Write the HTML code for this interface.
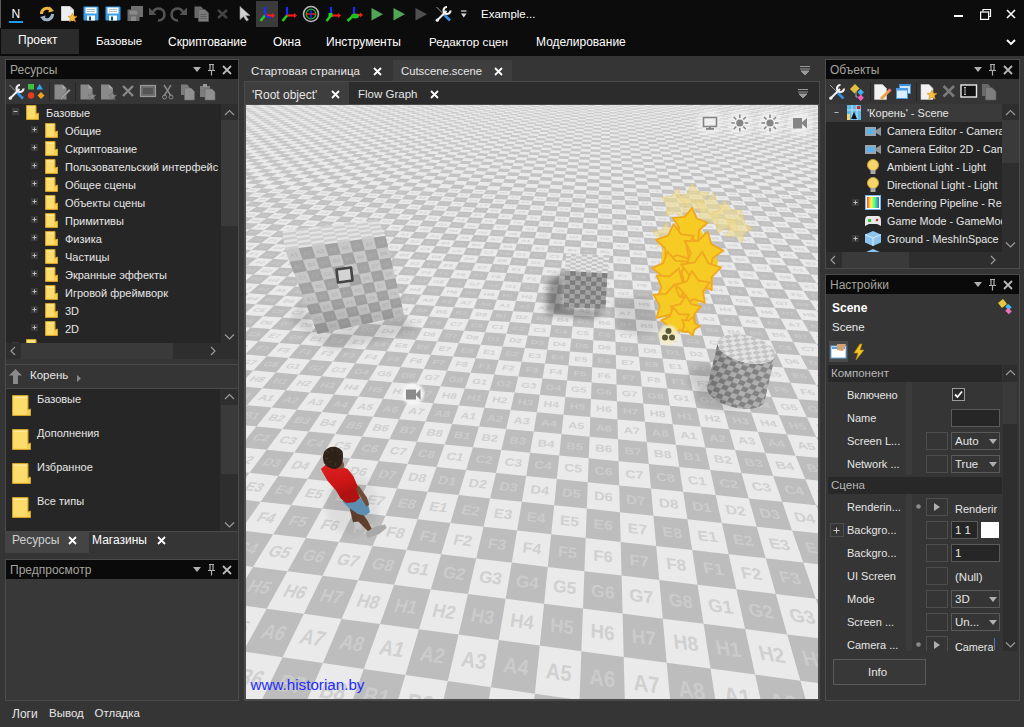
<!DOCTYPE html><html><head><meta charset="utf-8"><style>
*{margin:0;padding:0;box-sizing:border-box}
html,body{width:1024px;height:727px;overflow:hidden;background:#353535;font-family:"Liberation Sans",sans-serif;color:#e6e6e6}
body{position:relative}
.a{position:absolute}
.t{position:absolute;white-space:nowrap;line-height:1}
svg{position:absolute;overflow:visible}
</style></head><body><div class="a" style="left:0px;top:0px;width:1024px;height:56px;background:#0c0c0c;"></div><div class="a" style="left:0px;top:0px;width:1px;height:28px;background:#5a5a5a;"></div><div class="t" style="left:11.5px;top:7.84px;font-size:12px;color:#ffffff;">N</div><div class="a" style="left:9px;top:21px;width:14px;height:1.5px;background:#1e9be8;"></div><svg style="left:39px;top:6px" width="16" height="16" viewBox="0 0 16 16"><path d="M2.5 8A5.5 5.5 0 0 1 12 4" stroke="#f0b838" stroke-width="3" fill="none"/><path d="M10.5 0.5L15 5L9.5 6.5Z" fill="#f0b838"/><path d="M13.5 8A5.5 5.5 0 0 1 4 12" stroke="#9fb3c8" stroke-width="3" fill="none"/><path d="M5.5 15.5L1 11L6.5 9.5Z" fill="#9fb3c8"/></svg><svg style="left:61px;top:6px" width="16" height="16" viewBox="0 0 16 16"><path d="M0.5 0.5H9L12.5 4V14.5H0.5Z" fill="#eeeeee" stroke="#cfcfcf"/><path d="M9 0.5V4H12.5" fill="#d8d8d8"/><polygon points="11.5,7 12.9,10.2 16,10.4 13.6,12.5 14.4,15.6 11.5,13.9 8.6,15.6 9.4,12.5 7,10.4 10.1,10.2" fill="#f5c040" stroke="#e08a10" stroke-width="0.7"/></svg><svg style="left:83px;top:6px" width="16" height="15" viewBox="0 0 16 15"><rect x="0.5" y="0.5" width="15" height="14" rx="1" fill="#3a9ee8"/><rect x="2.5" y="1.5" width="11" height="6" fill="#ffffff"/><path d="M4 3.5H12M4 5.5H12" stroke="#9ab" stroke-width="0.8"/><rect x="4" y="9.5" width="8" height="5" fill="#ffffff"/><rect x="6" y="10.5" width="2" height="4" fill="#1a4a70"/></svg><svg style="left:105px;top:6px" width="16" height="15" viewBox="0 0 16 15"><rect x="0.5" y="0.5" width="15" height="14" rx="1" fill="#3a9ee8"/><rect x="2.5" y="1.5" width="11" height="6" fill="#ffffff"/><path d="M4 3.5H12M4 5.5H12" stroke="#9ab" stroke-width="0.8"/><rect x="4" y="9.5" width="8" height="5" fill="#ffffff"/><rect x="6" y="10.5" width="2" height="4" fill="#1a4a70"/></svg><svg style="left:127px;top:6px" width="16" height="15" viewBox="0 0 16 15"><rect x="4" y="0" width="12" height="11" fill="#707070"/><rect x="0.5" y="3.5" width="12" height="11.5" fill="#6a6a6a"/><rect x="2.5" y="4.5" width="8" height="4" fill="#8a8a8a"/><rect x="4" y="10.5" width="5" height="4.5" fill="#8a8a8a"/></svg><svg style="left:149px;top:6px" width="16" height="15" viewBox="0 0 16 15"><path d="M4 6A6 6 0 1 1 9 14.5" stroke="#555" stroke-width="2.6" fill="none"/><path d="M0 1.5V9H7.5Z" fill="#555"/></svg><svg style="left:171px;top:6px" width="16" height="15" viewBox="0 0 16 15"><path d="M12 6A6 6 0 1 0 7 14.5" stroke="#555" stroke-width="2.6" fill="none"/><path d="M16 1.5V9H8.5Z" fill="#555"/></svg><svg style="left:194px;top:6px" width="15" height="16" viewBox="0 0 15 16"><path d="M0.5 0.5H7L9 2.5V12H0.5Z" fill="#6a6a6a"/><path d="M4.5 3.5H11L14.5 7V15.5H4.5Z" fill="#7a7a7a" stroke="#5a5a5a" stroke-width="0.6"/><path d="M6.5 8.5H12.5M6.5 10.5H12.5M6.5 12.5H12.5" stroke="#555" stroke-width="0.8"/></svg><svg style="left:217px;top:9px" width="11" height="10" viewBox="0 0 11 10"><path d="M1 1L10 9M10 1L1 9" stroke="#444" stroke-width="2.4"/></svg><svg style="left:239px;top:6px" width="12" height="15" viewBox="0 0 12 15"><path d="M1 0.5L11 9.5H6.5L9.5 14L7.5 15L4.5 10.5L1 13.5Z" fill="#cfcfcf" stroke="#9a9a9a" stroke-width="0.6"/></svg><div class="a" style="left:256px;top:1px;width:22px;height:26px;background:#3b3b3b;"></div><svg style="left:252px;top:0" width="220" height="28" viewBox="252 0 220 28"><path d="M265 15.5V7" stroke="#1a2cff" stroke-width="2.2"/><path d="M265 15.5H273" stroke="#ff1a1a" stroke-width="2.2"/><path d="M272 13.0L275 15.5L272 18.0Z" fill="#ff1a1a"/><path d="M265 15.5L260.5 21" stroke="#22cc22" stroke-width="2.6"/><path d="M265 15.5L270.5 18" stroke="#1a2cff" stroke-width="1.6"/><path d="M287 15.5V7" stroke="#1a2cff" stroke-width="2.2"/><path d="M287 15.5H295" stroke="#ff1a1a" stroke-width="2.2"/><path d="M294 13.0L297 15.5L294 18.0Z" fill="#ff1a1a"/><path d="M287 15.5L282.5 21" stroke="#22cc22" stroke-width="2.6"/><circle cx="311" cy="14" r="7.5" stroke="#b8b8b8" stroke-width="1.6" fill="none"/><circle cx="311" cy="14" r="4.8" stroke="#22bb22" stroke-width="1.2" fill="none"/><path d="M306.5 14H315.5" stroke="#ff2020" stroke-width="1.4"/><path d="M311 9.5V18.5" stroke="#2030ff" stroke-width="1.4"/><path d="M331 15.5V7" stroke="#1a2cff" stroke-width="2.2"/><path d="M331 15.5H339" stroke="#ff1a1a" stroke-width="2.2"/><path d="M338 13.0L341 15.5L338 18.0Z" fill="#ff1a1a"/><path d="M331 15.5L326.5 21" stroke="#22cc22" stroke-width="2.6"/><rect x="328.5" y="13" width="4" height="4" fill="#22cc22"/><path d="M354 15V7" stroke="#1a2cff" stroke-width="2.2"/><path d="M354 15H361" stroke="#ff1a1a" stroke-width="2.2"/><path d="M360 12.5L363 15L360 17.5Z" fill="#ff1a1a"/><path d="M354 15L347.5 21" stroke="#22cc22" stroke-width="2.6"/><ellipse cx="355" cy="16" rx="4" ry="2.5" fill="#22bb22"/><path d="M371.5 8V20.5L383 14.2Z" fill="#50a656"/><path d="M393.5 8V20.5L405 14.2Z" fill="#50a656"/><path d="M415.5 8V20.5L427 14.2Z" fill="#505050"/><g transform="translate(435.5 6)"><path d="M1 1L8 8" stroke="#9a9a9a" stroke-width="1"/><path d="M8 8L14.5 14.5" stroke="#3a8fe0" stroke-width="2.6"/><path d="M1.5 14.5L11 5" stroke="#f0f0f0" stroke-width="2"/><path d="M11.5 1A3.5 3.5 0 1 0 15 4.5" stroke="#f0f0f0" stroke-width="2.2" fill="none"/><circle cx="1.8" cy="14.2" r="1.6" fill="#f0f0f0"/></g><path d="M461 11H466.5" stroke="#ddd" stroke-width="1.2"/><path d="M461 13.5H466.5L463.75 17.5Z" fill="#ddd"/></svg><div class="t" style="left:481px;top:9.27px;font-size:11.5px;color:#ffffff;">Example...</div><div class="a" style="left:954px;top:15px;width:9px;height:2px;background:#ffffff;"></div><svg style="left:980px;top:9px" width="11" height="11" viewBox="0 0 11 11"><path d="M3 2.5V0.5H10.5V7.5H8.5" stroke="#fff" stroke-width="1.2" fill="none"/><rect x="0.6" y="3" width="8" height="7.4" stroke="#fff" stroke-width="1.2" fill="none"/></svg><svg style="left:1006px;top:9px" width="10" height="10" viewBox="0 0 10 10"><path d="M1 1L9 9M9 1L1 9" stroke="#ffffff" stroke-width="1.6"/></svg><svg style="left:1006px;top:39px" width="10" height="7" viewBox="0 0 10 7"><path d="M1 1L5 5L9 1" stroke="#fff" stroke-width="1.8" fill="none"/></svg><div class="a" style="left:1px;top:29px;width:78px;height:25px;background:#2b2b2b;"></div><div class="t" style="left:18px;top:33.84px;font-size:12px;color:#ffffff;">Проект</div><div class="t" style="left:96px;top:36.27px;font-size:11.5px;color:#ffffff;">Базовые</div><div class="t" style="left:168px;top:35.84px;font-size:12px;color:#ffffff;">Скриптование</div><div class="t" style="left:273px;top:35.84px;font-size:12px;color:#ffffff;">Окна</div><div class="t" style="left:326px;top:35.84px;font-size:12px;color:#ffffff;">Инструменты</div><div class="t" style="left:429px;top:36.10px;font-size:11.7px;color:#ffffff;">Редактор сцен</div><div class="t" style="left:536px;top:35.84px;font-size:12px;color:#ffffff;">Моделирование</div><div class="a" style="left:5px;top:59px;width:234px;height:473px;background:#353535;border:1px solid #4b4b4b;"></div><div class="a" style="left:6px;top:60px;width:232px;height:19px;background:#0a0a0a;"></div><div class="t" style="left:10px;top:63.84px;font-size:12px;color:#a5a39e;">Ресурсы</div><svg style="left:193px;top:67px" width="8" height="5" viewBox="0 0 8 5"><path d="M0 0H8L4 5Z" fill="#b0b0b0"/></svg><svg style="left:207px;top:64px" width="9" height="12" viewBox="0 0 9 12"><path d="M2 0.5H7M3 0.5V6M6 0.5V6M1 6.5H8M4.5 7V11.5" stroke="#b0b0b0" stroke-width="1.2" fill="none"/></svg><svg style="left:222px;top:65px" width="10" height="10" viewBox="0 0 10 10"><path d="M1 1L9 9M9 1L1 9" stroke="#b8b8b8" stroke-width="1.8"/></svg><svg style="left:0;top:79px" width="240" height="24" viewBox="0 79 240 24"><g transform="translate(8.5 84)"><path d="M1 1L8 8" stroke="#9a9a9a" stroke-width="1"/><path d="M8 8L14.5 14.5" stroke="#3a8fe0" stroke-width="2.6"/><path d="M1.5 14.5L11 5" stroke="#f0f0f0" stroke-width="2"/><path d="M11.5 1A3.5 3.5 0 1 0 15 4.5" stroke="#f0f0f0" stroke-width="2.2" fill="none"/><circle cx="1.8" cy="14.2" r="1.6" fill="#f0f0f0"/></g><rect x="28" y="84" width="6" height="5.5" fill="#40c040"/><path d="M36.5 84L40 89.5H33.5Z" fill="#30a8f0" transform="translate(3 0)"/><circle cx="31" cy="95.5" r="3.2" fill="#e83a20"/><path d="M41 92L44.5 95.5L41 99L37.5 95.5Z" fill="#f0a020"/><rect x="49" y="83" width="1" height="18" fill="#262626"/><rect x="75" y="83" width="1" height="18" fill="#262626"/><g transform="translate(54 84)"><path d="M0.5 0.5H8.5L12.5 4.5V15.5H0.5Z" fill="#8a8a8a"/><path d="M8.5 0.5V4.5H12.5" fill="#a8a8a8"/><path d="M6 14L15 5L16.5 6.5L7.5 15.5Z" fill="#a0a0a0" stroke="#6a6a6a" stroke-width="0.6"/></g><g transform="translate(80 84)"><path d="M0.5 0.5H8.5L12.5 4.5V15.5H0.5Z" fill="#8a8a8a"/><path d="M8.5 0.5V4.5H12.5" fill="#a8a8a8"/><polygon points="12,8 13.2,11 16,11.2 13.8,13 14.6,16 12,14.3 9.4,16 10.2,13 8,11.2 10.8,11" fill="#8a8a8a" stroke="#6a6a6a" stroke-width="0.6"/></g><g transform="translate(100.5 84)"><path d="M0.5 0.5H8.5L12.5 4.5V15.5H0.5Z" fill="#8a8a8a"/><path d="M8.5 0.5V4.5H12.5" fill="#a8a8a8"/><polygon points="12,8 13.2,11 16,11.2 13.8,13 14.6,16 12,14.3 9.4,16 10.2,13 8,11.2 10.8,11" fill="#8a8a8a" stroke="#6a6a6a" stroke-width="0.6"/></g><path d="M123 86L133 96M133 86L123 96" stroke="#8a8a8a" stroke-width="2.4"/><rect x="140.5" y="85.5" width="15" height="11" fill="#6a6a6a" stroke="#9a9a9a" stroke-width="1.2"/><rect x="143" y="88" width="10" height="6" fill="#555"/><path d="M164 85L171 96M171 85L164 96" stroke="#8a8a8a" stroke-width="1.4"/><circle cx="164.5" cy="97" r="2" stroke="#8a8a8a" fill="none"/><circle cx="171" cy="97" r="2" stroke="#8a8a8a" fill="none"/><path d="M181 84.5H187L189 86.5V95H181Z" fill="#7c7c7c"/><path d="M184.5 88H191L194.5 91.5V100H184.5Z" fill="#909090" stroke="#6a6a6a" stroke-width="0.6"/><rect x="200" y="86" width="10" height="11" fill="#7c7c7c"/><rect x="203" y="84" width="4" height="3" fill="#9a9a9a"/><path d="M205 89H212L215 92V100H205Z" fill="#909090" stroke="#6a6a6a" stroke-width="0.6"/></svg><div class="a" style="left:6px;top:104px;width:232px;height:239px;background:#262626;"></div><div class="a" style="left:221px;top:104px;width:17px;height:239px;background:#2e2e2e;"></div><div class="a" style="left:221px;top:120px;width:17px;height:106px;background:#3a3a3a;"></div><svg style="left:224px;top:109px" width="11" height="8" viewBox="0 0 11 8"><path d="M1 6L5.5 1.5L10 6" stroke="#9a9a9a" stroke-width="1.2" fill="none"/></svg><svg style="left:224px;top:333px" width="11" height="8" viewBox="0 0 11 8"><path d="M1 1.5L5.5 6L10 1.5" stroke="#9a9a9a" stroke-width="1.2" fill="none"/></svg><div class="a" style="left:6px;top:104px;width:215px;height:239px;overflow:hidden"><svg style="left:6px;top:4px" width="7" height="7" viewBox="0 0 7 7"><rect x="0" y="0" width="7" height="7" fill="#3a3a3a"/><path d="M1.5 3.5H5.5" stroke="#bbb" stroke-width="1"/></svg><svg style="left:20px;top:1px" width="13" height="15" viewBox="0 0 13 15"><path d="M0.5 0.5H10L10 9L12.5 8V14.5H0.5Z" fill="#f6cf4e" stroke="#d2a326" stroke-width="1"/><path d="M1.5 1.5H9V13.5H1.5Z" fill="#fbdc6c"/><path d="M1.5 1.5H9V3H1.5Z" fill="#fde79a"/></svg><div class="t" style="left:40px;top:3.69px;font-size:11px;color:#e6e6e6;">Базовые</div><svg style="left:25px;top:22px" width="7" height="7" viewBox="0 0 7 7"><rect x="0" y="0" width="7" height="7" fill="#3a3a3a"/><path d="M1.5 3.5H5.5" stroke="#bbb" stroke-width="1"/><path d="M3.5 1.5V5.5" stroke="#bbb" stroke-width="1"/></svg><svg style="left:39px;top:19px" width="13" height="15" viewBox="0 0 13 15"><path d="M0.5 0.5H10L10 9L12.5 8V14.5H0.5Z" fill="#f6cf4e" stroke="#d2a326" stroke-width="1"/><path d="M1.5 1.5H9V13.5H1.5Z" fill="#fbdc6c"/><path d="M1.5 1.5H9V3H1.5Z" fill="#fde79a"/></svg><div class="t" style="left:59px;top:21.69px;font-size:11px;color:#e6e6e6;">Общие</div><svg style="left:25px;top:40px" width="7" height="7" viewBox="0 0 7 7"><rect x="0" y="0" width="7" height="7" fill="#3a3a3a"/><path d="M1.5 3.5H5.5" stroke="#bbb" stroke-width="1"/><path d="M3.5 1.5V5.5" stroke="#bbb" stroke-width="1"/></svg><svg style="left:39px;top:37px" width="13" height="15" viewBox="0 0 13 15"><path d="M0.5 0.5H10L10 9L12.5 8V14.5H0.5Z" fill="#f6cf4e" stroke="#d2a326" stroke-width="1"/><path d="M1.5 1.5H9V13.5H1.5Z" fill="#fbdc6c"/><path d="M1.5 1.5H9V3H1.5Z" fill="#fde79a"/></svg><div class="t" style="left:59px;top:39.69px;font-size:11px;color:#e6e6e6;">Скриптование</div><svg style="left:25px;top:58px" width="7" height="7" viewBox="0 0 7 7"><rect x="0" y="0" width="7" height="7" fill="#3a3a3a"/><path d="M1.5 3.5H5.5" stroke="#bbb" stroke-width="1"/><path d="M3.5 1.5V5.5" stroke="#bbb" stroke-width="1"/></svg><svg style="left:39px;top:55px" width="13" height="15" viewBox="0 0 13 15"><path d="M0.5 0.5H10L10 9L12.5 8V14.5H0.5Z" fill="#f6cf4e" stroke="#d2a326" stroke-width="1"/><path d="M1.5 1.5H9V13.5H1.5Z" fill="#fbdc6c"/><path d="M1.5 1.5H9V3H1.5Z" fill="#fde79a"/></svg><div class="t" style="left:59px;top:57.69px;font-size:11px;color:#e6e6e6;">Пользовательский интерфейс</div><svg style="left:25px;top:76px" width="7" height="7" viewBox="0 0 7 7"><rect x="0" y="0" width="7" height="7" fill="#3a3a3a"/><path d="M1.5 3.5H5.5" stroke="#bbb" stroke-width="1"/><path d="M3.5 1.5V5.5" stroke="#bbb" stroke-width="1"/></svg><svg style="left:39px;top:73px" width="13" height="15" viewBox="0 0 13 15"><path d="M0.5 0.5H10L10 9L12.5 8V14.5H0.5Z" fill="#f6cf4e" stroke="#d2a326" stroke-width="1"/><path d="M1.5 1.5H9V13.5H1.5Z" fill="#fbdc6c"/><path d="M1.5 1.5H9V3H1.5Z" fill="#fde79a"/></svg><div class="t" style="left:59px;top:75.69px;font-size:11px;color:#e6e6e6;">Общее сцены</div><svg style="left:25px;top:94px" width="7" height="7" viewBox="0 0 7 7"><rect x="0" y="0" width="7" height="7" fill="#3a3a3a"/><path d="M1.5 3.5H5.5" stroke="#bbb" stroke-width="1"/><path d="M3.5 1.5V5.5" stroke="#bbb" stroke-width="1"/></svg><svg style="left:39px;top:91px" width="13" height="15" viewBox="0 0 13 15"><path d="M0.5 0.5H10L10 9L12.5 8V14.5H0.5Z" fill="#f6cf4e" stroke="#d2a326" stroke-width="1"/><path d="M1.5 1.5H9V13.5H1.5Z" fill="#fbdc6c"/><path d="M1.5 1.5H9V3H1.5Z" fill="#fde79a"/></svg><div class="t" style="left:59px;top:93.69px;font-size:11px;color:#e6e6e6;">Объекты сцены</div><svg style="left:25px;top:112px" width="7" height="7" viewBox="0 0 7 7"><rect x="0" y="0" width="7" height="7" fill="#3a3a3a"/><path d="M1.5 3.5H5.5" stroke="#bbb" stroke-width="1"/><path d="M3.5 1.5V5.5" stroke="#bbb" stroke-width="1"/></svg><svg style="left:39px;top:109px" width="13" height="15" viewBox="0 0 13 15"><path d="M0.5 0.5H10L10 9L12.5 8V14.5H0.5Z" fill="#f6cf4e" stroke="#d2a326" stroke-width="1"/><path d="M1.5 1.5H9V13.5H1.5Z" fill="#fbdc6c"/><path d="M1.5 1.5H9V3H1.5Z" fill="#fde79a"/></svg><div class="t" style="left:59px;top:111.69px;font-size:11px;color:#e6e6e6;">Примитивы</div><svg style="left:25px;top:130px" width="7" height="7" viewBox="0 0 7 7"><rect x="0" y="0" width="7" height="7" fill="#3a3a3a"/><path d="M1.5 3.5H5.5" stroke="#bbb" stroke-width="1"/><path d="M3.5 1.5V5.5" stroke="#bbb" stroke-width="1"/></svg><svg style="left:39px;top:127px" width="13" height="15" viewBox="0 0 13 15"><path d="M0.5 0.5H10L10 9L12.5 8V14.5H0.5Z" fill="#f6cf4e" stroke="#d2a326" stroke-width="1"/><path d="M1.5 1.5H9V13.5H1.5Z" fill="#fbdc6c"/><path d="M1.5 1.5H9V3H1.5Z" fill="#fde79a"/></svg><div class="t" style="left:59px;top:129.69px;font-size:11px;color:#e6e6e6;">Физика</div><svg style="left:25px;top:148px" width="7" height="7" viewBox="0 0 7 7"><rect x="0" y="0" width="7" height="7" fill="#3a3a3a"/><path d="M1.5 3.5H5.5" stroke="#bbb" stroke-width="1"/><path d="M3.5 1.5V5.5" stroke="#bbb" stroke-width="1"/></svg><svg style="left:39px;top:145px" width="13" height="15" viewBox="0 0 13 15"><path d="M0.5 0.5H10L10 9L12.5 8V14.5H0.5Z" fill="#f6cf4e" stroke="#d2a326" stroke-width="1"/><path d="M1.5 1.5H9V13.5H1.5Z" fill="#fbdc6c"/><path d="M1.5 1.5H9V3H1.5Z" fill="#fde79a"/></svg><div class="t" style="left:59px;top:147.69px;font-size:11px;color:#e6e6e6;">Частицы</div><svg style="left:25px;top:166px" width="7" height="7" viewBox="0 0 7 7"><rect x="0" y="0" width="7" height="7" fill="#3a3a3a"/><path d="M1.5 3.5H5.5" stroke="#bbb" stroke-width="1"/><path d="M3.5 1.5V5.5" stroke="#bbb" stroke-width="1"/></svg><svg style="left:39px;top:163px" width="13" height="15" viewBox="0 0 13 15"><path d="M0.5 0.5H10L10 9L12.5 8V14.5H0.5Z" fill="#f6cf4e" stroke="#d2a326" stroke-width="1"/><path d="M1.5 1.5H9V13.5H1.5Z" fill="#fbdc6c"/><path d="M1.5 1.5H9V3H1.5Z" fill="#fde79a"/></svg><div class="t" style="left:59px;top:165.69px;font-size:11px;color:#e6e6e6;">Экранные эффекты</div><svg style="left:25px;top:184px" width="7" height="7" viewBox="0 0 7 7"><rect x="0" y="0" width="7" height="7" fill="#3a3a3a"/><path d="M1.5 3.5H5.5" stroke="#bbb" stroke-width="1"/><path d="M3.5 1.5V5.5" stroke="#bbb" stroke-width="1"/></svg><svg style="left:39px;top:181px" width="13" height="15" viewBox="0 0 13 15"><path d="M0.5 0.5H10L10 9L12.5 8V14.5H0.5Z" fill="#f6cf4e" stroke="#d2a326" stroke-width="1"/><path d="M1.5 1.5H9V13.5H1.5Z" fill="#fbdc6c"/><path d="M1.5 1.5H9V3H1.5Z" fill="#fde79a"/></svg><div class="t" style="left:59px;top:183.69px;font-size:11px;color:#e6e6e6;">Игровой фреймворк</div><svg style="left:25px;top:202px" width="7" height="7" viewBox="0 0 7 7"><rect x="0" y="0" width="7" height="7" fill="#3a3a3a"/><path d="M1.5 3.5H5.5" stroke="#bbb" stroke-width="1"/><path d="M3.5 1.5V5.5" stroke="#bbb" stroke-width="1"/></svg><svg style="left:39px;top:199px" width="13" height="15" viewBox="0 0 13 15"><path d="M0.5 0.5H10L10 9L12.5 8V14.5H0.5Z" fill="#f6cf4e" stroke="#d2a326" stroke-width="1"/><path d="M1.5 1.5H9V13.5H1.5Z" fill="#fbdc6c"/><path d="M1.5 1.5H9V3H1.5Z" fill="#fde79a"/></svg><div class="t" style="left:59px;top:201.69px;font-size:11px;color:#e6e6e6;">3D</div><svg style="left:25px;top:220px" width="7" height="7" viewBox="0 0 7 7"><rect x="0" y="0" width="7" height="7" fill="#3a3a3a"/><path d="M1.5 3.5H5.5" stroke="#bbb" stroke-width="1"/><path d="M3.5 1.5V5.5" stroke="#bbb" stroke-width="1"/></svg><svg style="left:39px;top:217px" width="13" height="15" viewBox="0 0 13 15"><path d="M0.5 0.5H10L10 9L12.5 8V14.5H0.5Z" fill="#f6cf4e" stroke="#d2a326" stroke-width="1"/><path d="M1.5 1.5H9V13.5H1.5Z" fill="#fbdc6c"/><path d="M1.5 1.5H9V3H1.5Z" fill="#fde79a"/></svg><div class="t" style="left:59px;top:219.69px;font-size:11px;color:#e6e6e6;">2D</div><svg style="left:6px;top:238px" width="7" height="7" viewBox="0 0 7 7"><rect x="0" y="0" width="7" height="7" fill="#3a3a3a"/><path d="M1.5 3.5H5.5" stroke="#bbb" stroke-width="1"/></svg><svg style="left:20px;top:235px" width="13" height="15" viewBox="0 0 13 15"><path d="M0.5 0.5H10L10 9L12.5 8V14.5H0.5Z" fill="#f6cf4e" stroke="#d2a326" stroke-width="1"/><path d="M1.5 1.5H9V13.5H1.5Z" fill="#fbdc6c"/><path d="M1.5 1.5H9V3H1.5Z" fill="#fde79a"/></svg></div><div class="a" style="left:6px;top:343px;width:232px;height:16px;background:#2e2e2e;"></div><div class="a" style="left:21px;top:343px;width:152px;height:16px;background:#3a3a3a;"></div><svg style="left:10px;top:346px" width="6" height="10" viewBox="0 0 6 10"><path d="M5 1L1 5L5 9" stroke="#9a9a9a" stroke-width="1.2" fill="none"/></svg><svg style="left:209.5px;top:346px" width="6" height="10" viewBox="0 0 6 10"><path d="M1 1L5 5L1 9" stroke="#9a9a9a" stroke-width="1.2" fill="none"/></svg><div class="a" style="left:6px;top:364px;width:232px;height:1px;background:#4b4b4b;"></div><svg style="left:9px;top:369px" width="13" height="15" viewBox="0 0 13 15"><path d="M6.5 0L13 6.5H9V15H4V6.5H0Z" fill="#8a8a8a"/></svg><div class="t" style="left:30px;top:370.27px;font-size:11.5px;color:#e6e6e6;">Корень</div><svg style="left:77px;top:375px" width="4" height="7" viewBox="0 0 4 7"><path d="M0 0L4 3.5L0 7Z" fill="#8a8a8a"/></svg><div class="a" style="left:6px;top:388px;width:232px;height:1px;background:#4b4b4b;"></div><div class="a" style="left:6px;top:389px;width:232px;height:142px;background:#262626;"></div><div class="a" style="left:220px;top:389px;width:18px;height:142px;background:#2e2e2e;"></div><div class="a" style="left:221px;top:405px;width:17px;height:69px;background:#3a3a3a;"></div><svg style="left:224px;top:393px" width="11" height="8" viewBox="0 0 11 8"><path d="M1 6L5.5 1.5L10 6" stroke="#9a9a9a" stroke-width="1.2" fill="none"/></svg><svg style="left:224px;top:521px" width="11" height="8" viewBox="0 0 11 8"><path d="M1 1.5L5.5 6L10 1.5" stroke="#9a9a9a" stroke-width="1.2" fill="none"/></svg><div class="a" style="left:6px;top:389px;width:214px;height:142px;overflow:hidden"><svg style="left:6px;top:6px" width="19" height="21" viewBox="0 0 19 21"><path d="M0.5 0.5H16L16 15L18.5 14V20.5H0.5Z" fill="#f6cf4e" stroke="#d2a326" stroke-width="1"/><path d="M1.5 1.5H15V19.5H1.5Z" fill="#fbdc6c"/><path d="M1.5 1.5H15V3H1.5Z" fill="#fde79a"/></svg><div class="t" style="left:31px;top:4.69px;font-size:11px;color:#e6e6e6;">Базовые</div><svg style="left:6px;top:40px" width="19" height="21" viewBox="0 0 19 21"><path d="M0.5 0.5H16L16 15L18.5 14V20.5H0.5Z" fill="#f6cf4e" stroke="#d2a326" stroke-width="1"/><path d="M1.5 1.5H15V19.5H1.5Z" fill="#fbdc6c"/><path d="M1.5 1.5H15V3H1.5Z" fill="#fde79a"/></svg><div class="t" style="left:31px;top:38.69px;font-size:11px;color:#e6e6e6;">Дополнения</div><svg style="left:6px;top:74px" width="19" height="21" viewBox="0 0 19 21"><path d="M0.5 0.5H16L16 15L18.5 14V20.5H0.5Z" fill="#f6cf4e" stroke="#d2a326" stroke-width="1"/><path d="M1.5 1.5H15V19.5H1.5Z" fill="#fbdc6c"/><path d="M1.5 1.5H15V3H1.5Z" fill="#fde79a"/></svg><div class="t" style="left:31px;top:72.69px;font-size:11px;color:#e6e6e6;">Избранное</div><svg style="left:6px;top:108px" width="19" height="21" viewBox="0 0 19 21"><path d="M0.5 0.5H16L16 15L18.5 14V20.5H0.5Z" fill="#f6cf4e" stroke="#d2a326" stroke-width="1"/><path d="M1.5 1.5H15V19.5H1.5Z" fill="#fbdc6c"/><path d="M1.5 1.5H15V3H1.5Z" fill="#fde79a"/></svg><div class="t" style="left:31px;top:106.69px;font-size:11px;color:#e6e6e6;">Все типы</div><svg style="left:6px;top:142px" width="19" height="21" viewBox="0 0 19 21"><path d="M0.5 0.5H16L16 15L18.5 14V20.5H0.5Z" fill="#f6cf4e" stroke="#d2a326" stroke-width="1"/><path d="M1.5 1.5H15V19.5H1.5Z" fill="#fbdc6c"/><path d="M1.5 1.5H15V3H1.5Z" fill="#fde79a"/></svg></div><div class="a" style="left:5px;top:531px;width:84px;height:22px;background:#444444;"></div><div class="t" style="left:12px;top:533.84px;font-size:12px;color:#d0d0d0;">Ресурсы</div><svg style="left:68px;top:536px" width="9" height="9" viewBox="0 0 9 9"><path d="M1 1L8 8M8 1L1 8" stroke="#ffffff" stroke-width="1.8"/></svg><div class="t" style="left:92px;top:533.84px;font-size:12px;color:#ffffff;">Магазины</div><svg style="left:157px;top:536px" width="9" height="9" viewBox="0 0 9 9"><path d="M1 1L8 8M8 1L1 8" stroke="#ffffff" stroke-width="1.8"/></svg><div class="a" style="left:5px;top:559px;width:234px;height:142px;background:#383838;border:1px solid #4b4b4b;"></div><div class="a" style="left:6px;top:560px;width:232px;height:19px;background:#0a0a0a;"></div><div class="t" style="left:10px;top:563.84px;font-size:12px;color:#a5a39e;">Предпросмотр</div><svg style="left:193px;top:567px" width="8" height="5" viewBox="0 0 8 5"><path d="M0 0H8L4 5Z" fill="#b0b0b0"/></svg><svg style="left:207px;top:564px" width="9" height="12" viewBox="0 0 9 12"><path d="M2 0.5H7M3 0.5V6M6 0.5V6M1 6.5H8M4.5 7V11.5" stroke="#b0b0b0" stroke-width="1.2" fill="none"/></svg><svg style="left:222px;top:565px" width="10" height="10" viewBox="0 0 10 10"><path d="M1 1L9 9M9 1L1 9" stroke="#b8b8b8" stroke-width="1.8"/></svg><div class="t" style="left:12px;top:707.84px;font-size:12px;color:#e6e6e6;">Логи</div><div class="t" style="left:49px;top:708.27px;font-size:11.5px;color:#e6e6e6;">Вывод</div><div class="t" style="left:94.5px;top:708.27px;font-size:11.5px;color:#e6e6e6;">Отладка</div><div class="a" style="left:238px;top:59px;width:1px;height:642px;background:#4b4b4b;"></div><div class="a" style="left:393px;top:60px;width:119px;height:21px;background:#3e3e3e;"></div><div class="t" style="left:251px;top:66.27px;font-size:11.5px;color:#e6e6e6;">Стартовая страница</div><svg style="left:373px;top:67px" width="9" height="9" viewBox="0 0 9 9"><path d="M1 1L8 8M8 1L1 8" stroke="#ffffff" stroke-width="1.8"/></svg><div class="t" style="left:401px;top:66.43px;font-size:11.3px;color:#e6e6e6;">Cutscene.scene</div><svg style="left:494px;top:67px" width="9" height="9" viewBox="0 0 9 9"><path d="M1 1L8 8M8 1L1 8" stroke="#ffffff" stroke-width="1.8"/></svg><svg style="left:800px;top:66px" width="10" height="9" viewBox="0 0 10 9"><path d="M0 0.5H10M0 3H10M1 5H9L5 9Z" fill="#9a9a9a" stroke="#9a9a9a" stroke-width="1"/></svg><div class="a" style="left:244px;top:81px;width:576px;height:620px;background:#4b4b4b;"></div><div class="a" style="left:245px;top:82px;width:574px;height:618px;background:#2c2c2c;"></div><div class="a" style="left:245px;top:82px;width:104px;height:22px;background:#3e3e3e;"></div><div class="t" style="left:252px;top:88.84px;font-size:12px;color:#e6e6e6;">'Root object'</div><svg style="left:331px;top:90px" width="9" height="9" viewBox="0 0 9 9"><path d="M1 1L8 8M8 1L1 8" stroke="#ffffff" stroke-width="1.8"/></svg><div class="t" style="left:358px;top:89.27px;font-size:11.5px;color:#e6e6e6;">Flow Graph</div><svg style="left:430px;top:90px" width="9" height="9" viewBox="0 0 9 9"><path d="M1 1L8 8M8 1L1 8" stroke="#ffffff" stroke-width="1.8"/></svg><svg style="left:798px;top:89px" width="10" height="9" viewBox="0 0 10 9"><path d="M0 0.5H10M0 3H10M1 5H9L5 9Z" fill="#9a9a9a" stroke="#9a9a9a" stroke-width="1"/></svg><div class="a" style="left:244px;top:104px;width:576px;height:597px;background:#4b4b4b;"></div><div class="a" style="left:246px;top:105px;width:572px;height:594px;overflow:hidden"><svg style="left:0;top:0;overflow:hidden" width="572" height="594" viewBox="246 105 572 594"><rect x="246" y="105" width="572" height="594" fill="#eaeaea"/><path fill="#bdbdbd" d="M688.0 283.9L706.8 285.0L710.0 294.1L690.5 292.9ZM725.9 286.1L745.0 287.3L749.4 296.6L729.6 295.3ZM764.3 288.5L783.8 289.6L789.4 299.1L769.4 297.8ZM803.3 290.8L823.1 292.0L830.1 301.6L809.7 300.3ZM558.2 284.7L576.7 285.9L575.7 295.1L556.7 293.8ZM595.3 287.0L614.1 288.2L614.3 297.5L594.9 296.3ZM633.0 289.4L652.0 290.5L653.5 300.0L633.8 298.8ZM671.2 291.7L690.5 292.9L693.3 302.6L673.3 301.3ZM710.0 294.1L729.6 295.3L733.7 305.2L713.4 303.9ZM749.4 296.6L769.4 297.8L774.7 307.8L754.1 306.5ZM789.4 299.1L809.7 300.3L816.4 310.4L795.5 309.1ZM391.4 283.3L409.2 284.4L402.9 293.6L384.6 292.3ZM427.1 285.6L445.2 286.7L440.1 296.0L421.4 294.8ZM463.5 287.9L481.8 289.1L477.8 298.5L458.9 297.2ZM500.3 290.2L519.0 291.4L516.1 301.0L496.9 299.7ZM537.7 292.6L556.7 293.8L555.0 303.6L535.5 302.3ZM575.7 295.1L594.9 296.3L594.6 306.2L574.7 304.9ZM614.3 297.5L633.8 298.8L634.7 308.8L614.6 307.5ZM653.5 300.0L673.3 301.3L675.5 311.5L655.0 310.2ZM693.3 302.6L713.4 303.9L717.0 314.2L696.2 312.9ZM733.7 305.2L754.1 306.5L759.1 317.0L738.0 315.6ZM774.7 307.8L795.5 309.1L802.0 319.8L780.5 318.4ZM816.4 310.4L837.6 311.8L845.5 322.7L823.7 321.3ZM259.9 284.1L277.3 285.3L266.8 294.5L248.9 293.3ZM294.8 286.4L312.5 287.6L303.1 297.0L284.9 295.7ZM330.3 288.8L348.3 290.0L339.9 299.5L321.4 298.2ZM366.4 291.1L384.6 292.3L377.4 302.0L358.6 300.7ZM402.9 293.6L421.4 294.8L415.4 304.6L396.3 303.3ZM440.1 296.0L458.9 297.2L454.0 307.2L434.6 305.9ZM477.8 298.5L496.9 299.7L493.2 309.9L473.5 308.5ZM516.1 301.0L535.5 302.3L533.1 312.6L513.1 311.2ZM555.0 303.6L574.7 304.9L573.6 315.3L553.3 314.0ZM594.6 306.2L614.6 307.5L614.8 318.1L594.2 316.7ZM634.7 308.8L655.0 310.2L656.7 321.0L635.7 319.6ZM675.5 311.5L696.2 312.9L699.3 323.9L677.9 322.4ZM717.0 314.2L738.0 315.6L742.6 326.8L720.8 325.3ZM759.1 317.0L780.5 318.4L786.6 329.8L764.5 328.3ZM802.0 319.8L823.7 321.3L831.4 332.9L808.9 331.3ZM231.1 292.1L248.9 293.3L237.2 303.0L218.8 301.7ZM266.8 294.5L284.9 295.7L274.3 305.6L255.7 304.3ZM303.1 297.0L321.4 298.2L312.0 308.3L293.0 306.9ZM339.9 299.5L358.6 300.7L350.3 310.9L331.0 309.6ZM377.4 302.0L396.3 303.3L389.2 313.7L369.7 312.3ZM415.4 304.6L434.6 305.9L428.8 316.5L408.9 315.1ZM454.0 307.2L473.5 308.5L469.0 319.3L448.8 317.9ZM493.2 309.9L513.1 311.2L509.9 322.1L489.3 320.7ZM533.1 312.6L553.3 314.0L551.4 325.1L530.6 323.6ZM573.6 315.3L594.2 316.7L593.7 328.0L572.5 326.5ZM614.8 318.1L635.7 319.6L636.7 331.1L615.1 329.5ZM656.7 321.0L677.9 322.4L680.5 334.1L658.5 332.6ZM699.3 323.9L720.8 325.3L725.0 337.2L702.6 335.7ZM742.6 326.8L764.5 328.3L770.3 340.4L747.5 338.8ZM786.6 329.8L808.9 331.3L816.4 343.7L793.2 342.0ZM237.2 303.0L255.7 304.3L243.7 314.8L224.7 313.4ZM274.3 305.6L293.0 306.9L282.3 317.6L262.9 316.2ZM312.0 308.3L331.0 309.6L321.5 320.4L301.8 319.0ZM350.3 310.9L369.7 312.3L361.4 323.3L341.4 321.9ZM389.2 313.7L408.9 315.1L402.0 326.3L381.6 324.8ZM428.8 316.5L448.8 317.9L443.2 329.3L422.5 327.8ZM469.0 319.3L489.3 320.7L485.2 332.3L464.1 330.8ZM509.9 322.1L530.6 323.6L527.8 335.4L506.4 333.8ZM551.4 325.1L572.5 326.5L571.3 338.6L549.5 337.0ZM593.7 328.0L615.1 329.5L615.5 341.8L593.3 340.2ZM636.7 331.1L658.5 332.6L660.4 345.0L637.8 343.4ZM680.5 334.1L702.6 335.7L706.2 348.4L683.2 346.7ZM725.0 337.2L747.5 338.8L752.9 351.7L729.4 350.0ZM770.3 340.4L793.2 342.0L800.3 355.2L776.5 353.5ZM816.4 343.7L839.7 345.3L848.7 358.7L824.4 356.9ZM243.7 314.8L262.9 316.2L250.8 327.5L231.0 326.0ZM282.3 317.6L301.8 319.0L291.0 330.5L270.8 329.0ZM321.5 320.4L341.4 321.9L331.9 333.6L311.3 332.0ZM361.4 323.3L381.6 324.8L373.4 336.7L352.6 335.1ZM402.0 326.3L422.5 327.8L415.8 339.9L394.5 338.3ZM443.2 329.3L464.1 330.8L458.8 343.1L437.2 341.5ZM485.2 332.3L506.4 333.8L502.7 346.4L480.7 344.8ZM527.8 335.4L549.5 337.0L547.3 349.8L524.9 348.1ZM571.3 338.6L593.3 340.2L592.8 353.2L569.9 351.5ZM615.5 341.8L637.8 343.4L639.0 356.7L615.8 354.9ZM660.4 345.0L683.2 346.7L686.2 360.2L662.5 358.4ZM706.2 348.4L729.4 350.0L734.2 363.8L710.1 362.0ZM752.9 351.7L776.5 353.5L783.2 367.5L758.6 365.7ZM800.3 355.2L824.4 356.9L833.0 371.3L808.0 369.4ZM250.8 327.5L270.8 329.0L258.5 341.2L237.8 339.6ZM291.0 330.5L311.3 332.0L300.4 344.5L279.3 342.9ZM331.9 333.6L352.6 335.1L343.1 347.8L321.6 346.2ZM373.4 336.7L394.5 338.3L386.5 351.2L364.7 349.5ZM415.8 339.9L437.2 341.5L430.8 354.7L408.5 352.9ZM458.8 343.1L480.7 344.8L475.8 358.2L453.2 356.4ZM502.7 346.4L524.9 348.1L521.7 361.8L498.7 360.0ZM547.3 349.8L569.9 351.5L568.5 365.4L545.0 363.6ZM592.8 353.2L615.8 354.9L616.2 369.1L592.2 367.3ZM639.0 356.7L662.5 358.4L664.8 372.9L640.3 371.0ZM686.2 360.2L710.1 362.0L714.3 376.8L689.4 374.9ZM734.2 363.8L758.6 365.7L764.8 380.7L739.4 378.8ZM783.2 367.5L808.0 369.4L816.3 384.8L790.4 382.7ZM258.5 341.2L279.3 342.9L266.8 356.2L245.2 354.4ZM300.4 344.5L321.6 346.2L310.6 359.7L288.6 357.9ZM343.1 347.8L364.7 349.5L355.2 363.3L332.8 361.5ZM386.5 351.2L408.5 352.9L400.7 367.0L377.9 365.2ZM430.8 354.7L453.2 356.4L447.1 370.8L423.8 368.9ZM475.8 358.2L498.7 360.0L494.3 374.6L470.6 372.7ZM521.7 361.8L545.0 363.6L542.5 378.5L518.3 376.6ZM568.5 365.4L592.2 367.3L591.6 382.5L567.0 380.5ZM616.2 369.1L640.3 371.0L641.8 386.6L616.6 384.5ZM664.8 372.9L689.4 374.9L692.9 390.7L667.2 388.6ZM714.3 376.8L739.4 378.8L745.0 394.9L718.8 392.8ZM764.8 380.7L790.4 382.7L798.3 399.3L771.5 397.1ZM816.3 384.8L842.4 386.8L852.6 403.7L825.3 401.4ZM266.8 356.2L288.6 357.9L275.9 372.4L253.3 370.5ZM310.6 359.7L332.8 361.5L321.7 376.3L298.7 374.4ZM355.2 363.3L377.9 365.2L368.5 380.3L345.0 378.3ZM400.7 367.0L423.8 368.9L416.3 384.3L392.3 382.3ZM447.1 370.8L470.6 372.7L464.9 388.4L440.5 386.3ZM494.3 374.6L518.3 376.6L514.6 392.6L489.6 390.5ZM542.5 378.5L567.0 380.5L565.3 396.9L539.8 394.7ZM591.6 382.5L616.6 384.5L617.0 401.2L591.0 399.0ZM641.8 386.6L667.2 388.6L669.8 405.7L643.3 403.4ZM692.9 390.7L718.8 392.8L723.8 410.2L696.6 407.9ZM745.0 394.9L771.5 397.1L778.8 414.9L751.1 412.5ZM798.3 399.3L825.3 401.4L835.1 419.6L806.8 417.2ZM230.9 368.6L253.3 370.5L238.6 386.1L215.3 384.0ZM275.9 372.4L298.7 374.4L285.8 390.2L262.1 388.2ZM321.7 376.3L345.0 378.3L333.9 394.5L309.7 392.4ZM368.5 380.3L392.3 382.3L383.1 398.8L358.4 396.6ZM416.3 384.3L440.5 386.3L433.3 403.2L408.1 401.0ZM464.9 388.4L489.6 390.5L484.5 407.7L458.8 405.5ZM514.6 392.6L539.8 394.7L536.9 412.3L510.6 410.0ZM565.3 396.9L591.0 399.0L590.3 417.0L563.5 414.7ZM617.0 401.2L643.3 403.4L644.9 421.8L617.5 419.4ZM669.8 405.7L696.6 407.9L700.8 426.7L672.7 424.3ZM723.8 410.2L751.1 412.5L757.8 431.8L729.1 429.2ZM778.8 414.9L806.8 417.2L816.2 436.9L786.8 434.3ZM238.6 386.1L262.1 388.2L247.1 405.2L222.6 403.0ZM285.8 390.2L309.7 392.4L296.7 409.8L271.7 407.5ZM333.9 394.5L358.4 396.6L347.4 414.5L321.9 412.1ZM383.1 398.8L408.1 401.0L399.1 419.2L373.1 416.8ZM433.3 403.2L458.8 405.5L452.1 424.1L425.5 421.6ZM484.5 407.7L510.6 410.0L506.2 429.1L479.0 426.6ZM536.9 412.3L563.5 414.7L561.5 434.1L533.7 431.6ZM590.3 417.0L617.5 419.4L618.0 439.3L589.6 436.7ZM644.9 421.8L672.7 424.3L675.9 444.7L646.8 442.0ZM700.8 426.7L729.1 429.2L735.0 450.1L705.3 447.4ZM757.8 431.8L786.8 434.3L795.6 455.7L765.2 452.9ZM816.2 436.9L845.8 439.5L857.6 461.4L826.4 458.5ZM247.1 405.2L271.7 407.5L256.4 426.4L230.7 423.9ZM296.7 409.8L321.9 412.1L308.7 431.4L282.4 428.9ZM347.4 414.5L373.1 416.8L362.2 436.5L335.3 434.0ZM399.1 419.2L425.5 421.6L416.9 441.8L389.4 439.2ZM452.1 424.1L479.0 426.6L472.9 447.2L444.7 444.5ZM506.2 429.1L533.7 431.6L530.1 452.7L501.3 449.9ZM561.5 434.1L589.6 436.7L588.7 458.3L559.3 455.5ZM618.0 439.3L646.8 442.0L648.8 464.1L618.6 461.2ZM675.9 444.7L705.3 447.4L710.2 470.0L679.3 467.1ZM735.0 450.1L765.2 452.9L773.2 476.1L741.5 473.0ZM795.6 455.7L826.4 458.5L837.8 482.3L805.3 479.2ZM256.4 426.4L282.4 428.9L266.8 449.8L239.6 447.0ZM308.7 431.4L335.3 434.0L322.1 455.4L294.3 452.5ZM362.2 436.5L389.4 439.2L378.7 461.1L350.2 458.2ZM416.9 441.8L444.7 444.5L436.6 466.9L407.5 464.0ZM472.9 447.2L501.3 449.9L496.0 472.9L466.1 469.9ZM530.1 452.7L559.3 455.5L556.8 479.1L526.2 476.0ZM588.7 458.3L618.6 461.2L619.2 485.4L587.8 482.2ZM648.8 464.1L679.3 467.1L683.2 491.8L651.0 488.6ZM710.2 470.0L741.5 473.0L748.7 498.4L715.7 495.1ZM773.2 476.1L805.3 479.2L816.0 505.2L782.2 501.8ZM266.8 449.8L294.3 452.5L278.3 475.9L249.5 472.8ZM322.1 455.4L350.2 458.2L337.0 482.1L307.5 478.9ZM378.7 461.1L407.5 464.0L397.1 488.5L366.8 485.3ZM436.6 466.9L466.1 469.9L458.7 495.0L427.7 491.7ZM496.0 472.9L526.2 476.0L521.9 501.7L490.1 498.4ZM556.8 479.1L587.8 482.2L586.8 508.6L554.2 505.2ZM619.2 485.4L651.0 488.6L653.4 515.7L619.9 512.2ZM683.2 491.8L715.7 495.1L721.8 523.0L687.4 519.3ZM748.7 498.4L782.2 501.8L792.1 530.5L756.7 526.7ZM816.0 505.2L850.3 508.7L864.3 538.1L828.0 534.3ZM221.1 469.8L249.5 472.8L230.5 498.3L200.7 494.9ZM278.3 475.9L307.5 478.9L291.3 505.1L260.7 501.7ZM337.0 482.1L366.8 485.3L353.7 512.1L322.3 508.6ZM397.1 488.5L427.7 491.7L417.7 519.3L385.5 515.7ZM458.7 495.0L490.1 498.4L483.6 526.7L450.4 523.0ZM521.9 501.7L554.2 505.2L551.2 534.3L517.1 530.4ZM586.8 508.6L619.9 512.2L620.7 542.1L585.7 538.1ZM653.4 515.7L687.4 519.3L692.2 550.1L656.2 546.0ZM721.8 523.0L756.7 526.7L765.7 558.3L728.7 554.2ZM792.1 530.5L828.0 534.3L841.4 566.8L803.3 562.5ZM230.5 498.3L260.7 501.7L241.0 530.4L209.2 526.6ZM291.3 505.1L322.3 508.6L305.9 538.1L273.2 534.2ZM353.7 512.1L385.5 515.7L372.6 546.0L339.0 542.1ZM417.7 519.3L450.4 523.0L441.2 554.2L406.6 550.1ZM483.6 526.7L517.1 530.4L511.8 562.6L476.2 558.4ZM551.2 534.3L585.7 538.1L584.4 571.2L547.8 566.9ZM620.7 542.1L656.2 546.0L659.3 580.1L621.6 575.6ZM692.2 550.1L728.7 554.2L736.4 589.3L697.5 584.7ZM765.7 558.3L803.3 562.5L815.8 598.7L775.8 593.9ZM241.0 530.4L273.2 534.2L253.0 566.9L219.0 562.6ZM305.9 538.1L339.0 542.1L322.5 575.7L287.5 571.3ZM372.6 546.0L406.6 550.1L394.1 584.7L358.1 580.2ZM441.2 554.2L476.2 558.4L468.0 594.1L430.8 589.4ZM511.8 562.6L547.8 566.9L544.1 603.7L505.7 598.8ZM584.4 571.2L621.6 575.6L622.6 613.6L583.0 608.6ZM659.3 580.1L697.5 584.7L703.6 623.8L662.8 618.7ZM736.4 589.3L775.8 593.9L787.2 634.4L745.1 629.1ZM815.8 598.7L856.5 603.5L873.7 645.3L830.1 639.8ZM253.0 566.9L287.5 571.3L266.7 608.8L230.2 603.8ZM322.5 575.7L358.1 580.2L341.6 618.9L303.9 613.8ZM394.1 584.7L430.8 589.4L419.0 629.3L380.0 624.0ZM468.0 594.1L505.7 598.8L498.8 640.1L458.6 634.6ZM544.1 603.7L583.0 608.6L581.4 651.2L539.8 645.6ZM622.6 613.6L662.8 618.7L666.7 662.7L623.7 656.9ZM703.6 623.8L745.1 629.1L755.1 674.6L710.5 668.6ZM787.2 634.4L830.1 639.8L846.5 686.9L800.4 680.7ZM266.7 608.8L303.9 613.8L282.6 657.2L243.1 651.5ZM341.6 618.9L380.0 624.0L363.8 668.9L322.9 663.0ZM419.0 629.3L458.6 634.6L447.8 681.1L405.4 675.0ZM498.8 640.1L539.8 645.6L534.8 693.7L490.9 687.3ZM581.4 651.2L623.7 656.9L625.0 706.7L579.5 700.1ZM666.7 662.7L710.5 668.6L718.5 720.2L671.3 713.4ZM755.1 674.6L800.4 680.7L815.5 734.3L766.6 727.2ZM282.6 657.2L322.9 663.0L301.2 713.9L258.2 707.2ZM363.8 668.9L405.4 675.0L389.8 727.7L345.1 720.7ZM447.8 681.1L490.9 687.3L481.8 742.1L435.4 734.8ZM534.8 693.7L579.5 700.1L577.3 757.0L529.1 749.5Z"/><path fill="#bfbfbf" d="M689.1 234.0L704.7 234.8L707.3 241.0L691.3 240.1ZM720.4 235.6L736.2 236.4L739.6 242.6L723.4 241.8ZM752.1 237.2L768.1 238.0L772.3 244.3L755.9 243.5ZM784.1 238.8L800.3 239.6L805.4 246.1L788.8 245.2ZM816.6 240.4L833.0 241.3L839.0 247.8L822.2 246.9ZM551.6 232.9L566.7 233.7L565.7 239.9L550.1 239.0ZM581.9 234.5L597.3 235.3L597.0 241.5L581.3 240.7ZM612.7 236.1L628.2 236.9L628.8 243.2L612.9 242.4ZM643.8 237.7L659.5 238.5L660.9 244.9L644.8 244.1ZM675.3 239.3L691.3 240.1L693.5 246.6L677.2 245.8ZM707.3 241.0L723.4 241.8L726.5 248.4L709.9 247.5ZM739.6 242.6L755.9 243.5L759.9 250.1L743.1 249.3ZM772.3 244.3L788.8 245.2L793.8 251.9L776.8 251.0ZM805.4 246.1L822.2 246.9L828.0 253.8L810.8 252.8ZM444.1 233.4L458.9 234.2L455.1 240.4L439.9 239.6ZM473.9 235.0L489.0 235.8L485.9 242.1L470.4 241.2ZM504.1 236.6L519.4 237.4L517.1 243.8L501.4 242.9ZM534.7 238.2L550.1 239.0L548.6 245.5L532.8 244.6ZM565.7 239.9L581.3 240.7L580.6 247.2L564.6 246.3ZM597.0 241.5L612.9 242.4L613.0 249.0L596.8 248.1ZM628.8 243.2L644.8 244.1L645.8 250.8L629.4 249.9ZM660.9 244.9L677.2 245.8L679.1 252.6L662.4 251.7ZM693.5 246.6L709.9 247.5L712.8 254.4L695.9 253.5ZM726.5 248.4L743.1 249.3L746.9 256.2L729.8 255.3ZM759.9 250.1L776.8 251.0L781.5 258.1L764.1 257.2ZM793.8 251.9L810.8 252.8L816.6 260.0L799.0 259.1ZM306.8 232.4L321.2 233.1L313.8 239.3L299.0 238.5ZM335.7 233.9L350.3 234.7L343.6 240.9L328.7 240.1ZM365.0 235.5L379.8 236.3L373.8 242.6L358.7 241.8ZM394.7 237.1L409.6 237.9L404.4 244.3L389.1 243.5ZM424.7 238.8L439.9 239.6L435.4 246.1L419.9 245.2ZM455.1 240.4L470.4 241.2L466.8 247.8L451.1 246.9ZM485.9 242.1L501.4 242.9L498.6 249.6L482.7 248.7ZM517.1 243.8L532.8 244.6L530.8 251.4L514.7 250.5ZM548.6 245.5L564.6 246.3L563.4 253.2L547.1 252.3ZM580.6 247.2L596.8 248.1L596.5 255.0L579.9 254.1ZM613.0 249.0L629.4 249.9L630.0 256.9L613.2 255.9ZM645.8 250.8L662.4 251.7L664.0 258.8L646.9 257.8ZM679.1 252.6L695.9 253.5L698.4 260.7L681.1 259.7ZM712.8 254.4L729.8 255.3L733.3 262.6L715.8 261.7ZM746.9 256.2L764.1 257.2L768.6 264.6L750.9 263.6ZM781.5 258.1L799.0 259.1L804.5 266.6L786.5 265.6ZM816.6 260.0L834.3 261.0L840.8 268.6L822.6 267.6ZM255.2 236.0L269.7 236.8L260.9 243.2L246.0 242.3ZM284.3 237.6L299.0 238.5L290.9 244.9L275.8 244.0ZM313.8 239.3L328.7 240.1L321.2 246.6L306.0 245.8ZM343.6 240.9L358.7 241.8L352.0 248.4L336.6 247.5ZM373.8 242.6L389.1 243.5L383.2 250.2L367.6 249.3ZM404.4 244.3L419.9 245.2L414.8 252.0L398.9 251.1ZM435.4 246.1L451.1 246.9L446.8 253.8L430.7 252.9ZM466.8 247.8L482.7 248.7L479.2 255.7L463.0 254.7ZM498.6 249.6L514.7 250.5L512.1 257.5L495.6 256.6ZM530.8 251.4L547.1 252.3L545.4 259.4L528.7 258.5ZM563.4 253.2L579.9 254.1L579.2 261.4L562.2 260.4ZM596.5 255.0L613.2 255.9L613.4 263.3L596.2 262.3ZM630.0 256.9L646.9 257.8L648.1 265.3L630.7 264.3ZM664.0 258.8L681.1 259.7L683.3 267.3L665.6 266.3ZM698.4 260.7L715.8 261.7L718.9 269.3L701.0 268.3ZM733.3 262.6L750.9 263.6L755.1 271.4L737.0 270.4ZM768.6 264.6L786.5 265.6L791.8 273.5L773.4 272.5ZM804.5 266.6L822.6 267.6L829.0 275.6L810.3 274.6ZM260.9 243.2L275.8 244.0L266.8 250.8L251.5 249.9ZM290.9 244.9L306.0 245.8L297.8 252.6L282.3 251.7ZM321.2 246.6L336.6 247.5L329.2 254.4L313.4 253.5ZM352.0 248.4L367.6 249.3L360.9 256.3L345.0 255.4ZM383.2 250.2L398.9 251.1L393.2 258.2L377.0 257.2ZM414.8 252.0L430.7 252.9L425.8 260.1L409.4 259.1ZM446.8 253.8L463.0 254.7L458.9 262.1L442.3 261.1ZM479.2 255.7L495.6 256.6L492.5 264.0L475.6 263.0ZM512.1 257.5L528.7 258.5L526.5 266.0L509.4 265.0ZM545.4 259.4L562.2 260.4L561.0 268.0L543.7 267.0ZM579.2 261.4L596.2 262.3L595.9 270.1L578.4 269.1ZM613.4 263.3L630.7 264.3L631.4 272.2L613.6 271.1ZM648.1 265.3L665.6 266.3L667.4 274.3L649.3 273.2ZM683.3 267.3L701.0 268.3L703.9 276.4L685.5 275.3ZM718.9 269.3L737.0 270.4L740.9 278.6L722.3 277.5ZM755.1 271.4L773.4 272.5L778.4 280.8L759.6 279.7ZM791.8 273.5L810.3 274.6L816.5 283.0L797.4 281.9ZM236.3 249.0L251.5 249.9L241.6 257.0L226.0 256.0ZM266.8 250.8L282.3 251.7L273.2 258.9L257.3 257.9ZM297.8 252.6L313.4 253.5L305.1 260.8L289.1 259.8ZM329.2 254.4L345.0 255.4L337.6 262.7L321.3 261.8ZM360.9 256.3L377.0 257.2L370.4 264.7L353.9 263.7ZM393.2 258.2L409.4 259.1L403.8 266.7L387.0 265.7ZM425.8 260.1L442.3 261.1L437.5 268.8L420.6 267.7ZM458.9 262.1L475.6 263.0L471.8 270.8L454.6 269.8ZM492.5 264.0L509.4 265.0L506.6 272.9L489.1 271.9ZM526.5 266.0L543.7 267.0L541.8 275.1L524.1 274.0ZM561.0 268.0L578.4 269.1L577.6 277.2L559.6 276.1ZM595.9 270.1L613.6 271.1L613.8 279.4L595.6 278.3ZM631.4 272.2L649.3 273.2L650.6 281.6L632.2 280.5ZM667.4 274.3L685.5 275.3L688.0 283.9L669.2 282.7ZM703.9 276.4L722.3 277.5L725.9 286.1L706.8 285.0ZM740.9 278.6L759.6 279.7L764.3 288.5L745.0 287.3ZM778.4 280.8L797.4 281.9L803.3 290.8L783.8 289.6ZM816.5 283.0L835.8 284.2L843.0 293.2L823.1 292.0ZM241.6 257.0L257.3 257.9L247.3 265.4L231.2 264.4ZM273.2 258.9L289.1 259.8L279.9 267.5L263.6 266.4ZM305.1 260.8L321.3 261.8L313.0 269.5L296.4 268.5ZM337.6 262.7L353.9 263.7L346.5 271.6L329.7 270.5ZM370.4 264.7L387.0 265.7L380.6 273.7L363.5 272.6ZM403.8 266.7L420.6 267.7L415.1 275.8L397.7 274.8ZM437.5 268.8L454.6 269.8L450.1 278.0L432.5 276.9ZM471.8 270.8L489.1 271.9L485.6 280.2L467.8 279.1ZM506.6 272.9L524.1 274.0L521.6 282.4L503.5 281.3ZM541.8 275.1L559.6 276.1L558.2 284.7L539.8 283.6ZM577.6 277.2L595.6 278.3L595.3 287.0L576.7 285.9ZM613.8 279.4L632.2 280.5L633.0 289.4L614.1 288.2ZM650.6 281.6L669.2 282.7L671.2 291.7L652.0 290.5ZM247.3 265.4L263.6 266.4L253.4 274.5L236.7 273.4ZM279.9 267.5L296.4 268.5L287.1 276.6L270.2 275.5ZM313.0 269.5L329.7 270.5L321.4 278.8L304.2 277.7ZM346.5 271.6L363.5 272.6L356.1 281.0L338.7 279.9ZM380.6 273.7L397.7 274.8L391.4 283.3L373.7 282.2ZM415.1 275.8L432.5 276.9L427.1 285.6L409.2 284.4ZM450.1 278.0L467.8 279.1L463.5 287.9L445.2 286.7ZM485.6 280.2L503.5 281.3L500.3 290.2L481.8 289.1ZM521.6 282.4L539.8 283.6L537.7 292.6L519.0 291.4ZM253.4 274.5L270.2 275.5L259.9 284.1L242.6 283.0ZM287.1 276.6L304.2 277.7L294.8 286.4L277.3 285.3ZM321.4 278.8L338.7 279.9L330.3 288.8L312.5 287.6ZM356.1 281.0L373.7 282.2L366.4 291.1L348.3 290.0Z"/><path fill="#c1c1c1" d="M780.6 198.5L794.1 199.1L798.2 203.6L784.4 203.0ZM807.6 199.7L821.2 200.3L826.0 204.8L812.0 204.2ZM689.9 198.9L703.2 199.4L705.3 203.9L691.8 203.3ZM716.6 200.0L730.0 200.6L732.7 205.1L719.0 204.5ZM743.5 201.2L757.1 201.8L760.4 206.4L746.5 205.8ZM770.7 202.4L784.4 203.0L788.4 207.6L774.4 207.0ZM798.2 203.6L812.0 204.2L816.7 208.9L802.5 208.2ZM572.7 198.0L585.6 198.6L585.2 203.0L571.9 202.4ZM598.6 199.2L611.7 199.8L611.9 204.3L598.5 203.6ZM624.9 200.3L638.1 200.9L638.8 205.5L625.3 204.9ZM651.4 201.5L664.8 202.1L666.1 206.7L652.4 206.1ZM678.2 202.7L691.8 203.3L693.7 208.0L679.9 207.3ZM705.3 203.9L719.0 204.5L721.5 209.2L707.6 208.6ZM732.7 205.1L746.5 205.8L749.7 210.5L735.6 209.9ZM760.4 206.4L774.4 207.0L778.2 211.8L763.9 211.2ZM788.4 207.6L802.5 208.2L807.0 213.1L792.5 212.5ZM816.7 208.9L830.9 209.5L836.1 214.4L821.5 213.8ZM455.8 197.2L468.4 197.7L465.4 202.2L452.5 201.6ZM481.1 198.3L493.9 198.9L491.4 203.4L478.4 202.8ZM506.7 199.5L519.6 200.1L517.7 204.6L504.5 204.0ZM532.6 200.7L545.6 201.2L544.3 205.8L531.0 205.2ZM558.7 201.8L571.9 202.4L571.1 207.1L557.7 206.4ZM585.2 203.0L598.5 203.6L598.3 208.3L584.7 207.7ZM611.9 204.3L625.3 204.9L625.7 209.6L612.0 209.0ZM638.8 205.5L652.4 206.1L653.5 210.9L639.6 210.2ZM666.1 206.7L679.9 207.3L681.5 212.2L667.5 211.5ZM693.7 208.0L707.6 208.6L709.9 213.5L695.7 212.8ZM721.5 209.2L735.6 209.9L738.6 214.8L724.2 214.2ZM749.7 210.5L763.9 211.2L767.6 216.2L753.0 215.5ZM778.2 211.8L792.5 212.5L796.9 217.5L782.2 216.8ZM807.0 213.1L821.5 213.8L826.6 218.9L811.7 218.2ZM364.1 197.5L376.5 198.0L371.5 202.5L358.8 201.9ZM389.0 198.6L401.6 199.2L397.1 203.7L384.2 203.1ZM414.2 199.8L426.9 200.4L422.9 204.9L410.0 204.3ZM439.7 201.0L452.5 201.6L449.1 206.2L436.0 205.5ZM465.4 202.2L478.4 202.8L475.5 207.4L462.3 206.8ZM491.4 203.4L504.5 204.0L502.2 208.7L488.8 208.1ZM517.7 204.6L531.0 205.2L529.3 210.0L515.7 209.3ZM544.3 205.8L557.7 206.4L556.6 211.3L542.9 210.6ZM571.1 207.1L584.7 207.7L584.2 212.6L570.3 211.9ZM598.3 208.3L612.0 209.0L612.1 213.9L598.1 213.2ZM625.7 209.6L639.6 210.2L640.3 215.2L626.2 214.5ZM653.5 210.9L667.5 211.5L668.9 216.6L654.6 215.9ZM681.5 212.2L695.7 212.8L697.8 217.9L683.3 217.3ZM709.9 213.5L724.2 214.2L727.0 219.3L712.3 218.6ZM738.6 214.8L753.0 215.5L756.5 220.7L741.7 220.0ZM767.6 216.2L782.2 216.8L786.4 222.1L771.4 221.4ZM796.9 217.5L811.7 218.2L816.6 223.6L801.5 222.8ZM247.4 196.6L259.5 197.2L251.9 201.6L239.6 201.0ZM271.7 197.8L284.0 198.4L276.8 202.8L264.3 202.2ZM296.3 198.9L308.6 199.5L302.0 204.0L289.4 203.4ZM321.1 200.1L333.6 200.7L327.5 205.3L314.7 204.7ZM346.1 201.3L358.8 201.9L353.2 206.5L340.3 205.9ZM371.5 202.5L384.2 203.1L379.2 207.8L366.2 207.1ZM397.1 203.7L410.0 204.3L405.5 209.0L392.3 208.4ZM422.9 204.9L436.0 205.5L432.1 210.3L418.8 209.7ZM449.1 206.2L462.3 206.8L459.0 211.6L445.5 211.0ZM475.5 207.4L488.8 208.1L486.1 212.9L472.5 212.3ZM502.2 208.7L515.7 209.3L513.6 214.3L499.8 213.6ZM529.3 210.0L542.9 210.6L541.4 215.6L527.5 214.9ZM556.6 211.3L570.3 211.9L569.5 217.0L555.4 216.3ZM584.2 212.6L598.1 213.2L597.9 218.3L583.7 217.7ZM612.1 213.9L626.2 214.5L626.7 219.7L612.2 219.0ZM640.3 215.2L654.6 215.9L655.7 221.1L641.2 220.4ZM668.9 216.6L683.3 217.3L685.1 222.6L670.4 221.8ZM697.8 217.9L712.3 218.6L714.9 224.0L700.0 223.3ZM727.0 219.3L741.7 220.0L745.0 225.5L729.9 224.7ZM756.5 220.7L771.4 221.4L775.4 226.9L760.2 226.2ZM786.4 222.1L801.5 222.8L806.3 228.4L790.8 227.7ZM816.6 223.6L831.9 224.3L837.4 229.9L821.8 229.2ZM251.9 201.6L264.3 202.2L256.6 206.9L244.0 206.2ZM276.8 202.8L289.4 203.4L282.2 208.1L269.4 207.5ZM302.0 204.0L314.7 204.7L308.1 209.4L295.1 208.8ZM327.5 205.3L340.3 205.9L334.2 210.7L321.1 210.1ZM353.2 206.5L366.2 207.1L360.6 212.0L347.4 211.4ZM379.2 207.8L392.3 208.4L387.4 213.3L374.0 212.7ZM405.5 209.0L418.8 209.7L414.4 214.7L400.8 214.0ZM432.1 210.3L445.5 211.0L441.7 216.0L428.0 215.3ZM459.0 211.6L472.5 212.3L469.4 217.4L455.5 216.7ZM486.1 212.9L499.8 213.6L497.3 218.8L483.3 218.1ZM513.6 214.3L527.5 214.9L525.6 220.2L511.4 219.5ZM541.4 215.6L555.4 216.3L554.2 221.6L539.8 220.9ZM569.5 217.0L583.7 217.7L583.1 223.0L568.6 222.3ZM597.9 218.3L612.2 219.0L612.4 224.4L597.7 223.7ZM626.7 219.7L641.2 220.4L642.0 225.9L627.1 225.2ZM655.7 221.1L670.4 221.8L672.0 227.4L656.9 226.6ZM685.1 222.6L700.0 223.3L702.3 228.9L687.1 228.1ZM714.9 224.0L729.9 224.7L733.0 230.4L717.6 229.6ZM745.0 225.5L760.2 226.2L764.0 231.9L748.4 231.2ZM775.4 226.9L790.8 227.7L795.4 233.5L779.7 232.7ZM806.3 228.4L821.8 229.2L827.3 235.1L811.3 234.3ZM256.6 206.9L269.4 207.5L261.6 212.4L248.6 211.7ZM282.2 208.1L295.1 208.8L287.9 213.7L274.7 213.1ZM308.1 209.4L321.1 210.1L314.4 215.1L301.1 214.4ZM334.2 210.7L347.4 211.4L341.3 216.4L327.8 215.7ZM360.6 212.0L374.0 212.7L368.5 217.8L354.8 217.1ZM387.4 213.3L400.8 214.0L395.9 219.2L382.2 218.5ZM414.4 214.7L428.0 215.3L423.7 220.6L409.8 219.9ZM441.7 216.0L455.5 216.7L451.9 222.0L437.8 221.3ZM469.4 217.4L483.3 218.1L480.3 223.4L466.0 222.7ZM497.3 218.8L511.4 219.5L509.1 224.9L494.7 224.2ZM525.6 220.2L539.8 220.9L538.2 226.4L523.6 225.6ZM554.2 221.6L568.6 222.3L567.7 227.9L552.9 227.1ZM583.1 223.0L597.7 223.7L597.5 229.4L582.5 228.6ZM612.4 224.4L627.1 225.2L627.7 230.9L612.5 230.1ZM642.0 225.9L656.9 226.6L658.2 232.4L642.9 231.7ZM672.0 227.4L687.1 228.1L689.1 234.0L673.6 233.2ZM702.3 228.9L717.6 229.6L720.4 235.6L704.7 234.8ZM733.0 230.4L748.4 231.2L752.1 237.2L736.2 236.4ZM764.0 231.9L779.7 232.7L784.1 238.8L768.1 238.0ZM795.4 233.5L811.3 234.3L816.6 240.4L800.3 239.6ZM235.6 211.1L248.6 211.7L240.1 216.8L226.9 216.1ZM261.6 212.4L274.7 213.1L266.8 218.2L253.4 217.5ZM287.9 213.7L301.1 214.4L293.8 219.6L280.3 218.9ZM314.4 215.1L327.8 215.7L321.1 221.0L307.4 220.3ZM341.3 216.4L354.8 217.1L348.8 222.4L334.9 221.7ZM368.5 217.8L382.2 218.5L376.7 223.9L362.7 223.2ZM395.9 219.2L409.8 219.9L405.0 225.3L390.8 224.6ZM423.7 220.6L437.8 221.3L433.6 226.8L419.3 226.1ZM451.9 222.0L466.0 222.7L462.6 228.3L448.1 227.6ZM480.3 223.4L494.7 224.2L491.9 229.8L477.2 229.1ZM509.1 224.9L523.6 225.6L521.5 231.4L506.7 230.6ZM538.2 226.4L552.9 227.1L551.6 232.9L536.5 232.1ZM567.7 227.9L582.5 228.6L581.9 234.5L566.7 233.7ZM597.5 229.4L612.5 230.1L612.7 236.1L597.3 235.3ZM627.7 230.9L642.9 231.7L643.8 237.7L628.2 236.9ZM658.2 232.4L673.6 233.2L675.3 239.3L659.5 238.5ZM240.1 216.8L253.4 217.5L244.9 222.9L231.3 222.2ZM266.8 218.2L280.3 218.9L272.3 224.3L258.6 223.6ZM293.8 219.6L307.4 220.3L300.1 225.8L286.2 225.1ZM321.1 221.0L334.9 221.7L328.2 227.3L314.1 226.5ZM348.8 222.4L362.7 223.2L356.7 228.8L342.4 228.0ZM376.7 223.9L390.8 224.6L385.4 230.3L371.0 229.6ZM405.0 225.3L419.3 226.1L414.6 231.9L400.0 231.1ZM433.6 226.8L448.1 227.6L444.1 233.4L429.3 232.6ZM462.6 228.3L477.2 229.1L473.9 235.0L458.9 234.2ZM491.9 229.8L506.7 230.6L504.1 236.6L489.0 235.8ZM521.5 231.4L536.5 232.1L534.7 238.2L519.4 237.4ZM244.9 222.9L258.6 223.6L249.9 229.3L235.9 228.5ZM272.3 224.3L286.2 225.1L278.2 230.8L264.0 230.0ZM300.1 225.8L314.1 226.5L306.8 232.4L292.4 231.6ZM328.2 227.3L342.4 228.0L335.7 233.9L321.2 233.1ZM356.7 228.8L371.0 229.6L365.0 235.5L350.3 234.7ZM385.4 230.3L400.0 231.1L394.7 237.1L379.8 236.3ZM414.6 231.9L429.3 232.6L424.7 238.8L409.6 237.9ZM249.9 229.3L264.0 230.0L255.2 236.0L240.8 235.2ZM278.2 230.8L292.4 231.6L284.3 237.6L269.7 236.8Z"/><path fill="#c3c3c3" d="M769.5 172.6L781.3 173.0L784.6 176.4L772.6 175.9ZM793.0 173.5L804.9 173.9L808.7 177.3L796.6 176.9ZM816.7 174.4L828.7 174.8L832.9 178.3L820.8 177.8ZM667.5 171.9L679.0 172.3L680.4 175.7L668.7 175.2ZM690.5 172.8L702.1 173.2L703.9 176.6L692.1 176.1ZM713.7 173.7L725.4 174.1L727.7 177.5L715.8 177.1ZM737.1 174.6L748.9 175.0L751.7 178.5L739.6 178.0ZM760.8 175.5L772.6 175.9L775.9 179.4L763.7 179.0ZM784.6 176.4L796.6 176.9L800.3 180.4L788.1 179.9ZM808.7 177.3L820.8 177.8L825.0 181.4L812.6 180.9ZM565.8 171.2L577.1 171.6L576.5 175.0L565.1 174.5ZM588.3 172.1L599.7 172.5L599.5 175.9L588.0 175.4ZM611.0 173.0L622.5 173.4L622.8 176.8L611.1 176.4ZM633.9 173.9L645.5 174.3L646.2 177.8L634.5 177.3ZM657.1 174.8L668.7 175.2L669.9 178.7L658.0 178.2ZM680.4 175.7L692.1 176.1L693.8 179.7L681.8 179.2ZM703.9 176.6L715.8 177.1L717.9 180.6L705.8 180.1ZM727.7 177.5L739.6 178.0L742.3 181.6L730.1 181.1ZM751.7 178.5L763.7 179.0L766.8 182.6L754.5 182.1ZM775.9 179.4L788.1 179.9L791.7 183.6L779.2 183.1ZM800.3 180.4L812.6 180.9L816.7 184.6L804.2 184.1ZM486.5 171.4L497.5 171.8L495.5 175.2L484.2 174.7ZM508.7 172.3L519.9 172.7L518.2 176.1L506.8 175.6ZM531.1 173.2L542.4 173.6L541.1 177.0L529.6 176.6ZM553.7 174.1L565.1 174.5L564.3 178.0L552.7 177.5ZM576.5 175.0L588.0 175.4L587.6 178.9L575.9 178.4ZM599.5 175.9L611.1 176.4L611.2 179.9L599.4 179.4ZM622.8 176.8L634.5 177.3L635.0 180.8L623.1 180.4ZM646.2 177.8L658.0 178.2L659.1 181.8L647.0 181.3ZM669.9 178.7L681.8 179.2L683.3 182.8L671.2 182.3ZM693.8 179.7L705.8 180.1L707.8 183.8L695.5 183.3ZM717.9 180.6L730.1 181.1L732.5 184.8L720.1 184.3ZM742.3 181.6L754.5 182.1L757.5 185.8L745.0 185.3ZM766.8 182.6L779.2 183.1L782.7 186.8L770.1 186.3ZM791.7 183.6L804.2 184.1L808.2 187.9L795.4 187.3ZM816.7 184.6L829.3 185.1L833.9 188.9L821.0 188.4ZM384.9 170.7L395.7 171.1L391.7 174.5L380.7 174.0ZM406.6 171.6L417.6 172.0L413.9 175.4L402.8 174.9ZM428.5 172.5L439.6 172.9L436.4 176.3L425.1 175.8ZM450.6 173.4L461.8 173.8L459.0 177.2L447.6 176.8ZM473.0 174.3L484.2 174.7L481.8 178.2L470.4 177.7ZM495.5 175.2L506.8 175.6L504.9 179.1L493.3 178.7ZM518.2 176.1L529.6 176.6L528.1 180.1L516.5 179.6ZM541.1 177.0L552.7 177.5L551.6 181.1L539.8 180.6ZM564.3 178.0L575.9 178.4L575.3 182.0L563.4 181.6ZM587.6 178.9L599.4 179.4L599.3 183.0L587.3 182.5ZM611.2 179.9L623.1 180.4L623.4 184.0L611.3 183.5ZM635.0 180.8L647.0 181.3L647.8 185.0L635.6 184.5ZM659.1 181.8L671.2 182.3L672.5 186.1L660.1 185.5ZM683.3 182.8L695.5 183.3L697.3 187.1L684.9 186.6ZM707.8 183.8L720.1 184.3L722.5 188.1L709.9 187.6ZM732.5 184.8L745.0 185.3L747.8 189.2L735.1 188.6ZM757.5 185.8L770.1 186.3L773.4 190.2L760.6 189.7ZM782.7 186.8L795.4 187.3L799.3 191.3L786.3 190.8ZM808.2 187.9L821.0 188.4L825.4 192.4L812.3 191.8ZM304.9 170.9L315.6 171.3L310.0 174.7L299.2 174.2ZM326.3 171.8L337.1 172.2L331.9 175.6L321.0 175.1ZM347.9 172.7L358.8 173.1L354.0 176.5L343.0 176.1ZM369.7 173.6L380.7 174.0L376.3 177.5L365.2 177.0ZM391.7 174.5L402.8 174.9L398.9 178.4L387.6 177.9ZM413.9 175.4L425.1 175.8L421.6 179.4L410.2 178.9ZM436.4 176.3L447.6 176.8L444.5 180.3L433.0 179.8ZM459.0 177.2L470.4 177.7L467.7 181.3L456.1 180.8ZM481.8 178.2L493.3 178.7L491.1 182.3L479.4 181.8ZM504.9 179.1L516.5 179.6L514.7 183.3L502.8 182.8ZM528.1 180.1L539.8 180.6L538.5 184.3L526.6 183.8ZM551.6 181.1L563.4 181.6L562.6 185.3L550.5 184.8ZM575.3 182.0L587.3 182.5L586.9 186.3L574.7 185.8ZM599.3 183.0L611.3 183.5L611.4 187.3L599.1 186.8ZM623.4 184.0L635.6 184.5L636.2 188.4L623.8 187.9ZM647.8 185.0L660.1 185.5L661.2 189.4L648.7 188.9ZM672.5 186.1L684.9 186.6L686.5 190.5L673.8 190.0ZM697.3 187.1L709.9 187.6L712.0 191.6L699.2 191.0ZM722.5 188.1L735.1 188.6L737.8 192.7L724.9 192.1ZM747.8 189.2L760.6 189.7L763.8 193.8L750.8 193.2ZM773.4 190.2L786.3 190.8L790.1 194.9L776.9 194.3ZM799.3 191.3L812.3 191.8L816.7 196.0L803.4 195.4ZM245.5 172.0L256.2 172.4L249.4 175.8L238.6 175.3ZM266.8 172.8L277.6 173.3L271.2 176.7L260.3 176.3ZM288.3 173.8L299.2 174.2L293.2 177.7L282.2 177.2ZM310.0 174.7L321.0 175.1L315.4 178.6L304.3 178.1ZM331.9 175.6L343.0 176.1L337.8 179.6L326.6 179.1ZM354.0 176.5L365.2 177.0L360.4 180.5L349.1 180.1ZM376.3 177.5L387.6 177.9L383.2 181.5L371.8 181.0ZM398.9 178.4L410.2 178.9L406.3 182.5L394.7 182.0ZM421.6 179.4L433.0 179.8L429.6 183.5L417.9 183.0ZM444.5 180.3L456.1 180.8L453.1 184.5L441.3 184.0ZM467.7 181.3L479.4 181.8L476.8 185.5L464.9 185.0ZM491.1 182.3L502.8 182.8L500.8 186.6L488.7 186.0ZM514.7 183.3L526.6 183.8L524.9 187.6L512.8 187.1ZM538.5 184.3L550.5 184.8L549.4 188.6L537.1 188.1ZM562.6 185.3L574.7 185.8L574.0 189.7L561.7 189.2ZM586.9 186.3L599.1 186.8L599.0 190.8L586.5 190.2ZM611.4 187.3L623.8 187.9L624.1 191.8L611.5 191.3ZM636.2 188.4L648.7 188.9L649.6 192.9L636.8 192.4ZM661.2 189.4L673.8 190.0L675.2 194.0L662.4 193.5ZM686.5 190.5L699.2 191.0L701.2 195.1L688.2 194.6ZM712.0 191.6L724.9 192.1L727.4 196.3L714.2 195.7ZM737.8 192.7L750.8 193.2L753.8 197.4L740.6 196.8ZM763.8 193.8L776.9 194.3L780.6 198.5L767.2 198.0ZM790.1 194.9L803.4 195.4L807.6 199.7L794.1 199.1ZM816.7 196.0L830.1 196.5L834.9 200.9L821.2 200.3ZM249.4 175.8L260.3 176.3L253.5 179.8L242.4 179.3ZM271.2 176.7L282.2 177.2L275.8 180.8L264.6 180.3ZM293.2 177.7L304.3 178.1L298.3 181.8L287.0 181.3ZM315.4 178.6L326.6 179.1L321.0 182.8L309.6 182.3ZM337.8 179.6L349.1 180.1L343.9 183.8L332.4 183.2ZM360.4 180.5L371.8 181.0L367.1 184.8L355.5 184.3ZM383.2 181.5L394.7 182.0L390.5 185.8L378.7 185.3ZM406.3 182.5L417.9 183.0L414.1 186.8L402.2 186.3ZM429.6 183.5L441.3 184.0L437.9 187.9L426.0 187.3ZM453.1 184.5L464.9 185.0L462.0 188.9L449.9 188.4ZM476.8 185.5L488.7 186.0L486.3 190.0L474.1 189.4ZM500.8 186.6L512.8 187.1L510.9 191.0L498.6 190.5ZM524.9 187.6L537.1 188.1L535.7 192.1L523.2 191.6ZM549.4 188.6L561.7 189.2L560.7 193.2L548.2 192.7ZM574.0 189.7L586.5 190.2L586.1 194.3L573.4 193.8ZM599.0 190.8L611.5 191.3L611.6 195.4L598.8 194.9ZM624.1 191.8L636.8 192.4L637.5 196.6L624.5 196.0ZM649.6 192.9L662.4 193.5L663.6 197.7L650.5 197.1ZM675.2 194.0L688.2 194.6L689.9 198.9L676.7 198.3ZM701.2 195.1L714.2 195.7L716.6 200.0L703.2 199.4ZM727.4 196.3L740.6 196.8L743.5 201.2L730.0 200.6ZM753.8 197.4L767.2 198.0L770.7 202.4L757.1 201.8ZM253.5 179.8L264.6 180.3L257.7 184.0L246.4 183.5ZM275.8 180.8L287.0 181.3L280.6 185.0L269.1 184.5ZM298.3 181.8L309.6 182.3L303.6 186.0L292.0 185.5ZM321.0 182.8L332.4 183.2L326.8 187.1L315.2 186.6ZM343.9 183.8L355.5 184.3L350.3 188.1L338.6 187.6ZM367.1 184.8L378.7 185.3L374.1 189.2L362.2 188.6ZM390.5 185.8L402.2 186.3L398.0 190.2L386.0 189.7ZM414.1 186.8L426.0 187.3L422.2 191.3L410.1 190.8ZM437.9 187.9L449.9 188.4L446.7 192.4L434.4 191.9ZM462.0 188.9L474.1 189.4L471.3 193.5L459.0 193.0ZM486.3 190.0L498.6 190.5L496.3 194.6L483.8 194.1ZM510.9 191.0L523.2 191.6L521.5 195.7L508.9 195.2ZM535.7 192.1L548.2 192.7L546.9 196.9L534.2 196.3ZM560.7 193.2L573.4 193.8L572.7 198.0L559.8 197.4ZM586.1 194.3L598.8 194.9L598.6 199.2L585.6 198.6ZM611.6 195.4L624.5 196.0L624.9 200.3L611.7 199.8ZM637.5 196.6L650.5 197.1L651.4 201.5L638.1 200.9ZM663.6 197.7L676.7 198.3L678.2 202.7L664.8 202.1ZM235.2 183.0L246.4 183.5L239.1 187.3L227.6 186.8ZM257.7 184.0L269.1 184.5L262.2 188.4L250.6 187.9ZM280.6 185.0L292.0 185.5L285.5 189.4L273.8 188.9ZM303.6 186.0L315.2 186.6L309.1 190.5L297.3 190.0ZM326.8 187.1L338.6 187.6L333.0 191.6L321.0 191.0ZM350.3 188.1L362.2 188.6L357.0 192.7L345.0 192.1ZM374.1 189.2L386.0 189.7L381.4 193.8L369.2 193.2ZM398.0 190.2L410.1 190.8L405.9 194.9L393.6 194.3ZM422.2 191.3L434.4 191.9L430.7 196.0L418.3 195.5ZM446.7 192.4L459.0 193.0L455.8 197.2L443.2 196.6ZM471.3 193.5L483.8 194.1L481.1 198.3L468.4 197.7ZM496.3 194.6L508.9 195.2L506.7 199.5L493.9 198.9ZM521.5 195.7L534.2 196.3L532.6 200.7L519.6 200.1ZM546.9 196.9L559.8 197.4L558.7 201.8L545.6 201.2ZM239.1 187.3L250.6 187.9L243.1 191.9L231.4 191.3ZM262.2 188.4L273.8 188.9L266.8 193.0L255.0 192.4ZM285.5 189.4L297.3 190.0L290.8 194.1L278.8 193.5ZM309.1 190.5L321.0 191.0L315.0 195.2L302.8 194.6ZM333.0 191.6L345.0 192.1L339.4 196.3L327.1 195.8ZM357.0 192.7L369.2 193.2L364.1 197.5L351.7 196.9ZM381.4 193.8L393.6 194.3L389.0 198.6L376.5 198.0ZM405.9 194.9L418.3 195.5L414.2 199.8L401.6 199.2ZM430.7 196.0L443.2 196.6L439.7 201.0L426.9 200.4ZM243.1 191.9L255.0 192.4L247.4 196.6L235.4 196.1ZM266.8 193.0L278.8 193.5L271.7 197.8L259.5 197.2ZM290.8 194.1L302.8 194.6L296.3 198.9L284.0 198.4ZM315.0 195.2L327.1 195.8L321.1 200.1L308.6 199.5ZM339.4 196.3L351.7 196.9L346.1 201.3L333.6 200.7Z"/><path fill="#c5c5c5" d="M740.4 151.8L750.7 152.2L753.1 154.8L742.7 154.4ZM761.0 152.5L771.4 152.9L774.2 155.5L763.6 155.2ZM781.8 153.2L792.2 153.6L795.4 156.3L784.8 155.9ZM802.7 153.9L813.3 154.3L816.8 157.0L806.1 156.6ZM670.6 151.9L680.8 152.3L682.0 154.9L671.7 154.6ZM691.0 152.6L701.2 153.0L702.8 155.7L692.4 155.3ZM711.5 153.4L721.9 153.7L723.8 156.4L713.3 156.0ZM732.2 154.1L742.7 154.4L745.0 157.1L734.4 156.8ZM753.1 154.8L763.6 155.2L766.3 157.9L755.6 157.5ZM774.2 155.5L784.8 155.9L787.8 158.6L777.0 158.3ZM795.4 156.3L806.1 156.6L809.5 159.4L798.6 159.0ZM816.8 157.0L827.5 157.4L831.4 160.2L820.4 159.8ZM580.5 151.4L590.4 151.7L590.2 154.3L580.0 154.0ZM600.4 152.1L610.5 152.4L610.6 155.0L600.3 154.7ZM620.6 152.8L630.7 153.1L631.1 155.8L620.8 155.4ZM640.9 153.5L651.1 153.8L651.9 156.5L641.5 156.1ZM661.4 154.2L671.7 154.6L672.8 157.3L662.3 156.9ZM682.0 154.9L692.4 155.3L693.9 158.0L683.3 157.6ZM702.8 155.7L713.3 156.0L715.2 158.8L704.5 158.4ZM723.8 156.4L734.4 156.8L736.6 159.5L725.9 159.2ZM745.0 157.1L755.6 157.5L758.2 160.3L747.4 159.9ZM766.3 157.9L777.0 158.3L780.0 161.1L769.1 160.7ZM787.8 158.6L798.6 159.0L802.0 161.9L791.0 161.5ZM809.5 159.4L820.4 159.8L824.2 162.7L813.1 162.3ZM490.5 150.8L500.3 151.1L498.5 153.7L488.6 153.4ZM510.1 151.5L520.0 151.8L518.6 154.4L508.5 154.1ZM529.9 152.2L539.9 152.5L538.7 155.2L528.6 154.8ZM549.8 152.9L559.9 153.2L559.1 155.9L548.9 155.5ZM569.9 153.6L580.0 154.0L579.6 156.7L569.3 156.3ZM590.2 154.3L600.3 154.7L600.2 157.4L589.9 157.0ZM610.6 155.0L620.8 155.4L621.1 158.2L610.6 157.8ZM631.1 155.8L641.5 156.1L642.1 158.9L631.6 158.5ZM651.9 156.5L662.3 156.9L663.3 159.7L652.7 159.3ZM672.8 157.3L683.3 157.6L684.7 160.5L674.0 160.1ZM693.9 158.0L704.5 158.4L706.2 161.2L695.4 160.8ZM715.2 158.8L725.9 159.2L727.9 162.0L717.1 161.6ZM736.6 159.5L747.4 159.9L749.9 162.8L738.9 162.4ZM758.2 160.3L769.1 160.7L772.0 163.6L760.9 163.2ZM780.0 161.1L791.0 161.5L794.3 164.4L783.1 164.0ZM802.0 161.9L813.1 162.3L816.8 165.2L805.5 164.8ZM420.1 150.9L429.8 151.2L426.8 153.8L417.0 153.5ZM439.5 151.6L449.2 151.9L446.6 154.6L436.7 154.2ZM459.0 152.3L468.8 152.6L466.5 155.3L456.5 154.9ZM478.7 153.0L488.6 153.4L486.6 156.0L476.5 155.7ZM498.5 153.7L508.5 154.1L506.9 156.8L496.7 156.4ZM518.6 154.4L528.6 154.8L527.3 157.5L517.0 157.2ZM538.7 155.2L548.9 155.5L547.9 158.3L537.6 157.9ZM559.1 155.9L569.3 156.3L568.6 159.1L558.2 158.7ZM579.6 156.7L589.9 157.0L589.6 159.8L579.1 159.4ZM600.2 157.4L610.6 157.8L610.7 160.6L600.1 160.2ZM621.1 158.2L631.6 158.5L632.0 161.4L621.3 161.0ZM642.1 158.9L652.7 159.3L653.5 162.2L642.7 161.8ZM663.3 159.7L674.0 160.1L675.2 163.0L664.3 162.6ZM684.7 160.5L695.4 160.8L697.0 163.8L686.1 163.4ZM706.2 161.2L717.1 161.6L719.0 164.6L708.0 164.2ZM727.9 162.0L738.9 162.4L741.3 165.4L730.1 165.0ZM749.9 162.8L760.9 163.2L763.7 166.2L752.4 165.8ZM772.0 163.6L783.1 164.0L786.3 167.1L775.0 166.6ZM794.3 164.4L805.5 164.8L809.1 167.9L797.7 167.5ZM816.8 165.2L828.1 165.6L832.1 168.7L820.6 168.3ZM330.3 150.3L339.8 150.6L335.3 153.2L325.7 152.9ZM349.3 151.0L358.8 151.3L354.7 154.0L345.0 153.6ZM368.4 151.7L378.1 152.1L374.2 154.7L364.4 154.3ZM387.7 152.4L397.4 152.8L393.9 155.4L384.0 155.1ZM407.2 153.1L417.0 153.5L413.7 156.2L403.8 155.8ZM426.8 153.8L436.7 154.2L433.8 156.9L423.7 156.5ZM446.6 154.6L456.5 154.9L453.9 157.7L443.8 157.3ZM466.5 155.3L476.5 155.7L474.3 158.4L464.1 158.1ZM486.6 156.0L496.7 156.4L494.8 159.2L484.5 158.8ZM506.9 156.8L517.0 157.2L515.5 160.0L505.1 159.6ZM527.3 157.5L537.6 157.9L536.4 160.8L525.9 160.4ZM547.9 158.3L558.2 158.7L557.4 161.5L546.9 161.1ZM568.6 159.1L579.1 159.4L578.6 162.3L568.0 161.9ZM589.6 159.8L600.1 160.2L600.0 163.1L589.3 162.7ZM610.7 160.6L621.3 161.0L621.6 163.9L610.8 163.5ZM632.0 161.4L642.7 161.8L643.4 164.7L632.5 164.3ZM653.5 162.2L664.3 162.6L665.3 165.6L654.3 165.2ZM675.2 163.0L686.1 163.4L687.5 166.4L676.4 166.0ZM697.0 163.8L708.0 164.2L709.8 167.2L698.6 166.8ZM719.0 164.6L730.1 165.0L732.4 168.1L721.1 167.6ZM741.3 165.4L752.4 165.8L755.1 168.9L743.7 168.5ZM763.7 166.2L775.0 166.6L778.1 169.8L766.6 169.3ZM786.3 167.1L797.7 167.5L801.2 170.6L789.6 170.2ZM809.1 167.9L820.6 168.3L824.5 171.5L812.8 171.1ZM240.8 149.7L250.0 150.1L244.1 152.6L234.6 152.3ZM259.4 150.4L268.7 150.8L263.0 153.4L253.5 153.0ZM278.1 151.1L287.6 151.5L282.2 154.1L272.6 153.7ZM297.0 151.8L306.5 152.2L301.4 154.8L291.8 154.5ZM316.1 152.5L325.7 152.9L320.9 155.6L311.1 155.2ZM335.3 153.2L345.0 153.6L340.5 156.3L330.7 155.9ZM354.7 154.0L364.4 154.3L360.3 157.1L350.4 156.7ZM374.2 154.7L384.0 155.1L380.2 157.8L370.2 157.4ZM393.9 155.4L403.8 155.8L400.3 158.6L390.2 158.2ZM413.7 156.2L423.7 156.5L420.5 159.3L410.4 159.0ZM433.8 156.9L443.8 157.3L441.0 160.1L430.7 159.7ZM453.9 157.7L464.1 158.1L461.6 160.9L451.3 160.5ZM474.3 158.4L484.5 158.8L482.4 161.7L472.0 161.3ZM494.8 159.2L505.1 159.6L503.3 162.5L492.8 162.1ZM515.5 160.0L525.9 160.4L524.5 163.3L513.9 162.9ZM536.4 160.8L546.9 161.1L545.8 164.1L535.1 163.7ZM557.4 161.5L568.0 161.9L567.3 164.9L556.5 164.5ZM578.6 162.3L589.3 162.7L589.0 165.7L578.1 165.3ZM600.0 163.1L610.8 163.5L610.9 166.6L599.9 166.1ZM621.6 163.9L632.5 164.3L632.9 167.4L621.9 167.0ZM643.4 164.7L654.3 165.2L655.2 168.2L644.1 167.8ZM665.3 165.6L676.4 166.0L677.7 169.1L666.4 168.7ZM687.5 166.4L698.6 166.8L700.3 170.0L689.0 169.5ZM709.8 167.2L721.1 167.6L723.2 170.8L711.7 170.4ZM732.4 168.1L743.7 168.5L746.3 171.7L734.7 171.3ZM755.1 168.9L766.6 169.3L769.5 172.6L757.9 172.1ZM778.1 169.8L789.6 170.2L793.0 173.5L781.3 173.0ZM801.2 170.6L812.8 171.1L816.7 174.4L804.9 173.9ZM244.1 152.6L253.5 153.0L247.5 155.7L237.9 155.3ZM263.0 153.4L272.6 153.7L266.8 156.4L257.1 156.1ZM282.2 154.1L291.8 154.5L286.4 157.2L276.6 156.8ZM301.4 154.8L311.1 155.2L306.0 157.9L296.2 157.6ZM320.9 155.6L330.7 155.9L325.9 158.7L315.9 158.3ZM340.5 156.3L350.4 156.7L345.9 159.5L335.9 159.1ZM360.3 157.1L370.2 157.4L366.1 160.3L355.9 159.9ZM380.2 157.8L390.2 158.2L386.4 161.0L376.2 160.7ZM400.3 158.6L410.4 159.0L406.9 161.8L396.6 161.4ZM420.5 159.3L430.7 159.7L427.6 162.6L417.2 162.2ZM441.0 160.1L451.3 160.5L448.5 163.4L438.0 163.0ZM461.6 160.9L472.0 161.3L469.5 164.3L459.0 163.8ZM482.4 161.7L492.8 162.1L490.8 165.1L480.1 164.7ZM503.3 162.5L513.9 162.9L512.2 165.9L501.5 165.5ZM524.5 163.3L535.1 163.7L533.8 166.7L523.0 166.3ZM545.8 164.1L556.5 164.5L555.6 167.6L544.7 167.2ZM567.3 164.9L578.1 165.3L577.6 168.4L566.6 168.0ZM589.0 165.7L599.9 166.1L599.8 169.3L588.7 168.8ZM610.9 166.6L621.9 167.0L622.2 170.1L611.0 169.7ZM632.9 167.4L644.1 167.8L644.7 171.0L633.4 170.6ZM655.2 168.2L666.4 168.7L667.5 171.9L656.1 171.4ZM677.7 169.1L689.0 169.5L690.5 172.8L679.0 172.3ZM700.3 170.0L711.7 170.4L713.7 173.7L702.1 173.2ZM723.2 170.8L734.7 171.3L737.1 174.6L725.4 174.1ZM746.3 171.7L757.9 172.1L760.8 175.5L748.9 175.0ZM247.5 155.7L257.1 156.1L251.1 158.9L241.2 158.5ZM266.8 156.4L276.6 156.8L270.8 159.6L260.9 159.2ZM286.4 157.2L296.2 157.6L290.7 160.4L280.7 160.0ZM306.0 157.9L315.9 158.3L310.8 161.2L300.7 160.8ZM325.9 158.7L335.9 159.1L331.1 162.0L320.9 161.6ZM345.9 159.5L355.9 159.9L351.5 162.8L341.3 162.4ZM366.1 160.3L376.2 160.7L372.1 163.6L361.8 163.2ZM386.4 161.0L396.6 161.4L392.9 164.4L382.5 164.0ZM406.9 161.8L417.2 162.2L413.8 165.2L403.3 164.8ZM427.6 162.6L438.0 163.0L435.0 166.1L424.4 165.6ZM448.5 163.4L459.0 163.8L456.3 166.9L445.6 166.5ZM469.5 164.3L480.1 164.7L477.8 167.7L467.1 167.3ZM490.8 165.1L501.5 165.5L499.5 168.6L488.7 168.2ZM512.2 165.9L523.0 166.3L521.4 169.5L510.5 169.0ZM533.8 166.7L544.7 167.2L543.5 170.3L532.5 169.9ZM555.6 167.6L566.6 168.0L565.8 171.2L554.7 170.8ZM577.6 168.4L588.7 168.8L588.3 172.1L577.1 171.6ZM599.8 169.3L611.0 169.7L611.0 173.0L599.7 172.5ZM622.2 170.1L633.4 170.6L633.9 173.9L622.5 173.4ZM644.7 171.0L656.1 171.4L657.1 174.8L645.5 174.3ZM251.1 158.9L260.9 159.2L254.8 162.1L244.8 161.7ZM270.8 159.6L280.7 160.0L274.9 162.9L264.8 162.5ZM290.7 160.4L300.7 160.8L295.3 163.8L285.1 163.4ZM310.8 161.2L320.9 161.6L315.8 164.6L305.5 164.2ZM331.1 162.0L341.3 162.4L336.5 165.4L326.1 165.0ZM351.5 162.8L361.8 163.2L357.3 166.2L346.9 165.8ZM372.1 163.6L382.5 164.0L378.4 167.1L367.8 166.7ZM392.9 164.4L403.3 164.8L399.6 167.9L389.0 167.5ZM413.8 165.2L424.4 165.6L421.0 168.8L410.3 168.3ZM435.0 166.1L445.6 166.5L442.7 169.6L431.8 169.2ZM456.3 166.9L467.1 167.3L464.5 170.5L453.5 170.1ZM477.8 167.7L488.7 168.2L486.5 171.4L475.4 170.9ZM499.5 168.6L510.5 169.0L508.7 172.3L497.5 171.8ZM521.4 169.5L532.5 169.9L531.1 173.2L519.9 172.7ZM543.5 170.3L554.7 170.8L553.7 174.1L542.4 173.6ZM254.8 162.1L264.8 162.5L258.6 165.6L248.4 165.2ZM274.9 162.9L285.1 163.4L279.2 166.4L268.9 166.0ZM295.3 163.8L305.5 164.2L300.0 167.2L289.6 166.8ZM315.8 164.6L326.1 165.0L320.9 168.1L310.4 167.7ZM336.5 165.4L346.9 165.8L342.1 169.0L331.5 168.5ZM357.3 166.2L367.8 166.7L363.4 169.8L352.7 169.4ZM378.4 167.1L389.0 167.5L384.9 170.7L374.1 170.3ZM399.6 167.9L410.3 168.3L406.6 171.6L395.7 171.1ZM421.0 168.8L431.8 169.2L428.5 172.5L417.6 172.0ZM442.7 169.6L453.5 170.1L450.6 173.4L439.6 172.9ZM464.5 170.5L475.4 170.9L473.0 174.3L461.8 173.8ZM238.2 164.7L248.4 165.2L241.8 168.3L231.5 167.8ZM258.6 165.6L268.9 166.0L262.7 169.1L252.2 168.7ZM279.2 166.4L289.6 166.8L283.7 170.0L273.1 169.6ZM300.0 167.2L310.4 167.7L304.9 170.9L294.3 170.4ZM320.9 168.1L331.5 168.5L326.3 171.8L315.6 171.3ZM342.1 169.0L352.7 169.4L347.9 172.7L337.1 172.2ZM363.4 169.8L374.1 170.3L369.7 173.6L358.8 173.1ZM241.8 168.3L252.2 168.7L245.5 172.0L235.0 171.5ZM262.7 169.1L273.1 169.6L266.8 172.8L256.2 172.4ZM283.7 170.0L294.3 170.4L288.3 173.8L277.6 173.3Z"/><path fill="#c7c7c7" d="M816.8 136.5L826.2 136.8L829.5 138.9L820.0 138.6ZM735.8 136.0L745.0 136.3L747.1 138.4L737.7 138.1ZM754.2 136.6L763.5 136.9L765.9 139.0L756.5 138.7ZM772.8 137.1L782.2 137.4L784.9 139.6L775.4 139.3ZM791.6 137.7L801.0 138.0L804.0 140.2L794.4 139.9ZM810.5 138.3L820.0 138.6L823.2 140.8L813.6 140.5ZM654.9 135.5L664.0 135.8L664.8 137.9L655.6 137.6ZM673.1 136.1L682.2 136.3L683.3 138.5L674.1 138.2ZM691.4 136.6L700.6 136.9L702.0 139.1L692.6 138.8ZM709.8 137.2L719.1 137.5L720.8 139.7L711.4 139.4ZM728.4 137.8L737.7 138.1L739.7 140.3L730.2 140.0ZM747.1 138.4L756.5 138.7L758.8 140.9L749.2 140.6ZM765.9 139.0L775.4 139.3L778.0 141.5L768.3 141.2ZM784.9 139.6L794.4 139.9L797.3 142.1L787.6 141.8ZM804.0 140.2L813.6 140.5L816.8 142.7L807.0 142.4ZM592.1 135.6L601.1 135.8L601.0 137.9L591.9 137.7ZM610.1 136.1L619.1 136.4L619.3 138.5L610.1 138.2ZM628.2 136.7L637.3 137.0L637.8 139.1L628.5 138.8ZM646.4 137.3L655.6 137.6L656.4 139.7L647.0 139.4ZM664.8 137.9L674.1 138.2L675.1 140.3L665.7 140.0ZM683.3 138.5L692.6 138.8L694.0 141.0L684.5 140.6ZM702.0 139.1L711.4 139.4L713.0 141.6L703.5 141.3ZM720.8 139.7L730.2 140.0L732.1 142.2L722.5 141.9ZM739.7 140.3L749.2 140.6L751.4 142.8L741.8 142.5ZM758.8 140.9L768.3 141.2L770.9 143.4L761.1 143.1ZM778.0 141.5L787.6 141.8L790.5 144.1L780.6 143.8ZM797.3 142.1L807.0 142.4L810.2 144.7L800.3 144.4ZM816.8 142.7L826.6 143.0L830.1 145.4L820.1 145.0ZM511.3 135.0L520.1 135.3L518.8 137.4L509.9 137.1ZM529.0 135.6L537.9 135.9L536.8 138.0L527.8 137.7ZM546.8 136.2L555.7 136.5L555.0 138.6L545.9 138.3ZM564.7 136.8L573.7 137.1L573.2 139.2L564.1 138.9ZM582.8 137.4L591.9 137.7L591.6 139.8L582.4 139.5ZM601.0 137.9L610.1 138.2L610.2 140.4L600.9 140.1ZM619.3 138.5L628.5 138.8L628.9 141.0L619.5 140.7ZM637.8 139.1L647.0 139.4L647.7 141.6L638.3 141.3ZM656.4 139.7L665.7 140.0L666.6 142.3L657.1 142.0ZM675.1 140.3L684.5 140.6L685.7 142.9L676.2 142.6ZM694.0 141.0L703.5 141.3L705.0 143.5L695.3 143.2ZM713.0 141.6L722.5 141.9L724.4 144.2L714.6 143.8ZM732.1 142.2L741.8 142.5L743.9 144.8L734.1 144.5ZM751.4 142.8L761.1 143.1L763.6 145.4L753.7 145.1ZM770.9 143.4L780.6 143.8L783.4 146.1L773.5 145.8ZM790.5 144.1L800.3 144.4L803.4 146.8L793.4 146.4ZM810.2 144.7L820.1 145.0L823.5 147.4L813.4 147.1ZM430.7 134.5L439.4 134.8L436.9 136.9L428.1 136.6ZM448.1 135.1L456.8 135.4L454.6 137.5L445.7 137.2ZM465.6 135.7L474.4 136.0L472.4 138.1L463.5 137.8ZM483.2 136.3L492.1 136.6L490.3 138.7L481.3 138.4ZM501.0 136.8L509.9 137.1L508.4 139.3L499.4 139.0ZM518.8 137.4L527.8 137.7L526.6 139.9L517.5 139.6ZM536.8 138.0L545.9 138.3L545.0 140.5L535.8 140.2ZM555.0 138.6L564.1 138.9L563.4 141.1L554.2 140.8ZM573.2 139.2L582.4 139.5L582.1 141.7L572.7 141.4ZM591.6 139.8L600.9 140.1L600.8 142.4L591.4 142.0ZM610.2 140.4L619.5 140.7L619.7 143.0L610.2 142.7ZM628.9 141.0L638.3 141.3L638.7 143.6L629.2 143.3ZM647.7 141.6L657.1 142.0L657.9 144.3L648.3 143.9ZM666.6 142.3L676.2 142.6L677.3 144.9L667.6 144.6ZM685.7 142.9L695.3 143.2L696.7 145.5L687.0 145.2ZM705.0 143.5L714.6 143.8L716.4 146.2L706.5 145.9ZM724.4 144.2L734.1 144.5L736.1 146.8L726.2 146.5ZM743.9 144.8L753.7 145.1L756.1 147.5L746.1 147.2ZM763.6 145.4L773.5 145.8L776.2 148.2L766.1 147.8ZM783.4 146.1L793.4 146.4L796.4 148.9L786.3 148.5ZM803.4 146.8L813.4 147.1L816.8 149.5L806.6 149.2ZM367.4 134.6L376.0 134.9L372.5 137.0L363.8 136.7ZM384.6 135.2L393.2 135.5L390.0 137.6L381.3 137.3ZM401.9 135.8L410.6 136.0L407.6 138.2L398.8 137.9ZM419.3 136.3L428.1 136.6L425.4 138.8L416.5 138.5ZM436.9 136.9L445.7 137.2L443.3 139.4L434.3 139.1ZM454.6 137.5L463.5 137.8L461.3 140.0L452.3 139.7ZM472.4 138.1L481.3 138.4L479.4 140.6L470.3 140.3ZM490.3 138.7L499.4 139.0L497.7 141.2L488.5 140.9ZM508.4 139.3L517.5 139.6L516.1 141.8L506.9 141.5ZM526.6 139.9L535.8 140.2L534.7 142.4L525.4 142.1ZM545.0 140.5L554.2 140.8L553.4 143.1L544.0 142.8ZM563.4 141.1L572.7 141.4L572.2 143.7L562.8 143.4ZM582.1 141.7L591.4 142.0L591.2 144.3L581.7 144.0ZM600.8 142.4L610.2 142.7L610.3 145.0L600.7 144.7ZM619.7 143.0L629.2 143.3L629.6 145.6L619.9 145.3ZM638.7 143.6L648.3 143.9L649.0 146.3L639.3 146.0ZM657.9 144.3L667.6 144.6L668.6 146.9L658.8 146.6ZM677.3 144.9L687.0 145.2L688.3 147.6L678.4 147.3ZM696.7 145.5L706.5 145.9L708.1 148.3L698.2 147.9ZM716.4 146.2L726.2 146.5L728.2 149.0L718.1 148.6ZM736.1 146.8L746.1 147.2L748.4 149.6L738.2 149.3ZM756.1 147.5L766.1 147.8L768.7 150.3L758.5 150.0ZM776.2 148.2L786.3 148.5L789.2 151.0L778.9 150.7ZM796.4 148.9L806.6 149.2L809.9 151.7L799.5 151.4ZM816.8 149.5L827.0 149.9L830.7 152.4L820.3 152.1ZM286.9 134.1L295.4 134.4L290.7 136.5L282.1 136.2ZM303.8 134.7L312.3 135.0L307.9 137.1L299.3 136.8ZM320.8 135.2L329.3 135.5L325.2 137.6L316.5 137.3ZM337.9 135.8L346.5 136.1L342.6 138.2L333.8 137.9ZM355.2 136.4L363.8 136.7L360.1 138.8L351.3 138.5ZM372.5 137.0L381.3 137.3L377.8 139.4L369.0 139.1ZM390.0 137.6L398.8 137.9L395.6 140.0L386.7 139.7ZM407.6 138.2L416.5 138.5L413.6 140.7L404.6 140.4ZM425.4 138.8L434.3 139.1L431.6 141.3L422.6 141.0ZM443.3 139.4L452.3 139.7L449.9 141.9L440.7 141.6ZM461.3 140.0L470.3 140.3L468.2 142.5L459.0 142.2ZM479.4 140.6L488.5 140.9L486.7 143.2L477.4 142.8ZM497.7 141.2L506.9 141.5L505.3 143.8L496.0 143.5ZM516.1 141.8L525.4 142.1L524.1 144.4L514.7 144.1ZM534.7 142.4L544.0 142.8L543.0 145.1L533.5 144.8ZM553.4 143.1L562.8 143.4L562.1 145.7L552.5 145.4ZM572.2 143.7L581.7 144.0L581.3 146.4L571.7 146.1ZM591.2 144.3L600.7 144.7L600.6 147.0L590.9 146.7ZM610.3 145.0L619.9 145.3L620.1 147.7L610.4 147.4ZM629.6 145.6L639.3 146.0L639.8 148.4L629.9 148.0ZM649.0 146.3L658.8 146.6L659.6 149.1L649.7 148.7ZM668.6 146.9L678.4 147.3L679.6 149.7L669.6 149.4ZM688.3 147.6L698.2 147.9L699.7 150.4L689.6 150.1ZM708.1 148.3L718.1 148.6L720.0 151.1L709.8 150.8ZM728.2 149.0L738.2 149.3L740.4 151.8L730.2 151.5ZM748.4 149.6L758.5 150.0L761.0 152.5L750.7 152.2ZM768.7 150.3L778.9 150.7L781.8 153.2L771.4 152.9ZM789.2 151.0L799.5 151.4L802.7 153.9L792.2 153.6ZM809.9 151.7L820.3 152.1L823.8 154.7L813.3 154.3ZM239.9 134.7L248.3 135.0L242.9 137.1L234.4 136.8ZM256.7 135.3L265.2 135.6L260.0 137.7L251.4 137.4ZM273.6 135.9L282.1 136.2L277.2 138.3L268.6 138.0ZM290.7 136.5L299.3 136.8L294.6 138.9L285.9 138.6ZM307.9 137.1L316.5 137.3L312.0 139.5L303.3 139.2ZM325.2 137.6L333.8 137.9L329.6 140.1L320.8 139.8ZM342.6 138.2L351.3 138.5L347.4 140.7L338.5 140.4ZM360.1 138.8L369.0 139.1L365.3 141.4L356.3 141.1ZM377.8 139.4L386.7 139.7L383.3 142.0L374.3 141.7ZM395.6 140.0L404.6 140.4L401.4 142.6L392.3 142.3ZM413.6 140.7L422.6 141.0L419.7 143.2L410.5 142.9ZM431.6 141.3L440.7 141.6L438.1 143.9L428.9 143.6ZM449.9 141.9L459.0 142.2L456.7 144.5L447.4 144.2ZM468.2 142.5L477.4 142.8L475.4 145.2L466.0 144.9ZM486.7 143.2L496.0 143.5L494.2 145.8L484.8 145.5ZM505.3 143.8L514.7 144.1L513.2 146.5L503.7 146.2ZM524.1 144.4L533.5 144.8L532.4 147.1L522.8 146.8ZM543.0 145.1L552.5 145.4L551.7 147.8L542.0 147.5ZM562.1 145.7L571.7 146.1L571.1 148.5L561.4 148.2ZM581.3 146.4L590.9 146.7L590.7 149.2L580.9 148.8ZM600.6 147.0L610.4 147.4L610.4 149.9L600.5 149.5ZM620.1 147.7L629.9 148.0L630.3 150.5L620.4 150.2ZM639.8 148.4L649.7 148.7L650.4 151.2L640.3 150.9ZM659.6 149.1L669.6 149.4L670.6 151.9L660.5 151.6ZM679.6 149.7L689.6 150.1L691.0 152.6L680.8 152.3ZM699.7 150.4L709.8 150.8L711.5 153.4L701.2 153.0ZM720.0 151.1L730.2 151.5L732.2 154.1L721.9 153.7ZM242.9 137.1L251.4 137.4L245.9 139.6L237.3 139.3ZM260.0 137.7L268.6 138.0L263.4 140.2L254.6 139.9ZM277.2 138.3L285.9 138.6L280.9 140.8L272.1 140.5ZM294.6 138.9L303.3 139.2L298.6 141.4L289.7 141.1ZM312.0 139.5L320.8 139.8L316.4 142.1L307.4 141.8ZM329.6 140.1L338.5 140.4L334.3 142.7L325.3 142.4ZM347.4 140.7L356.3 141.1L352.4 143.3L343.3 143.0ZM365.3 141.4L374.3 141.7L370.6 144.0L361.5 143.7ZM383.3 142.0L392.3 142.3L388.9 144.6L379.7 144.3ZM401.4 142.6L410.5 142.9L407.4 145.3L398.2 144.9ZM419.7 143.2L428.9 143.6L426.1 145.9L416.7 145.6ZM438.1 143.9L447.4 144.2L444.8 146.6L435.4 146.3ZM456.7 144.5L466.0 144.9L463.8 147.3L454.3 146.9ZM475.4 145.2L484.8 145.5L482.8 147.9L473.3 147.6ZM494.2 145.8L503.7 146.2L502.0 148.6L492.4 148.3ZM513.2 146.5L522.8 146.8L521.4 149.3L511.7 148.9ZM532.4 147.1L542.0 147.5L540.9 150.0L531.2 149.6ZM551.7 147.8L561.4 148.2L560.6 150.7L550.8 150.3ZM571.1 148.5L580.9 148.8L580.5 151.4L570.5 151.0ZM590.7 149.2L600.5 149.5L600.4 152.1L590.4 151.7ZM610.4 149.9L620.4 150.2L620.6 152.8L610.5 152.4ZM630.3 150.5L640.3 150.9L640.9 153.5L630.7 153.1ZM650.4 151.2L660.5 151.6L661.4 154.2L651.1 153.8ZM245.9 139.6L254.6 139.9L249.1 142.2L240.3 141.8ZM263.4 140.2L272.1 140.5L266.8 142.8L258.0 142.5ZM280.9 140.8L289.7 141.1L284.7 143.4L275.8 143.1ZM298.6 141.4L307.4 141.8L302.7 144.1L293.7 143.7ZM316.4 142.1L325.3 142.4L320.8 144.7L311.8 144.4ZM334.3 142.7L343.3 143.0L339.1 145.4L330.0 145.0ZM352.4 143.3L361.5 143.7L357.5 146.0L348.3 145.7ZM370.6 144.0L379.7 144.3L376.1 146.7L366.8 146.4ZM388.9 144.6L398.2 144.9L394.8 147.4L385.4 147.0ZM407.4 145.3L416.7 145.6L413.6 148.0L404.2 147.7ZM426.1 145.9L435.4 146.3L432.6 148.7L423.1 148.4ZM444.8 146.6L454.3 146.9L451.8 149.4L442.2 149.0ZM463.8 147.3L473.3 147.6L471.1 150.1L461.4 149.7ZM482.8 147.9L492.4 148.3L490.5 150.8L480.8 150.4ZM502.0 148.6L511.7 148.9L510.1 151.5L500.3 151.1ZM521.4 149.3L531.2 149.6L529.9 152.2L520.0 151.8ZM540.9 150.0L550.8 150.3L549.8 152.9L539.9 152.5ZM560.6 150.7L570.5 151.0L569.9 153.6L559.9 153.2ZM249.1 142.2L258.0 142.5L252.4 144.8L243.4 144.5ZM266.8 142.8L275.8 143.1L270.5 145.5L261.4 145.1ZM284.7 143.4L293.7 143.7L288.7 146.1L279.6 145.8ZM302.7 144.1L311.8 144.4L307.0 146.8L297.8 146.5ZM320.8 144.7L330.0 145.0L325.5 147.5L316.2 147.1ZM339.1 145.4L348.3 145.7L344.1 148.1L334.8 147.8ZM357.5 146.0L366.8 146.4L362.9 148.8L353.5 148.5ZM376.1 146.7L385.4 147.0L381.8 149.5L372.3 149.2ZM394.8 147.4L404.2 147.7L400.9 150.2L391.3 149.8ZM413.6 148.0L423.1 148.4L420.1 150.9L410.5 150.5ZM432.6 148.7L442.2 149.0L439.5 151.6L429.8 151.2ZM451.8 149.4L461.4 149.7L459.0 152.3L449.2 151.9ZM471.1 150.1L480.8 150.4L478.7 153.0L468.8 152.6ZM252.4 144.8L261.4 145.1L255.8 147.6L246.7 147.2ZM270.5 145.5L279.6 145.8L274.2 148.2L265.0 147.9ZM288.7 146.1L297.8 146.5L292.8 148.9L283.5 148.6ZM307.0 146.8L316.2 147.1L311.5 149.6L302.1 149.3ZM325.5 147.5L334.8 147.8L330.3 150.3L320.9 149.9ZM344.1 148.1L353.5 148.5L349.3 151.0L339.8 150.6ZM362.9 148.8L372.3 149.2L368.4 151.7L358.8 151.3ZM381.8 149.5L391.3 149.8L387.7 152.4L378.1 152.1ZM400.9 150.2L410.5 150.5L407.2 153.1L397.4 152.8ZM237.6 146.9L246.7 147.2L240.8 149.7L231.5 149.4ZM255.8 147.6L265.0 147.9L259.4 150.4L250.0 150.1ZM274.2 148.2L283.5 148.6L278.1 151.1L268.7 150.8ZM292.8 148.9L302.1 149.3L297.0 151.8L287.6 151.5ZM311.5 149.6L320.9 149.9L316.1 152.5L306.5 152.2Z"/><path fill="#cacaca" d="M788.6 123.1L797.0 123.3L799.6 125.0L791.1 124.8ZM805.5 123.5L814.0 123.8L816.8 125.5L808.2 125.3ZM715.3 122.6L723.6 122.8L725.2 124.6L716.8 124.3ZM731.9 123.1L740.3 123.3L742.1 125.1L733.7 124.8ZM748.7 123.6L757.1 123.8L759.2 125.6L750.6 125.3ZM765.6 124.0L774.0 124.3L776.3 126.1L767.8 125.8ZM782.5 124.5L791.1 124.8L793.6 126.6L785.0 126.3ZM799.6 125.0L808.2 125.3L811.0 127.1L802.3 126.8ZM816.8 125.5L825.5 125.8L828.5 127.6L819.8 127.3ZM658.6 122.6L666.8 122.9L667.6 124.6L659.3 124.4ZM675.1 123.1L683.3 123.4L684.4 125.1L676.0 124.9ZM691.7 123.6L700.0 123.8L701.3 125.6L692.8 125.3ZM708.4 124.1L716.8 124.3L718.3 126.1L709.8 125.8ZM725.2 124.6L733.7 124.8L735.4 126.6L726.8 126.3ZM742.1 125.1L750.6 125.3L752.6 127.1L744.0 126.8ZM759.2 125.6L767.8 125.8L770.0 127.6L761.3 127.4ZM776.3 126.1L785.0 126.3L787.5 128.1L778.7 127.9ZM793.6 126.6L802.3 126.8L805.0 128.6L796.2 128.4ZM811.0 127.1L819.8 127.3L822.7 129.2L813.9 128.9ZM585.3 122.2L593.4 122.4L593.3 124.2L585.0 123.9ZM601.6 122.7L609.7 122.9L609.8 124.6L601.5 124.4ZM617.9 123.2L626.1 123.4L626.4 125.1L618.1 124.9ZM634.4 123.6L642.6 123.9L643.1 125.6L634.8 125.4ZM650.9 124.1L659.3 124.4L660.0 126.1L651.6 125.9ZM667.6 124.6L676.0 124.9L677.0 126.6L668.5 126.4ZM684.4 125.1L692.8 125.3L694.0 127.1L685.5 126.9ZM701.3 125.6L709.8 125.8L711.2 127.7L702.6 127.4ZM718.3 126.1L726.8 126.3L728.5 128.2L719.9 127.9ZM735.4 126.6L744.0 126.8L745.9 128.7L737.2 128.4ZM752.6 127.1L761.3 127.4L763.5 129.2L754.7 128.9ZM770.0 127.6L778.7 127.9L781.1 129.7L772.3 129.5ZM787.5 128.1L796.2 128.4L798.9 130.3L790.0 130.0ZM805.0 128.6L813.9 128.9L816.8 130.8L807.9 130.5ZM512.3 121.8L520.2 122.0L519.1 123.7L511.0 123.5ZM528.2 122.2L536.3 122.5L535.3 124.2L527.2 123.9ZM544.3 122.7L552.4 122.9L551.7 124.7L543.5 124.4ZM560.5 123.2L568.7 123.4L568.2 125.2L559.9 124.9ZM576.8 123.7L585.0 123.9L584.7 125.7L576.4 125.4ZM593.3 124.2L601.5 124.4L601.4 126.2L593.1 125.9ZM609.8 124.6L618.1 124.9L618.2 126.7L609.8 126.4ZM626.4 125.1L634.8 125.4L635.2 127.2L626.7 126.9ZM643.1 125.6L651.6 125.9L652.2 127.7L643.7 127.4ZM660.0 126.1L668.5 126.4L669.3 128.2L660.7 128.0ZM677.0 126.6L685.5 126.9L686.6 128.7L677.9 128.5ZM694.0 127.1L702.6 127.4L704.0 129.2L695.3 129.0ZM711.2 127.7L719.9 127.9L721.5 129.8L712.7 129.5ZM728.5 128.2L737.2 128.4L739.1 130.3L730.3 130.0ZM745.9 128.7L754.7 128.9L756.8 130.8L747.9 130.6ZM763.5 129.2L772.3 129.5L774.7 131.4L765.7 131.1ZM781.1 129.7L790.0 130.0L792.7 131.9L783.6 131.6ZM798.9 130.3L807.9 130.5L810.8 132.5L801.7 132.2ZM816.8 130.8L825.8 131.0L829.0 133.0L819.9 132.7ZM455.1 121.8L463.0 122.0L461.0 123.7L453.0 123.5ZM470.9 122.3L478.9 122.5L477.1 124.2L469.1 124.0ZM486.9 122.7L494.9 123.0L493.3 124.7L485.2 124.5ZM502.9 123.2L511.0 123.5L509.7 125.2L501.5 125.0ZM519.1 123.7L527.2 123.9L526.1 125.7L517.9 125.5ZM535.3 124.2L543.5 124.4L542.6 126.2L534.3 126.0ZM551.7 124.7L559.9 124.9L559.3 126.7L550.9 126.5ZM568.2 125.2L576.4 125.4L576.0 127.2L567.6 127.0ZM584.7 125.7L593.1 125.9L592.9 127.7L584.4 127.5ZM601.4 126.2L609.8 126.4L609.9 128.3L601.4 128.0ZM618.2 126.7L626.7 126.9L627.0 128.8L618.4 128.5ZM635.2 127.2L643.7 127.4L644.2 129.3L635.6 129.0ZM652.2 127.7L660.7 128.0L661.5 129.8L652.8 129.6ZM669.3 128.2L677.9 128.5L679.0 130.4L670.2 130.1ZM686.6 128.7L695.3 129.0L696.5 130.9L687.7 130.6ZM704.0 129.2L712.7 129.5L714.2 131.4L705.4 131.2ZM721.5 129.8L730.3 130.0L732.0 132.0L723.1 131.7ZM739.1 130.3L747.9 130.6L750.0 132.5L741.0 132.2ZM756.8 130.8L765.7 131.1L768.0 133.1L759.0 132.8ZM774.7 131.4L783.6 131.6L786.2 133.6L777.1 133.3ZM792.7 131.9L801.7 132.2L804.5 134.2L795.4 133.9ZM810.8 132.5L819.9 132.7L823.0 134.7L813.7 134.4ZM382.1 121.3L389.9 121.6L386.9 123.3L379.0 123.0ZM397.7 121.8L405.5 122.1L402.8 123.8L394.8 123.5ZM413.4 122.3L421.2 122.5L418.7 124.3L410.7 124.0ZM429.2 122.8L437.1 123.0L434.8 124.8L426.7 124.5ZM445.0 123.3L453.0 123.5L450.9 125.3L442.8 125.0ZM461.0 123.7L469.1 124.0L467.2 125.8L459.0 125.5ZM477.1 124.2L485.2 124.5L483.5 126.3L475.3 126.0ZM493.3 124.7L501.5 125.0L500.0 126.8L491.8 126.5ZM509.7 125.2L517.9 125.5L516.6 127.3L508.3 127.0ZM526.1 125.7L534.3 126.0L533.3 127.8L525.0 127.5ZM542.6 126.2L550.9 126.5L550.1 128.3L541.7 128.0ZM559.3 126.7L567.6 127.0L567.1 128.8L558.6 128.6ZM576.0 127.2L584.4 127.5L584.1 129.3L575.6 129.1ZM592.9 127.7L601.4 128.0L601.3 129.9L592.7 129.6ZM609.9 128.3L618.4 128.5L618.6 130.4L609.9 130.1ZM627.0 128.8L635.6 129.0L636.0 130.9L627.3 130.7ZM644.2 129.3L652.8 129.6L653.5 131.5L644.7 131.2ZM661.5 129.8L670.2 130.1L671.1 132.0L662.3 131.7ZM679.0 130.4L687.7 130.6L688.9 132.6L680.0 132.3ZM696.5 130.9L705.4 131.2L706.8 133.1L697.8 132.8ZM714.2 131.4L723.1 131.7L724.8 133.7L715.8 133.4ZM732.0 132.0L741.0 132.2L743.0 134.2L733.9 133.9ZM750.0 132.5L759.0 132.8L761.2 134.8L752.1 134.5ZM768.0 133.1L777.1 133.3L779.6 135.4L770.4 135.1ZM786.2 133.6L795.4 133.9L798.2 135.9L788.9 135.6ZM804.5 134.2L813.7 134.4L816.8 136.5L807.5 136.2ZM324.6 121.4L332.3 121.6L328.6 123.3L320.8 123.1ZM340.0 121.8L347.8 122.1L344.2 123.8L336.4 123.6ZM355.6 122.3L363.4 122.6L360.0 124.3L352.1 124.1ZM371.2 122.8L379.0 123.0L375.9 124.8L368.0 124.5ZM386.9 123.3L394.8 123.5L391.9 125.3L383.9 125.0ZM402.8 123.8L410.7 124.0L408.0 125.8L399.9 125.5ZM418.7 124.3L426.7 124.5L424.2 126.3L416.1 126.0ZM434.8 124.8L442.8 125.0L440.5 126.8L432.4 126.6ZM450.9 125.3L459.0 125.5L457.0 127.3L448.7 127.1ZM467.2 125.8L475.3 126.0L473.5 127.8L465.2 127.6ZM483.5 126.3L491.8 126.5L490.2 128.4L481.8 128.1ZM500.0 126.8L508.3 127.0L506.9 128.9L498.5 128.6ZM516.6 127.3L525.0 127.5L523.8 129.4L515.4 129.1ZM533.3 127.8L541.7 128.0L540.8 129.9L532.3 129.7ZM550.1 128.3L558.6 128.6L557.9 130.5L549.3 130.2ZM567.1 128.8L575.6 129.1L575.1 131.0L566.5 130.7ZM584.1 129.3L592.7 129.6L592.5 131.5L583.8 131.3ZM601.3 129.9L609.9 130.1L610.0 132.1L601.2 131.8ZM618.6 130.4L627.3 130.7L627.6 132.6L618.7 132.4ZM636.0 130.9L644.7 131.2L645.3 133.2L636.4 132.9ZM653.5 131.5L662.3 131.7L663.1 133.7L654.2 133.5ZM671.1 132.0L680.0 132.3L681.1 134.3L672.1 134.0ZM688.9 132.6L697.8 132.8L699.2 134.9L690.1 134.6ZM706.8 133.1L715.8 133.4L717.4 135.4L708.3 135.1ZM724.8 133.7L733.9 133.9L735.8 136.0L726.6 135.7ZM743.0 134.2L752.1 134.5L754.2 136.6L745.0 136.3ZM761.2 134.8L770.4 135.1L772.8 137.1L763.5 136.9ZM779.6 135.4L788.9 135.6L791.6 137.7L782.2 137.4ZM798.2 135.9L807.5 136.2L810.5 138.3L801.0 138.0ZM251.7 120.9L259.3 121.2L254.5 122.9L246.9 122.6ZM266.9 121.4L274.5 121.6L269.9 123.4L262.2 123.1ZM282.1 121.9L289.8 122.1L285.5 123.8L277.7 123.6ZM297.5 122.4L305.2 122.6L301.1 124.3L293.3 124.1ZM313.0 122.8L320.8 123.1L316.8 124.8L308.9 124.6ZM328.6 123.3L336.4 123.6L332.7 125.3L324.7 125.1ZM344.2 123.8L352.1 124.1L348.6 125.8L340.6 125.6ZM360.0 124.3L368.0 124.5L364.6 126.3L356.6 126.1ZM375.9 124.8L383.9 125.0L380.8 126.9L372.7 126.6ZM391.9 125.3L399.9 125.5L397.1 127.4L388.9 127.1ZM408.0 125.8L416.1 126.0L413.4 127.9L405.2 127.6ZM424.2 126.3L432.4 126.6L429.9 128.4L421.7 128.1ZM440.5 126.8L448.7 127.1L446.5 128.9L438.2 128.7ZM457.0 127.3L465.2 127.6L463.2 129.4L454.8 129.2ZM473.5 127.8L481.8 128.1L480.0 130.0L471.6 129.7ZM490.2 128.4L498.5 128.6L497.0 130.5L488.5 130.2ZM506.9 128.9L515.4 129.1L514.0 131.0L505.5 130.8ZM523.8 129.4L532.3 129.7L531.2 131.6L522.6 131.3ZM540.8 129.9L549.3 130.2L548.5 132.1L539.9 131.9ZM557.9 130.5L566.5 130.7L565.9 132.7L557.2 132.4ZM575.1 131.0L583.8 131.3L583.5 133.2L574.7 133.0ZM592.5 131.5L601.2 131.8L601.1 133.8L592.3 133.5ZM610.0 132.1L618.7 132.4L618.9 134.4L610.0 134.1ZM627.6 132.6L636.4 132.9L636.8 134.9L627.9 134.6ZM645.3 133.2L654.2 133.5L654.9 135.5L645.8 135.2ZM663.1 133.7L672.1 134.0L673.1 136.1L664.0 135.8ZM681.1 134.3L690.1 134.6L691.4 136.6L682.2 136.3ZM699.2 134.9L708.3 135.1L709.8 137.2L700.6 136.9ZM717.4 135.4L726.6 135.7L728.4 137.8L719.1 137.5ZM239.2 122.4L246.9 122.6L241.9 124.4L234.2 124.1ZM254.5 122.9L262.2 123.1L257.5 124.9L249.7 124.6ZM269.9 123.4L277.7 123.6L273.1 125.4L265.3 125.1ZM285.5 123.8L293.3 124.1L288.9 125.9L281.0 125.6ZM301.1 124.3L308.9 124.6L304.8 126.4L296.8 126.1ZM316.8 124.8L324.7 125.1L320.8 126.9L312.8 126.6ZM332.7 125.3L340.6 125.6L336.9 127.4L328.8 127.1ZM348.6 125.8L356.6 126.1L353.1 127.9L345.0 127.7ZM364.6 126.3L372.7 126.6L369.4 128.4L361.2 128.2ZM380.8 126.9L388.9 127.1L385.8 129.0L377.6 128.7ZM397.1 127.4L405.2 127.6L402.4 129.5L394.1 129.2ZM413.4 127.9L421.7 128.1L419.0 130.0L410.7 129.8ZM429.9 128.4L438.2 128.7L435.8 130.6L427.4 130.3ZM446.5 128.9L454.8 129.2L452.7 131.1L444.2 130.8ZM463.2 129.4L471.6 129.7L469.7 131.6L461.2 131.4ZM480.0 130.0L488.5 130.2L486.8 132.2L478.2 131.9ZM497.0 130.5L505.5 130.8L504.0 132.7L495.4 132.5ZM514.0 131.0L522.6 131.3L521.4 133.3L512.7 133.0ZM531.2 131.6L539.9 131.9L538.9 133.9L530.1 133.6ZM548.5 132.1L557.2 132.4L556.5 134.4L547.7 134.1ZM565.9 132.7L574.7 133.0L574.2 135.0L565.3 134.7ZM583.5 133.2L592.3 133.5L592.1 135.6L583.1 135.3ZM601.1 133.8L610.0 134.1L610.1 136.1L601.1 135.8ZM618.9 134.4L627.9 134.6L628.2 136.7L619.1 136.4ZM636.8 134.9L645.8 135.2L646.4 137.3L637.3 137.0ZM241.9 124.4L249.7 124.6L244.7 126.4L236.8 126.2ZM257.5 124.9L265.3 125.1L260.5 126.9L252.6 126.7ZM273.1 125.4L281.0 125.6L276.4 127.5L268.4 127.2ZM288.9 125.9L296.8 126.1L292.5 128.0L284.4 127.7ZM304.8 126.4L312.8 126.6L308.6 128.5L300.5 128.2ZM320.8 126.9L328.8 127.1L324.9 129.0L316.7 128.8ZM336.9 127.4L345.0 127.7L341.2 129.5L333.0 129.3ZM353.1 127.9L361.2 128.2L357.7 130.1L349.4 129.8ZM369.4 128.4L377.6 128.7L374.3 130.6L366.0 130.3ZM385.8 129.0L394.1 129.2L391.0 131.2L382.6 130.9ZM402.4 129.5L410.7 129.8L407.8 131.7L399.4 131.4ZM419.0 130.0L427.4 130.3L424.8 132.2L416.3 132.0ZM435.8 130.6L444.2 130.8L441.8 132.8L433.3 132.5ZM452.7 131.1L461.2 131.4L459.0 133.4L450.4 133.1ZM469.7 131.6L478.2 131.9L476.3 133.9L467.7 133.6ZM486.8 132.2L495.4 132.5L493.8 134.5L485.0 134.2ZM504.0 132.7L512.7 133.0L511.3 135.0L502.5 134.8ZM521.4 133.3L530.1 133.6L529.0 135.6L520.1 135.3ZM538.9 133.9L547.7 134.1L546.8 136.2L537.9 135.9ZM556.5 134.4L565.3 134.7L564.7 136.8L555.7 136.5ZM574.2 135.0L583.1 135.3L582.8 137.4L573.7 137.1ZM244.7 126.4L252.6 126.7L247.5 128.5L239.5 128.3ZM260.5 126.9L268.4 127.2L263.6 129.1L255.6 128.8ZM276.4 127.5L284.4 127.7L279.8 129.6L271.7 129.3ZM292.5 128.0L300.5 128.2L296.1 130.1L288.0 129.9ZM308.6 128.5L316.7 128.8L312.5 130.7L304.3 130.4ZM324.9 129.0L333.0 129.3L329.1 131.2L320.8 130.9ZM341.2 129.5L349.4 129.8L345.7 131.8L337.4 131.5ZM357.7 130.1L366.0 130.3L362.5 132.3L354.1 132.0ZM374.3 130.6L382.6 130.9L379.4 132.9L370.9 132.6ZM391.0 131.2L399.4 131.4L396.4 133.4L387.9 133.1ZM407.8 131.7L416.3 132.0L413.5 134.0L404.9 133.7ZM424.8 132.2L433.3 132.5L430.7 134.5L422.1 134.3ZM441.8 132.8L450.4 133.1L448.1 135.1L439.4 134.8ZM459.0 133.4L467.7 133.6L465.6 135.7L456.8 135.4ZM476.3 133.9L485.0 134.2L483.2 136.3L474.4 136.0ZM493.8 134.5L502.5 134.8L501.0 136.8L492.1 136.6ZM247.5 128.5L255.6 128.8L250.5 130.7L242.4 130.5ZM263.6 129.1L271.7 129.3L266.9 131.3L258.7 131.0ZM279.8 129.6L288.0 129.9L283.3 131.8L275.1 131.5ZM296.1 130.1L304.3 130.4L299.9 132.4L291.6 132.1ZM312.5 130.7L320.8 130.9L316.6 132.9L308.2 132.6ZM329.1 131.2L337.4 131.5L333.4 133.5L325.0 133.2ZM345.7 131.8L354.1 132.0L350.4 134.0L341.9 133.8ZM362.5 132.3L370.9 132.6L367.4 134.6L358.9 134.3ZM379.4 132.9L387.9 133.1L384.6 135.2L376.0 134.9ZM396.4 133.4L404.9 133.7L401.9 135.8L393.2 135.5ZM413.5 134.0L422.1 134.3L419.3 136.3L410.6 136.0ZM250.5 130.7L258.7 131.0L253.6 133.0L245.3 132.7ZM266.9 131.3L275.1 131.5L270.2 133.5L261.9 133.3ZM283.3 131.8L291.6 132.1L286.9 134.1L278.5 133.8ZM299.9 132.4L308.2 132.6L303.8 134.7L295.4 134.4ZM316.6 132.9L325.0 133.2L320.8 135.2L312.3 135.0ZM333.4 133.5L341.9 133.8L337.9 135.8L329.3 135.5ZM350.4 134.0L358.9 134.3L355.2 136.4L346.5 136.1ZM253.6 133.0L261.9 133.3L256.7 135.3L248.3 135.0ZM270.2 133.5L278.5 133.8L273.6 135.9L265.2 135.6Z"/><path fill="#cccccc" d="M780.7 112.4L788.4 112.6L790.6 114.0L782.8 113.8ZM796.1 112.8L803.9 113.0L806.3 114.4L798.5 114.2ZM811.7 113.2L819.5 113.4L822.1 114.8L814.2 114.6ZM713.6 112.0L721.2 112.2L722.6 113.6L714.9 113.4ZM728.8 112.4L736.4 112.6L738.1 114.0L730.3 113.8ZM744.1 112.8L751.8 113.0L753.6 114.4L745.8 114.2ZM759.5 113.2L767.3 113.4L769.3 114.9L761.5 114.6ZM775.0 113.6L782.8 113.8L785.1 115.3L777.2 115.1ZM790.6 114.0L798.5 114.2L800.9 115.7L793.0 115.5ZM806.3 114.4L814.2 114.6L816.9 116.1L808.9 115.9ZM646.6 111.6L654.1 111.8L654.7 113.2L647.1 113.0ZM661.6 112.0L669.1 112.2L669.9 113.6L662.3 113.4ZM676.7 112.4L684.3 112.6L685.3 114.0L677.6 113.8ZM691.9 112.8L699.5 113.0L700.7 114.5L693.0 114.2ZM707.2 113.2L714.9 113.4L716.2 114.9L708.5 114.7ZM722.6 113.6L730.3 113.8L731.9 115.3L724.0 115.1ZM738.1 114.0L745.8 114.2L747.6 115.7L739.7 115.5ZM753.6 114.4L761.5 114.6L763.4 116.2L755.5 115.9ZM769.3 114.9L777.2 115.1L779.3 116.6L771.4 116.4ZM785.1 115.3L793.0 115.5L795.3 117.0L787.3 116.8ZM800.9 115.7L808.9 115.9L811.5 117.5L803.4 117.2ZM816.9 116.1L824.9 116.3L827.7 117.9L819.6 117.7ZM594.5 111.6L602.0 111.8L601.9 113.2L594.4 113.0ZM609.4 112.0L616.9 112.2L617.1 113.6L609.5 113.4ZM624.4 112.4L632.0 112.6L632.3 114.0L624.7 113.8ZM639.5 112.8L647.1 113.0L647.6 114.5L639.9 114.3ZM654.7 113.2L662.3 113.4L663.0 114.9L655.3 114.7ZM669.9 113.6L677.6 113.8L678.5 115.3L670.7 115.1ZM685.3 114.0L693.0 114.2L694.1 115.7L686.3 115.5ZM700.7 114.5L708.5 114.7L709.8 116.2L701.9 116.0ZM716.2 114.9L724.0 115.1L725.5 116.6L717.6 116.4ZM731.9 115.3L739.7 115.5L741.4 117.0L733.5 116.8ZM747.6 115.7L755.5 115.9L757.4 117.5L749.4 117.3ZM763.4 116.2L771.4 116.4L773.5 117.9L765.4 117.7ZM779.3 116.6L787.3 116.8L789.7 118.4L781.6 118.1ZM795.3 117.0L803.4 117.2L805.9 118.8L797.8 118.6ZM811.5 117.5L819.6 117.7L822.3 119.3L814.1 119.0ZM527.6 111.2L535.0 111.4L534.1 112.8L526.6 112.6ZM542.3 111.6L549.7 111.8L549.0 113.2L541.5 113.0ZM557.1 112.0L564.5 112.2L564.0 113.6L556.5 113.4ZM571.9 112.4L579.4 112.6L579.1 114.1L571.5 113.9ZM586.9 112.8L594.4 113.0L594.2 114.5L586.6 114.3ZM601.9 113.2L609.5 113.4L609.5 114.9L601.9 114.7ZM617.1 113.6L624.7 113.8L624.9 115.3L617.2 115.1ZM632.3 114.0L639.9 114.3L640.3 115.8L632.6 115.5ZM647.6 114.5L655.3 114.7L655.9 116.2L648.1 116.0ZM663.0 114.9L670.7 115.1L671.5 116.6L663.7 116.4ZM678.5 115.3L686.3 115.5L687.3 117.1L679.4 116.8ZM694.1 115.7L701.9 116.0L703.1 117.5L695.2 117.3ZM709.8 116.2L717.6 116.4L719.1 117.9L711.1 117.7ZM725.5 116.6L733.5 116.8L735.1 118.4L727.1 118.2ZM741.4 117.0L749.4 117.3L751.3 118.8L743.2 118.6ZM757.4 117.5L765.4 117.7L767.5 119.3L759.4 119.1ZM773.5 117.9L781.6 118.1L783.8 119.7L775.7 119.5ZM789.7 118.4L797.8 118.6L800.3 120.2L792.1 120.0ZM805.9 118.8L814.1 119.0L816.8 120.6L808.6 120.4ZM460.8 110.8L468.1 111.0L466.4 112.4L459.0 112.2ZM475.3 111.2L482.6 111.4L481.0 112.8L473.7 112.6ZM489.9 111.6L497.2 111.8L495.8 113.2L488.4 113.0ZM504.5 112.0L511.9 112.2L510.7 113.7L503.2 113.4ZM519.3 112.4L526.6 112.6L525.6 114.1L518.2 113.9ZM534.1 112.8L541.5 113.0L540.7 114.5L533.2 114.3ZM549.0 113.2L556.5 113.4L555.8 114.9L548.3 114.7ZM564.0 113.6L571.5 113.9L571.1 115.3L563.4 115.1ZM579.1 114.1L586.6 114.3L586.4 115.8L578.7 115.6ZM594.2 114.5L601.9 114.7L601.8 116.2L594.1 116.0ZM609.5 114.9L617.2 115.1L617.3 116.6L609.6 116.4ZM624.9 115.3L632.6 115.5L632.9 117.1L625.1 116.9ZM640.3 115.8L648.1 116.0L648.6 117.5L640.8 117.3ZM655.9 116.2L663.7 116.4L664.4 118.0L656.5 117.7ZM671.5 116.6L679.4 116.8L680.4 118.4L672.4 118.2ZM687.3 117.1L695.2 117.3L696.4 118.9L688.3 118.6ZM703.1 117.5L711.1 117.7L712.5 119.3L704.4 119.1ZM719.1 117.9L727.1 118.2L728.7 119.8L720.5 119.5ZM735.1 118.4L743.2 118.6L745.0 120.2L736.8 120.0ZM751.3 118.8L759.4 119.1L761.4 120.7L753.2 120.4ZM767.5 119.3L775.7 119.5L777.9 121.1L769.6 120.9ZM783.8 119.7L792.1 120.0L794.5 121.6L786.2 121.4ZM800.3 120.2L808.6 120.4L811.2 122.1L802.9 121.8ZM816.8 120.6L825.2 120.9L828.1 122.5L819.6 122.3ZM408.5 110.8L415.6 111.0L413.3 112.4L406.0 112.2ZM422.8 111.2L430.0 111.4L427.8 112.8L420.5 112.6ZM437.2 111.6L444.5 111.8L442.5 113.3L435.1 113.0ZM451.8 112.0L459.0 112.2L457.2 113.7L449.8 113.5ZM466.4 112.4L473.7 112.6L472.0 114.1L464.6 113.9ZM481.0 112.8L488.4 113.0L486.9 114.5L479.5 114.3ZM495.8 113.2L503.2 113.4L501.9 114.9L494.4 114.7ZM510.7 113.7L518.2 113.9L517.0 115.4L509.5 115.1ZM525.6 114.1L533.2 114.3L532.2 115.8L524.6 115.6ZM540.7 114.5L548.3 114.7L547.5 116.2L539.9 116.0ZM555.8 114.9L563.4 115.1L562.9 116.7L555.2 116.4ZM571.1 115.3L578.7 115.6L578.4 117.1L570.6 116.9ZM586.4 115.8L594.1 116.0L593.9 117.5L586.1 117.3ZM601.8 116.2L609.6 116.4L609.6 118.0L601.8 117.8ZM617.3 116.6L625.1 116.9L625.4 118.4L617.5 118.2ZM632.9 117.1L640.8 117.3L641.2 118.9L633.3 118.7ZM648.6 117.5L656.5 117.7L657.2 119.3L649.2 119.1ZM664.4 118.0L672.4 118.2L673.3 119.8L665.2 119.6ZM680.4 118.4L688.3 118.6L689.4 120.2L681.3 120.0ZM696.4 118.9L704.4 119.1L705.7 120.7L697.5 120.5ZM712.5 119.3L720.5 119.5L722.1 121.2L713.9 120.9ZM728.7 119.8L736.8 120.0L738.5 121.6L730.3 121.4ZM745.0 120.2L753.2 120.4L755.1 122.1L746.8 121.9ZM761.4 120.7L769.6 120.9L771.8 122.6L763.4 122.3ZM777.9 121.1L786.2 121.4L788.6 123.1L780.2 122.8ZM794.5 121.6L802.9 121.8L805.5 123.5L797.0 123.3ZM811.2 122.1L819.6 122.3L822.5 124.0L814.0 123.8ZM341.7 110.4L348.8 110.6L345.6 112.0L338.5 111.8ZM355.9 110.8L363.0 111.0L359.9 112.4L352.8 112.2ZM370.1 111.2L377.2 111.4L374.4 112.8L367.1 112.6ZM384.4 111.6L391.6 111.8L388.9 113.3L381.6 113.1ZM398.8 112.0L406.0 112.2L403.5 113.7L396.2 113.5ZM413.3 112.4L420.5 112.6L418.2 114.1L410.8 113.9ZM427.8 112.8L435.1 113.0L433.0 114.5L425.6 114.3ZM442.5 113.3L449.8 113.5L447.8 114.9L440.4 114.7ZM457.2 113.7L464.6 113.9L462.8 115.4L455.3 115.2ZM472.0 114.1L479.5 114.3L477.8 115.8L470.3 115.6ZM486.9 114.5L494.4 114.7L493.0 116.2L485.4 116.0ZM501.9 114.9L509.5 115.1L508.2 116.7L500.6 116.5ZM517.0 115.4L524.6 115.6L523.6 117.1L515.9 116.9ZM532.2 115.8L539.9 116.0L539.0 117.6L531.3 117.3ZM547.5 116.2L555.2 116.4L554.5 118.0L546.7 117.8ZM562.9 116.7L570.6 116.9L570.1 118.5L562.3 118.2ZM578.4 117.1L586.1 117.3L585.9 118.9L578.0 118.7ZM593.9 117.5L601.8 117.8L601.7 119.4L593.8 119.1ZM609.6 118.0L617.5 118.2L617.6 119.8L609.6 119.6ZM625.4 118.4L633.3 118.7L633.6 120.3L625.6 120.0ZM641.2 118.9L649.2 119.1L649.8 120.7L641.7 120.5ZM657.2 119.3L665.2 119.6L666.0 121.2L657.9 121.0ZM673.3 119.8L681.3 120.0L682.3 121.7L674.1 121.4ZM689.4 120.2L697.5 120.5L698.8 122.1L690.5 121.9ZM705.7 120.7L713.9 120.9L715.3 122.6L707.0 122.4ZM722.1 121.2L730.3 121.4L731.9 123.1L723.6 122.8ZM738.5 121.6L746.8 121.9L748.7 123.6L740.3 123.3ZM755.1 122.1L763.4 122.3L765.6 124.0L757.1 123.8ZM771.8 122.6L780.2 122.8L782.5 124.5L774.0 124.3ZM275.2 110.0L282.1 110.2L278.1 111.6L271.1 111.4ZM289.1 110.4L296.1 110.6L292.2 112.0L285.1 111.8ZM303.1 110.8L310.1 111.0L306.4 112.4L299.3 112.2ZM317.2 111.2L324.3 111.4L320.7 112.9L313.6 112.7ZM331.3 111.6L338.5 111.8L335.1 113.3L327.9 113.1ZM345.6 112.0L352.8 112.2L349.6 113.7L342.3 113.5ZM359.9 112.4L367.1 112.6L364.1 114.1L356.8 113.9ZM374.4 112.8L381.6 113.1L378.8 114.5L371.4 114.3ZM388.9 113.3L396.2 113.5L393.5 115.0L386.1 114.8ZM403.5 113.7L410.8 113.9L408.3 115.4L400.9 115.2ZM418.2 114.1L425.6 114.3L423.2 115.8L415.8 115.6ZM433.0 114.5L440.4 114.7L438.3 116.3L430.7 116.0ZM447.8 114.9L455.3 115.2L453.4 116.7L445.8 116.5ZM462.8 115.4L470.3 115.6L468.5 117.1L460.9 116.9ZM477.8 115.8L485.4 116.0L483.8 117.6L476.2 117.4ZM493.0 116.2L500.6 116.5L499.2 118.0L491.5 117.8ZM508.2 116.7L515.9 116.9L514.7 118.5L507.0 118.3ZM523.6 117.1L531.3 117.3L530.3 118.9L522.5 118.7ZM539.0 117.6L546.7 117.8L546.0 119.4L538.1 119.2ZM554.5 118.0L562.3 118.2L561.7 119.8L553.8 119.6ZM570.1 118.5L578.0 118.7L577.6 120.3L569.7 120.1ZM585.9 118.9L593.8 119.1L593.6 120.8L585.6 120.5ZM601.7 119.4L609.6 119.6L609.7 121.2L601.6 121.0ZM617.6 119.8L625.6 120.0L625.9 121.7L617.8 121.5ZM633.6 120.3L641.7 120.5L642.2 122.2L634.0 121.9ZM649.8 120.7L657.9 121.0L658.6 122.6L650.3 122.4ZM666.0 121.2L674.1 121.4L675.1 123.1L666.8 122.9ZM682.3 121.7L690.5 121.9L691.7 123.6L683.3 123.4ZM698.8 122.1L707.0 122.4L708.4 124.1L700.0 123.8ZM250.1 110.8L257.1 111.0L252.7 112.5L245.6 112.2ZM264.1 111.2L271.1 111.4L266.9 112.9L259.8 112.7ZM278.1 111.6L285.1 111.8L281.1 113.3L274.0 113.1ZM292.2 112.0L299.3 112.2L295.4 113.7L288.3 113.5ZM306.4 112.4L313.6 112.7L309.9 114.1L302.6 113.9ZM320.7 112.9L327.9 113.1L324.4 114.6L317.1 114.3ZM335.1 113.3L342.3 113.5L339.0 115.0L331.6 114.8ZM349.6 113.7L356.8 113.9L353.6 115.4L346.3 115.2ZM364.1 114.1L371.4 114.3L368.4 115.8L361.0 115.6ZM378.8 114.5L386.1 114.8L383.3 116.3L375.8 116.1ZM393.5 115.0L400.9 115.2L398.3 116.7L390.8 116.5ZM408.3 115.4L415.8 115.6L413.3 117.2L405.8 116.9ZM423.2 115.8L430.7 116.0L428.5 117.6L420.9 117.4ZM438.3 116.3L445.8 116.5L443.7 118.0L436.1 117.8ZM453.4 116.7L460.9 116.9L459.0 118.5L451.4 118.3ZM468.5 117.1L476.2 117.4L474.5 119.0L466.7 118.7ZM483.8 117.6L491.5 117.8L490.0 119.4L482.2 119.2ZM499.2 118.0L507.0 118.3L505.6 119.9L497.8 119.6ZM514.7 118.5L522.5 118.7L521.4 120.3L513.5 120.1ZM530.3 118.9L538.1 119.2L537.2 120.8L529.3 120.6ZM546.0 119.4L553.8 119.6L553.1 121.3L545.2 121.0ZM561.7 119.8L569.7 120.1L569.2 121.7L561.1 121.5ZM577.6 120.3L585.6 120.5L585.3 122.2L577.2 122.0ZM593.6 120.8L601.6 121.0L601.6 122.7L593.4 122.4ZM609.7 121.2L617.8 121.5L617.9 123.2L609.7 122.9ZM625.9 121.7L634.0 121.9L634.4 123.6L626.1 123.4ZM642.2 122.2L650.3 122.4L650.9 124.1L642.6 123.9ZM252.7 112.5L259.8 112.7L255.4 114.1L248.2 113.9ZM266.9 112.9L274.0 113.1L269.7 114.6L262.5 114.4ZM281.1 113.3L288.3 113.5L284.2 115.0L277.0 114.8ZM295.4 113.7L302.6 113.9L298.7 115.4L291.5 115.2ZM309.9 114.1L317.1 114.3L313.4 115.9L306.0 115.6ZM324.4 114.6L331.6 114.8L328.1 116.3L320.7 116.1ZM339.0 115.0L346.3 115.2L342.9 116.7L335.5 116.5ZM353.6 115.4L361.0 115.6L357.8 117.2L350.4 117.0ZM368.4 115.8L375.8 116.1L372.8 117.6L365.3 117.4ZM383.3 116.3L390.8 116.5L387.9 118.1L380.4 117.8ZM398.3 116.7L405.8 116.9L403.1 118.5L395.5 118.3ZM413.3 117.2L420.9 117.4L418.4 119.0L410.8 118.7ZM428.5 117.6L436.1 117.8L433.8 119.4L426.1 119.2ZM443.7 118.0L451.4 118.3L449.3 119.9L441.6 119.7ZM459.0 118.5L466.7 118.7L464.9 120.4L457.1 120.1ZM474.5 119.0L482.2 119.2L480.6 120.8L472.7 120.6ZM490.0 119.4L497.8 119.6L496.4 121.3L488.5 121.1ZM505.6 119.9L513.5 120.1L512.3 121.8L504.3 121.5ZM521.4 120.3L529.3 120.6L528.2 122.2L520.2 122.0ZM537.2 120.8L545.2 121.0L544.3 122.7L536.3 122.5ZM553.1 121.3L561.1 121.5L560.5 123.2L552.4 122.9ZM569.2 121.7L577.2 122.0L576.8 123.7L568.7 123.4ZM241.1 113.7L248.2 113.9L243.6 115.4L236.4 115.2ZM255.4 114.1L262.5 114.4L258.1 115.9L250.9 115.7ZM269.7 114.6L277.0 114.8L272.7 116.3L265.4 116.1ZM284.2 115.0L291.5 115.2L287.4 116.8L280.0 116.5ZM298.7 115.4L306.0 115.6L302.1 117.2L294.8 117.0ZM313.4 115.9L320.7 116.1L317.0 117.6L309.6 117.4ZM328.1 116.3L335.5 116.5L332.0 118.1L324.5 117.9ZM342.9 116.7L350.4 117.0L347.0 118.5L339.5 118.3ZM357.8 117.2L365.3 117.4L362.2 119.0L354.6 118.8ZM372.8 117.6L380.4 117.8L377.4 119.5L369.8 119.2ZM387.9 118.1L395.5 118.3L392.7 119.9L385.1 119.7ZM403.1 118.5L410.8 118.7L408.2 120.4L400.4 120.1ZM418.4 119.0L426.1 119.2L423.7 120.8L415.9 120.6ZM433.8 119.4L441.6 119.7L439.3 121.3L431.5 121.1ZM449.3 119.9L457.1 120.1L455.1 121.8L447.2 121.5ZM464.9 120.4L472.7 120.6L470.9 122.3L463.0 122.0ZM480.6 120.8L488.5 121.1L486.9 122.7L478.9 122.5ZM496.4 121.3L504.3 121.5L502.9 123.2L494.9 123.0ZM243.6 115.4L250.9 115.7L246.2 117.2L238.9 117.0ZM258.1 115.9L265.4 116.1L260.9 117.7L253.6 117.4ZM272.7 116.3L280.0 116.5L275.8 118.1L268.3 117.9ZM287.4 116.8L294.8 117.0L290.7 118.6L283.2 118.3ZM302.1 117.2L309.6 117.4L305.7 119.0L298.1 118.8ZM317.0 117.6L324.5 117.9L320.7 119.5L313.2 119.3ZM332.0 118.1L339.5 118.3L335.9 119.9L328.3 119.7ZM347.0 118.5L354.6 118.8L351.2 120.4L343.6 120.2ZM362.2 119.0L369.8 119.2L366.6 120.9L358.9 120.6ZM377.4 119.5L385.1 119.7L382.1 121.3L374.3 121.1ZM392.7 119.9L400.4 120.1L397.7 121.8L389.9 121.6ZM408.2 120.4L415.9 120.6L413.4 122.3L405.5 122.1ZM423.7 120.8L431.5 121.1L429.2 122.8L421.2 122.5ZM439.3 121.3L447.2 121.5L445.0 123.3L437.1 123.0ZM246.2 117.2L253.6 117.4L248.9 119.0L241.5 118.8ZM260.9 117.7L268.3 117.9L263.9 119.5L256.4 119.3ZM275.8 118.1L283.2 118.3L278.9 120.0L271.4 119.7ZM290.7 118.6L298.1 118.8L294.0 120.4L286.4 120.2ZM305.7 119.0L313.2 119.3L309.3 120.9L301.6 120.7ZM320.7 119.5L328.3 119.7L324.6 121.4L316.9 121.1ZM335.9 119.9L343.6 120.2L340.0 121.8L332.3 121.6ZM351.2 120.4L358.9 120.6L355.6 122.3L347.8 122.1ZM366.6 120.9L374.3 121.1L371.2 122.8L363.4 122.6ZM248.9 119.0L256.4 119.3L251.7 120.9L244.1 120.7ZM263.9 119.5L271.4 119.7L266.9 121.4L259.3 121.2ZM278.9 120.0L286.4 120.2L282.1 121.9L274.5 121.6ZM294.0 120.4L301.6 120.7L297.5 122.4L289.8 122.1ZM309.3 120.9L316.9 121.1L313.0 122.8L305.2 122.6Z"/><path fill="#cecece" d="M788.2 103.7L795.3 103.8L797.5 105.1L790.3 104.9ZM802.5 104.0L809.7 104.2L812.0 105.4L804.8 105.3ZM816.9 104.4L824.1 104.6L826.6 105.8L819.3 105.6ZM740.2 103.7L747.3 103.8L749.0 105.1L741.8 104.9ZM754.4 104.0L761.6 104.2L763.4 105.4L756.1 105.3ZM768.7 104.4L775.9 104.5L777.8 105.8L770.6 105.6ZM783.1 104.7L790.3 104.9L792.4 106.2L785.1 106.0ZM797.5 105.1L804.8 105.3L807.1 106.5L799.7 106.4ZM812.0 105.4L819.3 105.6L821.8 106.9L814.4 106.7ZM692.1 103.7L699.2 103.8L700.2 105.1L693.1 104.9ZM706.2 104.0L713.3 104.2L714.5 105.4L707.4 105.3ZM720.4 104.4L727.5 104.5L728.9 105.8L721.7 105.6ZM734.6 104.7L741.8 104.9L743.4 106.2L736.1 106.0ZM749.0 105.1L756.1 105.3L757.9 106.5L750.6 106.4ZM763.4 105.4L770.6 105.6L772.5 106.9L765.2 106.7ZM777.8 105.8L785.1 106.0L787.2 107.3L779.9 107.1ZM792.4 106.2L799.7 106.4L802.0 107.7L794.6 107.5ZM807.1 106.5L814.4 106.7L816.9 108.0L809.4 107.8ZM643.8 103.7L650.8 103.8L651.3 105.1L644.3 104.9ZM657.8 104.0L664.8 104.2L665.5 105.4L658.4 105.3ZM671.9 104.4L678.9 104.5L679.8 105.8L672.6 105.6ZM686.0 104.7L693.1 104.9L694.1 106.2L686.9 106.0ZM700.2 105.1L707.4 105.3L708.5 106.5L701.3 106.4ZM714.5 105.4L721.7 105.6L723.1 106.9L715.8 106.7ZM728.9 105.8L736.1 106.0L737.6 107.3L730.3 107.1ZM743.4 106.2L750.6 106.4L752.3 107.7L745.0 107.5ZM757.9 106.5L765.2 106.7L767.1 108.0L759.7 107.8ZM772.5 106.9L779.9 107.1L781.9 108.4L774.5 108.2ZM787.2 107.3L794.6 107.5L796.8 108.8L789.4 108.6ZM802.0 107.7L809.4 107.8L811.9 109.2L804.3 109.0ZM816.9 108.0L824.3 108.2L826.9 109.6L819.4 109.4ZM595.4 103.6L602.3 103.8L602.2 105.1L595.2 104.9ZM609.2 104.0L616.2 104.2L616.3 105.4L609.3 105.3ZM623.2 104.4L630.2 104.5L630.5 105.8L623.4 105.6ZM637.2 104.7L644.3 104.9L644.7 106.2L637.6 106.0ZM651.3 105.1L658.4 105.3L659.0 106.5L651.8 106.3ZM665.5 105.4L672.6 105.6L673.4 106.9L666.2 106.7ZM679.8 105.8L686.9 106.0L687.9 107.3L680.6 107.1ZM694.1 106.2L701.3 106.4L702.4 107.7L695.2 107.5ZM708.5 106.5L715.8 106.7L717.1 108.0L709.8 107.8ZM723.1 106.9L730.3 107.1L731.8 108.4L724.4 108.2ZM737.6 107.3L745.0 107.5L746.6 108.8L739.2 108.6ZM752.3 107.7L759.7 107.8L761.5 109.2L754.1 109.0ZM767.1 108.0L774.5 108.2L776.5 109.6L769.0 109.4ZM781.9 108.4L789.4 108.6L791.6 110.0L784.0 109.8ZM796.8 108.8L804.3 109.0L806.7 110.3L799.1 110.1ZM811.9 109.2L819.4 109.4L822.0 110.7L814.3 110.5ZM546.7 103.6L553.6 103.8L553.0 105.1L546.0 104.9ZM560.5 104.0L567.4 104.2L566.9 105.4L559.9 105.2ZM574.3 104.3L581.3 104.5L581.0 105.8L573.9 105.6ZM588.2 104.7L595.2 104.9L595.1 106.2L588.0 106.0ZM602.2 105.1L609.3 105.3L609.3 106.5L602.2 106.3ZM616.3 105.4L623.4 105.6L623.6 106.9L616.4 106.7ZM630.5 105.8L637.6 106.0L637.9 107.3L630.7 107.1ZM644.7 106.2L651.8 106.3L652.4 107.7L645.2 107.5ZM659.0 106.5L666.2 106.7L666.9 108.0L659.6 107.8ZM673.4 106.9L680.6 107.1L681.5 108.4L674.2 108.2ZM687.9 107.3L695.2 107.5L696.2 108.8L688.9 108.6ZM702.4 107.7L709.8 107.8L711.0 109.2L703.6 109.0ZM717.1 108.0L724.4 108.2L725.9 109.6L718.4 109.4ZM731.8 108.4L739.2 108.6L740.8 110.0L733.3 109.8ZM746.6 108.8L754.1 109.0L755.8 110.3L748.3 110.2ZM761.5 109.2L769.0 109.4L771.0 110.7L763.4 110.5ZM776.5 109.6L784.0 109.8L786.2 111.1L778.6 110.9ZM791.6 110.0L799.1 110.1L801.5 111.5L793.8 111.3ZM806.7 110.3L814.3 110.5L816.9 111.9L809.2 111.7ZM497.9 103.6L504.7 103.8L503.5 105.1L496.6 104.9ZM511.6 104.0L518.4 104.2L517.4 105.4L510.4 105.2ZM525.3 104.3L532.2 104.5L531.3 105.8L524.3 105.6ZM539.1 104.7L546.0 104.9L545.3 106.2L538.3 106.0ZM553.0 105.1L559.9 105.2L559.4 106.5L552.3 106.3ZM566.9 105.4L573.9 105.6L573.6 106.9L566.5 106.7ZM581.0 105.8L588.0 106.0L587.8 107.3L580.7 107.1ZM595.1 106.2L602.2 106.3L602.1 107.7L595.0 107.5ZM609.3 106.5L616.4 106.7L616.5 108.0L609.3 107.8ZM623.6 106.9L630.7 107.1L631.0 108.4L623.8 108.2ZM637.9 107.3L645.2 107.5L645.6 108.8L638.3 108.6ZM652.4 107.7L659.6 107.8L660.3 109.2L652.9 109.0ZM666.9 108.0L674.2 108.2L675.0 109.6L667.6 109.4ZM681.5 108.4L688.9 108.6L689.8 110.0L682.4 109.8ZM696.2 108.8L703.6 109.0L704.8 110.4L697.3 110.2ZM711.0 109.2L718.4 109.4L719.8 110.8L712.3 110.6ZM725.9 109.6L733.3 109.8L734.9 111.1L727.3 110.9ZM740.8 110.0L748.3 110.2L750.0 111.5L742.4 111.3ZM755.8 110.3L763.4 110.5L765.3 111.9L757.7 111.7ZM771.0 110.7L778.6 110.9L780.7 112.4L773.0 112.1ZM786.2 111.1L793.8 111.3L796.1 112.8L788.4 112.6ZM801.5 111.5L809.2 111.7L811.7 113.2L803.9 113.0ZM816.9 111.9L824.6 112.1L827.3 113.6L819.5 113.4ZM448.9 103.6L455.7 103.8L453.9 105.1L447.1 104.9ZM462.4 104.0L469.2 104.2L467.6 105.4L460.8 105.2ZM476.1 104.3L482.9 104.5L481.5 105.8L474.5 105.6ZM489.8 104.7L496.6 104.9L495.3 106.2L488.4 106.0ZM503.5 105.1L510.4 105.2L509.3 106.5L502.3 106.3ZM517.4 105.4L524.3 105.6L523.4 106.9L516.3 106.7ZM531.3 105.8L538.3 106.0L537.5 107.3L530.4 107.1ZM545.3 106.2L552.3 106.3L551.7 107.7L544.6 107.5ZM559.4 106.5L566.5 106.7L566.0 108.0L558.8 107.8ZM573.6 106.9L580.7 107.1L580.4 108.4L573.2 108.2ZM587.8 107.3L595.0 107.5L594.8 108.8L587.6 108.6ZM602.1 107.7L609.3 107.8L609.4 109.2L602.1 109.0ZM616.5 108.0L623.8 108.2L624.0 109.6L616.7 109.4ZM631.0 108.4L638.3 108.6L638.7 110.0L631.3 109.8ZM645.6 108.8L652.9 109.0L653.5 110.4L646.1 110.2ZM660.3 109.2L667.6 109.4L668.4 110.8L660.9 110.6ZM675.0 109.6L682.4 109.8L683.3 111.2L675.9 111.0ZM689.8 110.0L697.3 110.2L698.4 111.6L690.9 111.4ZM704.8 110.4L712.3 110.6L713.6 112.0L706.0 111.8ZM719.8 110.8L727.3 110.9L728.8 112.4L721.2 112.2ZM734.9 111.1L742.4 111.3L744.1 112.8L736.4 112.6ZM750.0 111.5L757.7 111.7L759.5 113.2L751.8 113.0ZM765.3 111.9L773.0 112.1L775.0 113.6L767.3 113.4ZM399.7 103.6L406.4 103.8L404.1 105.1L397.3 104.9ZM413.2 104.0L419.9 104.2L417.7 105.4L410.9 105.2ZM426.7 104.3L433.4 104.5L431.4 105.8L424.6 105.6ZM440.3 104.7L447.1 104.9L445.2 106.2L438.3 106.0ZM453.9 105.1L460.8 105.2L459.0 106.5L452.1 106.3ZM467.6 105.4L474.5 105.6L473.0 106.9L466.0 106.7ZM481.5 105.8L488.4 106.0L487.0 107.3L480.0 107.1ZM495.3 106.2L502.3 106.3L501.1 107.7L494.0 107.5ZM509.3 106.5L516.3 106.7L515.3 108.0L508.2 107.8ZM523.4 106.9L530.4 107.1L529.5 108.4L522.4 108.2ZM537.5 107.3L544.6 107.5L543.8 108.8L536.7 108.6ZM551.7 107.7L558.8 107.8L558.3 109.2L551.0 109.0ZM566.0 108.0L573.2 108.2L572.8 109.6L565.5 109.4ZM580.4 108.4L587.6 108.6L587.4 110.0L580.1 109.8ZM594.8 108.8L602.1 109.0L602.0 110.4L594.7 110.2ZM609.4 109.2L616.7 109.4L616.8 110.8L609.4 110.6ZM624.0 109.6L631.3 109.8L631.6 111.2L624.2 111.0ZM638.7 110.0L646.1 110.2L646.6 111.6L639.1 111.4ZM653.5 110.4L660.9 110.6L661.6 112.0L654.1 111.8ZM668.4 110.8L675.9 111.0L676.7 112.4L669.1 112.2ZM683.3 111.2L690.9 111.4L691.9 112.8L684.3 112.6ZM698.4 111.6L706.0 111.8L707.2 113.2L699.5 113.0ZM350.4 103.6L357.0 103.8L354.1 105.1L347.4 104.9ZM363.7 104.0L370.4 104.1L367.6 105.4L360.9 105.2ZM377.1 104.3L383.8 104.5L381.2 105.8L374.4 105.6ZM390.6 104.7L397.3 104.9L394.9 106.2L388.0 106.0ZM404.1 105.1L410.9 105.2L408.6 106.5L401.7 106.3ZM417.7 105.4L424.6 105.6L422.4 106.9L415.5 106.7ZM431.4 105.8L438.3 106.0L436.3 107.3L429.3 107.1ZM445.2 106.2L452.1 106.3L450.3 107.7L443.3 107.5ZM459.0 106.5L466.0 106.7L464.3 108.0L457.3 107.8ZM473.0 106.9L480.0 107.1L478.5 108.4L471.4 108.2ZM487.0 107.3L494.0 107.5L492.7 108.8L485.6 108.6ZM501.1 107.7L508.2 107.8L507.0 109.2L499.8 109.0ZM515.3 108.0L522.4 108.2L521.4 109.6L514.2 109.4ZM529.5 108.4L536.7 108.6L535.8 110.0L528.6 109.8ZM543.8 108.8L551.0 109.0L550.4 110.4L543.1 110.2ZM558.3 109.2L565.5 109.4L565.0 110.8L557.7 110.6ZM572.8 109.6L580.1 109.8L579.7 111.2L572.4 111.0ZM587.4 110.0L594.7 110.2L594.5 111.6L587.1 111.4ZM602.0 110.4L609.4 110.6L609.4 112.0L602.0 111.8ZM616.8 110.8L624.2 111.0L624.4 112.4L616.9 112.2ZM631.6 111.2L639.1 111.4L639.5 112.8L632.0 112.6ZM300.9 103.6L307.4 103.8L303.9 105.0L297.3 104.9ZM314.1 104.0L320.7 104.1L317.3 105.4L310.6 105.2ZM327.3 104.3L334.0 104.5L330.8 105.8L324.1 105.6ZM340.7 104.7L347.4 104.9L344.3 106.2L337.6 106.0ZM354.1 105.1L360.9 105.2L358.0 106.5L351.1 106.3ZM367.6 105.4L374.4 105.6L371.6 106.9L364.8 106.7ZM381.2 105.8L388.0 106.0L385.4 107.3L378.5 107.1ZM394.9 106.2L401.7 106.3L399.3 107.7L392.3 107.5ZM408.6 106.5L415.5 106.7L413.2 108.0L406.2 107.9ZM422.4 106.9L429.3 107.1L427.2 108.4L420.2 108.2ZM436.3 107.3L443.3 107.5L441.3 108.8L434.3 108.6ZM450.3 107.7L457.3 107.8L455.5 109.2L448.4 109.0ZM464.3 108.0L471.4 108.2L469.7 109.6L462.6 109.4ZM478.5 108.4L485.6 108.6L484.1 110.0L476.9 109.8ZM492.7 108.8L499.8 109.0L498.5 110.4L491.3 110.2ZM507.0 109.2L514.2 109.4L513.0 110.8L505.8 110.6ZM521.4 109.6L528.6 109.8L527.6 111.2L520.3 111.0ZM535.8 110.0L543.1 110.2L542.3 111.6L535.0 111.4ZM550.4 110.4L557.7 110.6L557.1 112.0L549.7 111.8ZM565.0 110.8L572.4 111.0L571.9 112.4L564.5 112.2ZM579.7 111.2L587.1 111.4L586.9 112.8L579.4 112.6ZM251.1 103.6L257.7 103.8L253.6 105.0L247.0 104.9ZM264.2 104.0L270.8 104.1L266.9 105.4L260.2 105.2ZM277.4 104.3L284.0 104.5L280.2 105.8L273.5 105.6ZM290.6 104.7L297.3 104.9L293.6 106.2L286.9 106.0ZM303.9 105.0L310.6 105.2L307.1 106.5L300.4 106.3ZM317.3 105.4L324.1 105.6L320.7 106.9L313.9 106.7ZM330.8 105.8L337.6 106.0L334.3 107.3L327.5 107.1ZM344.3 106.2L351.1 106.3L348.1 107.7L341.2 107.5ZM358.0 106.5L364.8 106.7L361.9 108.0L355.0 107.9ZM371.6 106.9L378.5 107.1L375.8 108.4L368.8 108.2ZM385.4 107.3L392.3 107.5L389.8 108.8L382.8 108.6ZM399.3 107.7L406.2 107.9L403.8 109.2L396.8 109.0ZM413.2 108.0L420.2 108.2L417.9 109.6L410.9 109.4ZM427.2 108.4L434.3 108.6L432.2 110.0L425.0 109.8ZM441.3 108.8L448.4 109.0L446.5 110.4L439.3 110.2ZM455.5 109.2L462.6 109.4L460.8 110.8L453.6 110.6ZM469.7 109.6L476.9 109.8L475.3 111.2L468.1 111.0ZM484.1 110.0L491.3 110.2L489.9 111.6L482.6 111.4ZM498.5 110.4L505.8 110.6L504.5 112.0L497.2 111.8ZM513.0 110.8L520.3 111.0L519.3 112.4L511.9 112.2ZM240.4 104.7L247.0 104.9L242.7 106.1L236.1 106.0ZM253.6 105.0L260.2 105.2L256.1 106.5L249.4 106.3ZM266.9 105.4L273.5 105.6L269.6 106.9L262.8 106.7ZM280.2 105.8L286.9 106.0L283.1 107.3L276.3 107.1ZM293.6 106.2L300.4 106.3L296.7 107.7L289.9 107.5ZM307.1 106.5L313.9 106.7L310.4 108.0L303.5 107.9ZM320.7 106.9L327.5 107.1L324.2 108.4L317.3 108.2ZM334.3 107.3L341.2 107.5L338.0 108.8L331.1 108.6ZM348.1 107.7L355.0 107.9L351.9 109.2L345.0 109.0ZM361.9 108.0L368.8 108.2L365.9 109.6L358.9 109.4ZM375.8 108.4L382.8 108.6L380.0 110.0L373.0 109.8ZM389.8 108.8L396.8 109.0L394.2 110.4L387.1 110.2ZM403.8 109.2L410.9 109.4L408.5 110.8L401.3 110.6ZM417.9 109.6L425.0 109.8L422.8 111.2L415.6 111.0ZM432.2 110.0L439.3 110.2L437.2 111.6L430.0 111.4ZM446.5 110.4L453.6 110.6L451.8 112.0L444.5 111.8ZM242.7 106.1L249.4 106.3L245.1 107.7L238.4 107.5ZM256.1 106.5L262.8 106.7L258.7 108.0L251.9 107.9ZM269.6 106.9L276.3 107.1L272.3 108.4L265.5 108.2ZM283.1 107.3L289.9 107.5L286.0 108.8L279.2 108.6ZM296.7 107.7L303.5 107.9L299.9 109.2L292.9 109.0ZM310.4 108.0L317.3 108.2L313.7 109.6L306.8 109.4ZM324.2 108.4L331.1 108.6L327.7 110.0L320.7 109.8ZM338.0 108.8L345.0 109.0L341.7 110.4L334.7 110.2ZM351.9 109.2L358.9 109.4L355.9 110.8L348.8 110.6ZM365.9 109.6L373.0 109.8L370.1 111.2L363.0 111.0ZM380.0 110.0L387.1 110.2L384.4 111.6L377.2 111.4ZM394.2 110.4L401.3 110.6L398.8 112.0L391.6 111.8ZM245.1 107.7L251.9 107.9L247.6 109.2L240.7 109.0ZM258.7 108.0L265.5 108.2L261.3 109.6L254.4 109.4ZM272.3 108.4L279.2 108.6L275.2 110.0L268.2 109.8ZM286.0 108.8L292.9 109.0L289.1 110.4L282.1 110.2ZM299.9 109.2L306.8 109.4L303.1 110.8L296.1 110.6ZM313.7 109.6L320.7 109.8L317.2 111.2L310.1 111.0ZM327.7 110.0L334.7 110.2L331.3 111.6L324.3 111.4ZM247.6 109.2L254.4 109.4L250.1 110.8L243.2 110.6ZM261.3 109.6L268.2 109.8L264.1 111.2L257.1 111.0Z"/><g font-family="Liberation Sans" font-weight="bold" font-size="46" text-anchor="middle" dominant-baseline="central"><g fill="#d0d0d0"><text transform="matrix(0.1285 0.0054 0.0281 0.0402 742.8 190.9)">E1</text><text transform="matrix(0.1298 0.0054 0.0336 0.0406 768.7 192.0)">E3</text><text transform="matrix(0.1311 0.0055 0.0392 0.0410 794.8 193.1)">E5</text><text transform="matrix(0.1324 0.0055 0.0449 0.0415 821.1 194.2)">E7</text><text transform="matrix(0.1267 0.0054 0.0101 0.0404 655.4 191.2)">F2</text><text transform="matrix(0.1280 0.0054 0.0155 0.0408 680.9 192.3)">F4</text><text transform="matrix(0.1293 0.0055 0.0209 0.0412 706.6 193.3)">F6</text><text transform="matrix(0.1306 0.0055 0.0265 0.0417 732.6 194.4)">F8</text><text transform="matrix(0.1319 0.0056 0.0322 0.0421 758.9 195.6)">F2</text><text transform="matrix(0.1333 0.0057 0.0380 0.0426 785.4 196.7)">F4</text><text transform="matrix(0.1347 0.0057 0.0439 0.0430 812.2 197.8)">F6</text><text transform="matrix(0.1237 0.0053 -0.0132 0.0401 542.6 190.4)">G1</text><text transform="matrix(0.1249 0.0054 -0.0081 0.0406 567.5 191.4)">G3</text><text transform="matrix(0.1262 0.0055 -0.0029 0.0410 592.6 192.5)">G5</text><text transform="matrix(0.1275 0.0055 0.0024 0.0414 617.9 193.6)">G7</text><text transform="matrix(0.1288 0.0056 0.0078 0.0419 643.6 194.7)">G1</text><text transform="matrix(0.1301 0.0056 0.0133 0.0423 669.4 195.9)">G3</text><text transform="matrix(0.1314 0.0057 0.0190 0.0428 695.6 197.0)">G5</text><text transform="matrix(0.1328 0.0057 0.0247 0.0433 722.0 198.1)">G7</text><text transform="matrix(0.1342 0.0058 0.0306 0.0437 748.7 199.3)">G1</text><text transform="matrix(0.1356 0.0059 0.0366 0.0442 775.7 200.4)">G3</text><text transform="matrix(0.1370 0.0059 0.0427 0.0447 802.9 201.6)">G5</text><text transform="matrix(0.1219 0.0054 -0.0315 0.0403 454.4 190.6)">H2</text><text transform="matrix(0.1231 0.0054 -0.0265 0.0408 478.9 191.7)">H4</text><text transform="matrix(0.1244 0.0055 -0.0215 0.0412 503.6 192.8)">H6</text><text transform="matrix(0.1256 0.0055 -0.0164 0.0416 528.7 193.9)">H8</text><text transform="matrix(0.1269 0.0056 -0.0111 0.0421 553.9 195.0)">H2</text><text transform="matrix(0.1282 0.0057 -0.0057 0.0425 579.4 196.2)">H4</text><text transform="matrix(0.1295 0.0057 -0.0003 0.0430 605.2 197.3)">H6</text><text transform="matrix(0.1309 0.0058 0.0053 0.0435 631.2 198.4)">H8</text><text transform="matrix(0.1322 0.0058 0.0110 0.0439 657.6 199.6)">H2</text><text transform="matrix(0.1336 0.0059 0.0169 0.0444 684.1 200.8)">H4</text><text transform="matrix(0.1350 0.0060 0.0228 0.0449 711.0 202.0)">H6</text><text transform="matrix(0.1365 0.0060 0.0289 0.0454 738.2 203.1)">H8</text><text transform="matrix(0.1379 0.0061 0.0351 0.0459 765.6 204.4)">H2</text><text transform="matrix(0.1394 0.0061 0.0414 0.0464 793.3 205.6)">H4</text><text transform="matrix(0.1409 0.0062 0.0479 0.0470 821.4 206.8)">H6</text><text transform="matrix(0.1201 0.0054 -0.0500 0.0405 365.6 190.9)">A3</text><text transform="matrix(0.1213 0.0055 -0.0453 0.0410 389.8 192.0)">A5</text><text transform="matrix(0.1225 0.0055 -0.0404 0.0414 414.1 193.1)">A7</text><text transform="matrix(0.1238 0.0056 -0.0354 0.0418 438.8 194.2)">A1</text><text transform="matrix(0.1250 0.0056 -0.0303 0.0423 463.7 195.3)">A3</text><text transform="matrix(0.1263 0.0057 -0.0251 0.0427 488.8 196.4)">A5</text><text transform="matrix(0.1276 0.0057 -0.0198 0.0432 514.2 197.6)">A7</text><text transform="matrix(0.1290 0.0058 -0.0143 0.0437 539.8 198.7)">A1</text><text transform="matrix(0.1303 0.0059 -0.0088 0.0442 565.8 199.9)">A3</text><text transform="matrix(0.1317 0.0059 -0.0031 0.0446 592.0 201.1)">A5</text><text transform="matrix(0.1331 0.0060 0.0026 0.0451 618.4 202.3)">A7</text><text transform="matrix(0.1345 0.0060 0.0085 0.0456 645.2 203.5)">A1</text><text transform="matrix(0.1359 0.0061 0.0146 0.0462 672.2 204.7)">A3</text><text transform="matrix(0.1374 0.0062 0.0207 0.0467 699.6 205.9)">A5</text><text transform="matrix(0.1389 0.0062 0.0270 0.0472 727.2 207.2)">A7</text><text transform="matrix(0.1404 0.0063 0.0334 0.0477 755.1 208.4)">A1</text><text transform="matrix(0.1419 0.0064 0.0400 0.0483 783.3 209.7)">A3</text><text transform="matrix(0.1435 0.0064 0.0467 0.0488 811.9 211.0)">A5</text><text transform="matrix(0.1171 0.0054 -0.0734 0.0403 252.7 190.1)">B2</text><text transform="matrix(0.1182 0.0054 -0.0688 0.0407 276.3 191.2)">B4</text><text transform="matrix(0.1194 0.0055 -0.0642 0.0411 300.0 192.3)">B6</text><text transform="matrix(0.1206 0.0055 -0.0595 0.0416 324.0 193.4)">B8</text><text transform="matrix(0.1219 0.0056 -0.0546 0.0420 348.3 194.5)">B2</text><text transform="matrix(0.1231 0.0056 -0.0497 0.0425 372.8 195.6)">B4</text><text transform="matrix(0.1244 0.0057 -0.0447 0.0430 397.6 196.7)">B6</text><text transform="matrix(0.1257 0.0058 -0.0395 0.0434 422.6 197.9)">B8</text><text transform="matrix(0.1270 0.0058 -0.0343 0.0439 447.8 199.1)">B2</text><text transform="matrix(0.1283 0.0059 -0.0289 0.0444 473.4 200.2)">B4</text><text transform="matrix(0.1297 0.0059 -0.0234 0.0449 499.2 201.4)">B6</text><text transform="matrix(0.1311 0.0060 -0.0178 0.0454 525.2 202.6)">B8</text><text transform="matrix(0.1325 0.0061 -0.0121 0.0459 551.6 203.8)">B2</text><text transform="matrix(0.1339 0.0061 -0.0063 0.0464 578.2 205.0)">B4</text><text transform="matrix(0.1353 0.0062 -0.0003 0.0469 605.1 206.3)">B6</text><text transform="matrix(0.1368 0.0063 0.0058 0.0475 632.4 207.5)">B8</text><text transform="matrix(0.1383 0.0063 0.0121 0.0480 659.9 208.8)">B2</text><text transform="matrix(0.1398 0.0064 0.0184 0.0485 687.7 210.1)">B4</text><text transform="matrix(0.1413 0.0065 0.0249 0.0491 715.8 211.3)">B6</text><text transform="matrix(0.1429 0.0066 0.0316 0.0497 744.2 212.6)">B8</text><text transform="matrix(0.1445 0.0066 0.0384 0.0503 772.9 214.0)">B2</text><text transform="matrix(0.1461 0.0067 0.0453 0.0508 802.0 215.3)">B4</text><text transform="matrix(0.1200 0.0056 -0.0742 0.0422 257.2 194.8)">C3</text><text transform="matrix(0.1212 0.0057 -0.0694 0.0427 281.3 195.9)">C5</text><text transform="matrix(0.1224 0.0057 -0.0645 0.0432 305.7 197.0)">C7</text><text transform="matrix(0.1237 0.0058 -0.0596 0.0436 330.3 198.2)">C1</text><text transform="matrix(0.1250 0.0059 -0.0545 0.0441 355.2 199.4)">C3</text><text transform="matrix(0.1263 0.0059 -0.0493 0.0446 380.3 200.5)">C5</text><text transform="matrix(0.1277 0.0060 -0.0440 0.0451 405.7 201.7)">C7</text><text transform="matrix(0.1290 0.0060 -0.0386 0.0456 431.4 202.9)">C1</text><text transform="matrix(0.1304 0.0061 -0.0330 0.0461 457.3 204.1)">C3</text><text transform="matrix(0.1318 0.0062 -0.0274 0.0466 483.6 205.4)">C5</text><text transform="matrix(0.1332 0.0062 -0.0216 0.0472 510.1 206.6)">C7</text><text transform="matrix(0.1347 0.0063 -0.0157 0.0477 536.8 207.9)">C1</text><text transform="matrix(0.1362 0.0064 -0.0096 0.0482 563.9 209.1)">C3</text><text transform="matrix(0.1377 0.0064 -0.0034 0.0488 591.3 210.4)">C5</text><text transform="matrix(0.1392 0.0065 0.0029 0.0494 619.0 211.7)">C7</text><text transform="matrix(0.1407 0.0066 0.0093 0.0499 647.0 213.0)">C1</text><text transform="matrix(0.1423 0.0067 0.0159 0.0505 675.3 214.4)">C3</text><text transform="matrix(0.1439 0.0067 0.0227 0.0511 703.9 215.7)">C5</text><text transform="matrix(0.1455 0.0068 0.0296 0.0517 732.8 217.0)">C7</text><text transform="matrix(0.1472 0.0069 0.0366 0.0523 762.1 218.4)">C1</text><text transform="matrix(0.1489 0.0070 0.0438 0.0530 791.7 219.8)">C3</text><text transform="matrix(0.1506 0.0070 0.0512 0.0536 821.6 221.2)">C5</text><text transform="matrix(0.1217 0.0058 -0.0799 0.0438 237.4 198.5)">D2</text><text transform="matrix(0.1230 0.0059 -0.0750 0.0443 261.9 199.7)">D4</text><text transform="matrix(0.1243 0.0059 -0.0699 0.0448 286.6 200.9)">D6</text><text transform="matrix(0.1256 0.0060 -0.0648 0.0453 311.6 202.1)">D8</text><text transform="matrix(0.1270 0.0061 -0.0596 0.0458 336.9 203.3)">D2</text><text transform="matrix(0.1283 0.0061 -0.0542 0.0463 362.4 204.5)">D4</text><text transform="matrix(0.1297 0.0062 -0.0488 0.0469 388.2 205.7)">D6</text><text transform="matrix(0.1311 0.0063 -0.0432 0.0474 414.3 207.0)">D8</text><text transform="matrix(0.1325 0.0063 -0.0374 0.0480 440.7 208.2)">D2</text><text transform="matrix(0.1340 0.0064 -0.0316 0.0485 467.3 209.5)">D4</text><text transform="matrix(0.1355 0.0065 -0.0256 0.0491 494.3 210.8)">D6</text><text transform="matrix(0.1370 0.0065 -0.0195 0.0496 521.5 212.1)">D8</text><text transform="matrix(0.1385 0.0066 -0.0132 0.0502 549.1 213.4)">D2</text><text transform="matrix(0.1401 0.0067 -0.0068 0.0508 576.9 214.7)">D4</text><text transform="matrix(0.1416 0.0068 -0.0003 0.0514 605.1 216.1)">D6</text><text transform="matrix(0.1432 0.0068 0.0064 0.0520 633.6 217.5)">D8</text><text transform="matrix(0.1449 0.0069 0.0132 0.0526 662.4 218.8)">D2</text><text transform="matrix(0.1465 0.0070 0.0202 0.0533 691.5 220.2)">D4</text><text transform="matrix(0.1482 0.0071 0.0274 0.0539 721.0 221.6)">D6</text><text transform="matrix(0.1500 0.0072 0.0347 0.0546 750.8 223.1)">D8</text><text transform="matrix(0.1517 0.0073 0.0422 0.0552 781.0 224.5)">D2</text><text transform="matrix(0.1535 0.0073 0.0499 0.0559 811.5 226.0)">D4</text><text transform="matrix(0.1249 0.0061 -0.0809 0.0461 241.7 203.6)">E3</text><text transform="matrix(0.1262 0.0062 -0.0757 0.0466 266.8 204.8)">E5</text><text transform="matrix(0.1276 0.0062 -0.0705 0.0471 292.2 206.1)">E7</text><text transform="matrix(0.1290 0.0063 -0.0651 0.0477 317.9 207.3)">E1</text><text transform="matrix(0.1304 0.0064 -0.0595 0.0482 343.8 208.6)">E3</text><text transform="matrix(0.1318 0.0064 -0.0539 0.0488 370.0 209.9)">E5</text><text transform="matrix(0.1333 0.0065 -0.0481 0.0493 396.5 211.2)">E7</text><text transform="matrix(0.1347 0.0066 -0.0422 0.0499 423.3 212.5)">E1</text><text transform="matrix(0.1363 0.0067 -0.0361 0.0505 450.4 213.8)">E3</text><text transform="matrix(0.1378 0.0067 -0.0300 0.0511 477.8 215.1)">E5</text><text transform="matrix(0.1394 0.0068 -0.0236 0.0517 505.5 216.5)">E7</text><text transform="matrix(0.1409 0.0069 -0.0172 0.0523 533.6 217.9)">E1</text><text transform="matrix(0.1426 0.0070 -0.0105 0.0529 561.9 219.2)">E3</text><text transform="matrix(0.1442 0.0070 -0.0038 0.0536 590.6 220.6)">E5</text><text transform="matrix(0.1459 0.0071 0.0032 0.0542 619.6 222.1)">E7</text><text transform="matrix(0.1476 0.0072 0.0103 0.0549 648.9 223.5)">E1</text><text transform="matrix(0.1493 0.0073 0.0175 0.0556 678.6 224.9)">E3</text><text transform="matrix(0.1511 0.0074 0.0249 0.0562 708.7 226.4)">E5</text><text transform="matrix(0.1528 0.0075 0.0326 0.0569 739.0 227.9)">E7</text><text transform="matrix(0.1547 0.0076 0.0403 0.0576 769.8 229.4)">E1</text><text transform="matrix(0.1565 0.0076 0.0483 0.0584 800.9 230.9)">E3</text><text transform="matrix(0.1282 0.0064 -0.0819 0.0485 246.2 209.0)">F4</text><text transform="matrix(0.1296 0.0065 -0.0765 0.0490 272.0 210.2)">F6</text><text transform="matrix(0.1310 0.0065 -0.0709 0.0496 298.1 211.5)">F8</text><text transform="matrix(0.1325 0.0066 -0.0652 0.0502 324.4 212.9)">F2</text><text transform="matrix(0.1340 0.0067 -0.0594 0.0508 351.1 214.2)">F4</text><text transform="matrix(0.1355 0.0068 -0.0534 0.0514 378.0 215.5)">F6</text><text transform="matrix(0.1370 0.0068 -0.0473 0.0520 405.3 216.9)">F8</text><text transform="matrix(0.1386 0.0069 -0.0411 0.0526 432.8 218.3)">F2</text><text transform="matrix(0.1402 0.0070 -0.0347 0.0532 460.7 219.7)">F4</text><text transform="matrix(0.1418 0.0071 -0.0281 0.0539 488.9 221.1)">F6</text><text transform="matrix(0.1435 0.0072 -0.0214 0.0545 517.4 222.5)">F8</text><text transform="matrix(0.1451 0.0073 -0.0146 0.0552 546.3 223.9)">F2</text><text transform="matrix(0.1468 0.0073 -0.0075 0.0559 575.5 225.4)">F4</text><text transform="matrix(0.1486 0.0074 -0.0003 0.0566 605.0 226.9)">F6</text><text transform="matrix(0.1503 0.0075 0.0070 0.0573 634.9 228.4)">F8</text><text transform="matrix(0.1521 0.0076 0.0146 0.0580 665.2 229.9)">F2</text><text transform="matrix(0.1540 0.0077 0.0223 0.0587 695.8 231.4)">F4</text><text transform="matrix(0.1558 0.0078 0.0302 0.0595 726.8 233.0)">F6</text><text transform="matrix(0.1577 0.0079 0.0383 0.0602 758.1 234.5)">F8</text><text transform="matrix(0.1597 0.0080 0.0466 0.0610 789.9 236.1)">F2</text><text transform="matrix(0.1617 0.0081 0.0551 0.0618 822.0 237.7)">F4</text><text transform="matrix(0.1316 0.0067 -0.0830 0.0510 251.0 214.6)">G5</text><text transform="matrix(0.1331 0.0068 -0.0772 0.0516 277.5 215.9)">G7</text><text transform="matrix(0.1347 0.0069 -0.0713 0.0523 304.2 217.3)">G1</text><text transform="matrix(0.1362 0.0070 -0.0653 0.0529 331.3 218.7)">G3</text><text transform="matrix(0.1378 0.0070 -0.0592 0.0535 358.7 220.1)">G5</text><text transform="matrix(0.1394 0.0071 -0.0528 0.0542 386.4 221.5)">G7</text><text transform="matrix(0.1410 0.0072 -0.0464 0.0548 414.5 222.9)">G1</text><text transform="matrix(0.1427 0.0073 -0.0397 0.0555 442.8 224.4)">G3</text><text transform="matrix(0.1443 0.0074 -0.0330 0.0562 471.5 225.9)">G5</text><text transform="matrix(0.1461 0.0075 -0.0260 0.0569 500.6 227.3)">G7</text><text transform="matrix(0.1478 0.0076 -0.0189 0.0576 530.0 228.8)">G1</text><text transform="matrix(0.1496 0.0076 -0.0116 0.0583 559.7 230.4)">G3</text><text transform="matrix(0.1514 0.0077 -0.0042 0.0591 589.8 231.9)">G5</text><text transform="matrix(0.1532 0.0078 0.0035 0.0598 620.3 233.5)">G7</text><text transform="matrix(0.1551 0.0079 0.0113 0.0606 651.1 235.0)">G1</text><text transform="matrix(0.1570 0.0080 0.0194 0.0614 682.3 236.6)">G3</text><text transform="matrix(0.1590 0.0081 0.0276 0.0622 713.9 238.2)">G5</text><text transform="matrix(0.1609 0.0082 0.0360 0.0630 745.9 239.9)">G7</text><text transform="matrix(0.1630 0.0083 0.0446 0.0638 778.3 241.5)">G1</text><text transform="matrix(0.1650 0.0084 0.0535 0.0646 811.1 243.2)">G3</text><text transform="matrix(0.1353 0.0071 -0.0840 0.0538 256.0 220.5)">H6</text><text transform="matrix(0.1369 0.0072 -0.0779 0.0545 283.2 221.9)">H8</text><text transform="matrix(0.1385 0.0072 -0.0717 0.0552 310.7 223.4)">H2</text><text transform="matrix(0.1401 0.0073 -0.0653 0.0558 338.6 224.8)">H4</text><text transform="matrix(0.1418 0.0074 -0.0588 0.0565 366.8 226.3)">H6</text><text transform="matrix(0.1435 0.0075 -0.0521 0.0572 395.3 227.8)">H8</text><text transform="matrix(0.1452 0.0076 -0.0452 0.0579 424.2 229.3)">H2</text><text transform="matrix(0.1470 0.0077 -0.0382 0.0587 453.4 230.8)">H4</text><text transform="matrix(0.1488 0.0078 -0.0310 0.0594 483.0 232.4)">H6</text><text transform="matrix(0.1506 0.0079 -0.0236 0.0602 512.9 234.0)">H8</text><text transform="matrix(0.1524 0.0080 -0.0161 0.0610 543.2 235.5)">H2</text><text transform="matrix(0.1543 0.0081 -0.0083 0.0617 573.9 237.1)">H4</text><text transform="matrix(0.1562 0.0082 -0.0004 0.0625 604.9 238.8)">H6</text><text transform="matrix(0.1582 0.0083 0.0078 0.0634 636.4 240.4)">H8</text><text transform="matrix(0.1602 0.0084 0.0161 0.0642 668.2 242.1)">H2</text><text transform="matrix(0.1622 0.0085 0.0247 0.0650 700.5 243.8)">H4</text><text transform="matrix(0.1643 0.0086 0.0335 0.0659 733.1 245.5)">H6</text><text transform="matrix(0.1664 0.0087 0.0425 0.0668 766.2 247.2)">H8</text><text transform="matrix(0.1685 0.0088 0.0517 0.0677 799.7 249.0)">H2</text><text transform="matrix(0.1392 0.0075 -0.0850 0.0569 261.3 226.8)">A7</text><text transform="matrix(0.1409 0.0076 -0.0786 0.0576 289.3 228.3)">A1</text><text transform="matrix(0.1426 0.0076 -0.0720 0.0583 317.6 229.8)">A3</text><text transform="matrix(0.1443 0.0077 -0.0652 0.0590 346.3 231.3)">A5</text><text transform="matrix(0.1461 0.0078 -0.0583 0.0598 375.3 232.9)">A7</text><text transform="matrix(0.1479 0.0079 -0.0512 0.0606 404.7 234.5)">A1</text><text transform="matrix(0.1497 0.0080 -0.0439 0.0613 434.5 236.1)">A3</text><text transform="matrix(0.1515 0.0081 -0.0364 0.0621 464.6 237.7)">A5</text><text transform="matrix(0.1534 0.0082 -0.0288 0.0629 495.1 239.3)">A7</text><text transform="matrix(0.1554 0.0083 -0.0209 0.0638 526.0 241.0)">A1</text><text transform="matrix(0.1573 0.0084 -0.0129 0.0646 557.3 242.6)">A3</text><text transform="matrix(0.1593 0.0085 -0.0046 0.0655 588.9 244.3)">A5</text><text transform="matrix(0.1614 0.0086 0.0039 0.0663 621.0 246.1)">A7</text><text transform="matrix(0.1635 0.0088 0.0126 0.0672 653.5 247.8)">A1</text><text transform="matrix(0.1656 0.0089 0.0215 0.0681 686.4 249.6)">A3</text><text transform="matrix(0.1677 0.0090 0.0306 0.0691 719.7 251.3)">A5</text><text transform="matrix(0.1700 0.0091 0.0400 0.0700 753.5 253.2)">A7</text><text transform="matrix(0.1722 0.0092 0.0497 0.0710 787.7 255.0)">A1</text><text transform="matrix(0.1745 0.0094 0.0596 0.0720 822.4 256.8)">A3</text><text transform="matrix(0.1416 0.0078 -0.0927 0.0594 238.3 231.8)">B6</text><text transform="matrix(0.1433 0.0079 -0.0860 0.0601 266.8 233.4)">B8</text><text transform="matrix(0.1451 0.0080 -0.0792 0.0609 295.7 235.0)">B2</text><text transform="matrix(0.1469 0.0081 -0.0722 0.0617 324.9 236.6)">B4</text><text transform="matrix(0.1487 0.0082 -0.0650 0.0625 354.4 238.2)">B6</text><text transform="matrix(0.1506 0.0083 -0.0577 0.0633 384.4 239.8)">B8</text><text transform="matrix(0.1525 0.0084 -0.0501 0.0642 414.7 241.5)">B2</text><text transform="matrix(0.1544 0.0085 -0.0423 0.0650 445.4 243.2)">B4</text><text transform="matrix(0.1564 0.0086 -0.0344 0.0659 476.5 244.9)">B6</text><text transform="matrix(0.1584 0.0087 -0.0262 0.0668 507.9 246.6)">B8</text><text transform="matrix(0.1605 0.0088 -0.0178 0.0677 539.8 248.4)">B2</text><text transform="matrix(0.1626 0.0089 -0.0092 0.0686 572.1 250.2)">B4</text><text transform="matrix(0.1647 0.0090 -0.0004 0.0695 604.9 252.0)">B6</text><text transform="matrix(0.1669 0.0092 0.0086 0.0705 638.0 253.8)">B8</text><text transform="matrix(0.1691 0.0093 0.0179 0.0715 671.6 255.6)">B2</text><text transform="matrix(0.1714 0.0094 0.0275 0.0724 705.7 257.5)">B4</text><text transform="matrix(0.1737 0.0095 0.0373 0.0735 740.2 259.4)">B6</text><text transform="matrix(0.1760 0.0097 0.0474 0.0745 775.1 261.3)">B8</text><text transform="matrix(0.1784 0.0098 0.0577 0.0756 810.6 263.3)">B2</text><text transform="matrix(0.1459 0.0082 -0.0941 0.0629 243.4 238.7)">C7</text><text transform="matrix(0.1477 0.0083 -0.0870 0.0637 272.7 240.4)">C1</text><text transform="matrix(0.1496 0.0084 -0.0797 0.0646 302.5 242.1)">C3</text><text transform="matrix(0.1515 0.0085 -0.0723 0.0654 332.6 243.8)">C5</text><text transform="matrix(0.1534 0.0086 -0.0647 0.0663 363.1 245.5)">C7</text><text transform="matrix(0.1554 0.0088 -0.0568 0.0672 393.9 247.2)">C1</text><text transform="matrix(0.1574 0.0089 -0.0488 0.0681 425.2 249.0)">C3</text><text transform="matrix(0.1595 0.0090 -0.0405 0.0690 456.9 250.8)">C5</text><text transform="matrix(0.1616 0.0091 -0.0320 0.0700 489.0 252.6)">C7</text><text transform="matrix(0.1638 0.0092 -0.0233 0.0710 521.6 254.4)">C1</text><text transform="matrix(0.1659 0.0094 -0.0143 0.0719 554.5 256.3)">C3</text><text transform="matrix(0.1682 0.0095 -0.0051 0.0729 588.0 258.2)">C5</text><text transform="matrix(0.1704 0.0096 0.0043 0.0740 621.8 260.1)">C7</text><text transform="matrix(0.1728 0.0097 0.0140 0.0750 656.1 262.0)">C1</text><text transform="matrix(0.1751 0.0099 0.0240 0.0761 690.9 264.0)">C3</text><text transform="matrix(0.1776 0.0100 0.0342 0.0772 726.2 265.9)">C5</text><text transform="matrix(0.1800 0.0101 0.0448 0.0783 762.0 268.0)">C7</text><text transform="matrix(0.1826 0.0103 0.0556 0.0794 798.2 270.0)">C1</text><text transform="matrix(0.1504 0.0087 -0.0955 0.0667 248.7 246.1)">D8</text><text transform="matrix(0.1524 0.0088 -0.0879 0.0676 279.0 247.8)">D2</text><text transform="matrix(0.1544 0.0089 -0.0802 0.0686 309.7 249.6)">D4</text><text transform="matrix(0.1564 0.0090 -0.0723 0.0695 340.7 251.4)">D6</text><text transform="matrix(0.1585 0.0092 -0.0641 0.0705 372.2 253.2)">D8</text><text transform="matrix(0.1606 0.0093 -0.0558 0.0714 404.1 255.1)">D2</text><text transform="matrix(0.1627 0.0094 -0.0472 0.0724 436.4 256.9)">D4</text><text transform="matrix(0.1649 0.0095 -0.0383 0.0734 469.2 258.8)">D6</text><text transform="matrix(0.1672 0.0097 -0.0293 0.0745 502.4 260.7)">D8</text><text transform="matrix(0.1694 0.0098 -0.0199 0.0755 536.1 262.7)">D2</text><text transform="matrix(0.1718 0.0099 -0.0103 0.0766 570.2 264.7)">D4</text><text transform="matrix(0.1742 0.0101 -0.0005 0.0777 604.8 266.7)">D6</text><text transform="matrix(0.1766 0.0102 0.0097 0.0789 639.9 268.7)">D8</text><text transform="matrix(0.1791 0.0104 0.0201 0.0800 675.4 270.7)">D2</text><text transform="matrix(0.1816 0.0105 0.0308 0.0812 711.5 272.8)">D4</text><text transform="matrix(0.1842 0.0107 0.0418 0.0824 748.1 275.0)">D6</text><text transform="matrix(0.1869 0.0108 0.0532 0.0836 785.2 277.1)">D8</text><text transform="matrix(0.1896 0.0110 0.0648 0.0849 822.8 279.3)">D2</text><text transform="matrix(0.1552 0.0092 -0.0968 0.0709 254.4 253.8)">E1</text><text transform="matrix(0.1573 0.0094 -0.0888 0.0719 285.6 255.7)">E3</text><text transform="matrix(0.1594 0.0095 -0.0806 0.0729 317.3 257.6)">E5</text><text transform="matrix(0.1616 0.0096 -0.0721 0.0740 349.4 259.5)">E7</text><text transform="matrix(0.1638 0.0097 -0.0634 0.0750 381.9 261.4)">E1</text><text transform="matrix(0.1661 0.0099 -0.0545 0.0761 414.9 263.4)">E3</text><text transform="matrix(0.1684 0.0100 -0.0453 0.0772 448.4 265.4)">E5</text><text transform="matrix(0.1707 0.0101 -0.0358 0.0783 482.3 267.4)">E7</text><text transform="matrix(0.1731 0.0103 -0.0261 0.0794 516.6 269.4)">E1</text><text transform="matrix(0.1755 0.0104 -0.0161 0.0806 551.5 271.5)">E3</text><text transform="matrix(0.1780 0.0106 -0.0058 0.0818 586.9 273.6)">E5</text><text transform="matrix(0.1806 0.0107 0.0048 0.0830 622.7 275.7)">E7</text><text transform="matrix(0.1832 0.0109 0.0157 0.0843 659.1 277.9)">E1</text><text transform="matrix(0.1859 0.0110 0.0270 0.0855 696.0 280.1)">E3</text><text transform="matrix(0.1886 0.0112 0.0385 0.0868 733.5 282.3)">E5</text><text transform="matrix(0.1914 0.0114 0.0504 0.0882 771.5 284.6)">E7</text><text transform="matrix(0.1942 0.0115 0.0626 0.0895 810.0 286.9)">E1</text><text transform="matrix(0.1604 0.0098 -0.0982 0.0755 260.4 262.1)">F2</text><text transform="matrix(0.1626 0.0099 -0.0896 0.0766 292.7 264.1)">F4</text><text transform="matrix(0.1649 0.0101 -0.0808 0.0777 325.4 266.1)">F6</text><text transform="matrix(0.1672 0.0102 -0.0718 0.0789 358.6 268.1)">F8</text><text transform="matrix(0.1695 0.0104 -0.0625 0.0800 392.3 270.2)">F2</text><text transform="matrix(0.1719 0.0105 -0.0529 0.0812 426.4 272.3)">F4</text><text transform="matrix(0.1744 0.0107 -0.0430 0.0824 461.1 274.4)">F6</text><text transform="matrix(0.1769 0.0108 -0.0328 0.0836 496.2 276.5)">F8</text><text transform="matrix(0.1795 0.0110 -0.0224 0.0849 531.8 278.7)">F2</text><text transform="matrix(0.1821 0.0111 -0.0116 0.0862 568.0 280.9)">F4</text><text transform="matrix(0.1848 0.0113 -0.0005 0.0875 604.7 283.2)">F6</text><text transform="matrix(0.1875 0.0115 0.0109 0.0888 641.9 285.4)">F8</text><text transform="matrix(0.1903 0.0116 0.0227 0.0902 679.7 287.7)">F2</text><text transform="matrix(0.1932 0.0118 0.0348 0.0916 718.0 290.1)">F4</text><text transform="matrix(0.1961 0.0120 0.0473 0.0931 757.0 292.5)">F6</text><text transform="matrix(0.1991 0.0122 0.0601 0.0945 796.5 294.9)">F8</text><text transform="matrix(0.1636 0.0103 -0.1084 0.0794 233.9 268.8)">G1</text><text transform="matrix(0.1659 0.0104 -0.0995 0.0806 266.8 270.9)">G3</text><text transform="matrix(0.1682 0.0106 -0.0904 0.0818 300.2 273.0)">G5</text><text transform="matrix(0.1707 0.0107 -0.0810 0.0830 334.1 275.2)">G7</text><text transform="matrix(0.1731 0.0109 -0.0712 0.0843 368.5 277.3)">G1</text><text transform="matrix(0.1756 0.0111 -0.0612 0.0855 403.4 279.5)">G3</text><text transform="matrix(0.1782 0.0112 -0.0509 0.0868 438.8 281.7)">G5</text><text transform="matrix(0.1809 0.0114 -0.0403 0.0882 474.7 284.0)">G7</text><text transform="matrix(0.1836 0.0116 -0.0294 0.0895 511.1 286.3)">G1</text><text transform="matrix(0.1863 0.0117 -0.0181 0.0909 548.1 288.6)">G3</text><text transform="matrix(0.1891 0.0119 -0.0065 0.0924 585.6 291.0)">G5</text><text transform="matrix(0.1920 0.0121 0.0055 0.0938 623.8 293.4)">G7</text><text transform="matrix(0.1950 0.0123 0.0178 0.0953 662.5 295.8)">G1</text><text transform="matrix(0.1980 0.0125 0.0305 0.0968 701.8 298.3)">G3</text><text transform="matrix(0.2011 0.0127 0.0437 0.0984 741.7 300.8)">G5</text><text transform="matrix(0.2042 0.0129 0.0572 0.1000 782.2 303.4)">G7</text><text transform="matrix(0.2075 0.0131 0.0711 0.1016 823.4 305.9)">G1</text><text transform="matrix(0.1693 0.0110 -0.1104 0.0849 239.6 278.1)">H2</text><text transform="matrix(0.1718 0.0111 -0.1008 0.0862 273.7 280.3)">H4</text><text transform="matrix(0.1743 0.0113 -0.0910 0.0875 308.3 282.6)">H6</text><text transform="matrix(0.1769 0.0115 -0.0809 0.0889 343.4 284.9)">H8</text><text transform="matrix(0.1795 0.0116 -0.0705 0.0902 379.0 287.2)">H2</text><text transform="matrix(0.1822 0.0118 -0.0597 0.0917 415.2 289.5)">H4</text><text transform="matrix(0.1850 0.0120 -0.0486 0.0931 451.9 291.9)">H6</text><text transform="matrix(0.1878 0.0122 -0.0371 0.0946 489.2 294.3)">H8</text><text transform="matrix(0.1907 0.0124 -0.0253 0.0961 527.1 296.8)">H2</text><text transform="matrix(0.1937 0.0126 -0.0132 0.0976 565.5 299.3)">H4</text><text transform="matrix(0.1968 0.0128 -0.0006 0.0992 604.6 301.8)">H6</text><text transform="matrix(0.1999 0.0130 0.0124 0.1008 644.2 304.4)">H8</text><text transform="matrix(0.2031 0.0132 0.0257 0.1025 684.5 307.0)">H2</text><text transform="matrix(0.2063 0.0134 0.0395 0.1042 725.5 309.6)">H4</text><text transform="matrix(0.2097 0.0136 0.0538 0.1059 767.0 312.3)">H6</text><text transform="matrix(0.2131 0.0138 0.0685 0.1077 809.3 315.1)">H8</text><text transform="matrix(0.1754 0.0117 -0.1123 0.0910 245.7 288.0)">A3</text><text transform="matrix(0.1781 0.0119 -0.1021 0.0924 281.0 290.4)">A5</text><text transform="matrix(0.1808 0.0121 -0.0915 0.0938 316.9 292.8)">A7</text><text transform="matrix(0.1836 0.0123 -0.0806 0.0953 353.3 295.2)">A1</text><text transform="matrix(0.1864 0.0125 -0.0694 0.0969 390.3 297.7)">A3</text><text transform="matrix(0.1893 0.0127 -0.0577 0.0984 427.9 300.2)">A5</text><text transform="matrix(0.1923 0.0129 -0.0458 0.1000 466.1 302.8)">A7</text><text transform="matrix(0.1954 0.0131 -0.0334 0.1017 504.8 305.4)">A1</text><text transform="matrix(0.1985 0.0133 -0.0206 0.1034 544.2 308.0)">A3</text><text transform="matrix(0.2017 0.0135 -0.0074 0.1051 584.3 310.7)">A5</text><text transform="matrix(0.2050 0.0137 0.0062 0.1069 624.9 313.4)">A7</text><text transform="matrix(0.2084 0.0139 0.0203 0.1087 666.3 316.2)">A1</text><text transform="matrix(0.2118 0.0142 0.0349 0.1105 708.3 319.0)">A3</text><text transform="matrix(0.2154 0.0144 0.0499 0.1124 751.0 321.8)">A5</text><text transform="matrix(0.2190 0.0146 0.0654 0.1144 794.4 324.7)">A7</text><text transform="matrix(0.1820 0.0126 -0.1143 0.0977 252.2 298.7)">B4</text><text transform="matrix(0.1849 0.0128 -0.1032 0.0993 288.9 301.2)">B6</text><text transform="matrix(0.1878 0.0130 -0.0919 0.1009 326.2 303.8)">B8</text><text transform="matrix(0.1908 0.0132 -0.0801 0.1026 364.0 306.4)">B2</text><text transform="matrix(0.1939 0.0134 -0.0679 0.1043 402.5 309.1)">B4</text><text transform="matrix(0.1970 0.0136 -0.0553 0.1060 441.6 311.8)">B6</text><text transform="matrix(0.2002 0.0138 -0.0423 0.1078 481.3 314.5)">B8</text><text transform="matrix(0.2035 0.0141 -0.0289 0.1096 521.7 317.3)">B2</text><text transform="matrix(0.2069 0.0143 -0.0150 0.1115 562.7 320.1)">B4</text><text transform="matrix(0.2104 0.0145 -0.0007 0.1135 604.4 323.0)">B6</text><text transform="matrix(0.2140 0.0148 0.0142 0.1154 646.9 325.9)">B8</text><text transform="matrix(0.2176 0.0150 0.0295 0.1175 690.0 328.9)">B2</text><text transform="matrix(0.2214 0.0153 0.0454 0.1196 733.9 331.9)">B4</text><text transform="matrix(0.2252 0.0156 0.0618 0.1217 778.6 335.0)">B6</text><text transform="matrix(0.2291 0.0158 0.0788 0.1239 824.0 338.2)">B8</text><text transform="matrix(0.1891 0.0135 -0.1162 0.1052 259.2 310.1)">C5</text><text transform="matrix(0.1922 0.0137 -0.1043 0.1069 297.4 312.8)">C7</text><text transform="matrix(0.1954 0.0139 -0.0920 0.1088 336.1 315.6)">C1</text><text transform="matrix(0.1986 0.0142 -0.0792 0.1106 375.5 318.4)">C3</text><text transform="matrix(0.2019 0.0144 -0.0660 0.1125 415.6 321.3)">C5</text><text transform="matrix(0.2053 0.0147 -0.0524 0.1145 456.3 324.2)">C7</text><text transform="matrix(0.2088 0.0149 -0.0382 0.1165 497.7 327.1)">C1</text><text transform="matrix(0.2124 0.0152 -0.0236 0.1186 539.8 330.2)">C3</text><text transform="matrix(0.2161 0.0154 -0.0085 0.1207 582.7 333.2)">C5</text><text transform="matrix(0.2199 0.0157 0.0072 0.1229 626.3 336.3)">C7</text><text transform="matrix(0.2237 0.0160 0.0234 0.1251 670.6 339.5)">C1</text><text transform="matrix(0.2277 0.0163 0.0402 0.1274 715.8 342.7)">C3</text><text transform="matrix(0.2318 0.0165 0.0576 0.1297 761.7 346.0)">C5</text><text transform="matrix(0.2360 0.0168 0.0756 0.1321 808.5 349.3)">C7</text><text transform="matrix(0.1968 0.0145 -0.1181 0.1136 266.8 322.5)">D6</text><text transform="matrix(0.2001 0.0148 -0.1052 0.1155 306.5 325.4)">D8</text><text transform="matrix(0.2036 0.0150 -0.0918 0.1176 346.9 328.4)">D2</text><text transform="matrix(0.2071 0.0153 -0.0779 0.1197 387.9 331.4)">D4</text><text transform="matrix(0.2107 0.0156 -0.0636 0.1218 429.7 334.5)">D6</text><text transform="matrix(0.2144 0.0158 -0.0487 0.1240 472.2 337.6)">D8</text><text transform="matrix(0.2182 0.0161 -0.0333 0.1263 515.5 340.8)">D2</text><text transform="matrix(0.2221 0.0164 -0.0173 0.1286 559.5 344.1)">D4</text><text transform="matrix(0.2261 0.0167 -0.0008 0.1310 604.3 347.4)">D6</text><text transform="matrix(0.2302 0.0170 0.0164 0.1335 649.9 350.8)">D8</text><text transform="matrix(0.2344 0.0173 0.0342 0.1360 696.4 354.2)">D2</text><text transform="matrix(0.2388 0.0176 0.0526 0.1386 743.7 357.7)">D4</text><text transform="matrix(0.2432 0.0180 0.0717 0.1413 791.9 361.3)">D6</text><text transform="matrix(0.2016 0.0154 -0.1335 0.1208 234.3 332.7)">E5</text><text transform="matrix(0.2051 0.0157 -0.1199 0.1230 275.0 335.8)">E7</text><text transform="matrix(0.2088 0.0160 -0.1059 0.1252 316.4 339.0)">E1</text><text transform="matrix(0.2125 0.0163 -0.0913 0.1275 358.5 342.2)">E3</text><text transform="matrix(0.2163 0.0166 -0.0762 0.1299 401.4 345.5)">E5</text><text transform="matrix(0.2202 0.0169 -0.0605 0.1323 445.0 348.8)">E7</text><text transform="matrix(0.2243 0.0172 -0.0442 0.1348 489.5 352.2)">E1</text><text transform="matrix(0.2284 0.0175 -0.0274 0.1374 534.7 355.7)">E3</text><text transform="matrix(0.2327 0.0178 -0.0099 0.1400 580.8 359.2)">E5</text><text transform="matrix(0.2370 0.0182 0.0083 0.1427 627.8 362.8)">E7</text><text transform="matrix(0.2415 0.0185 0.0272 0.1455 675.7 366.5)">E1</text><text transform="matrix(0.2462 0.0189 0.0468 0.1484 724.4 370.2)">E3</text><text transform="matrix(0.2509 0.0192 0.0671 0.1513 774.1 374.0)">E5</text><text transform="matrix(0.2559 0.0196 0.0883 0.1544 824.8 377.9)">E7</text><text transform="matrix(0.2104 0.0167 -0.1364 0.1312 241.4 346.9)">F6</text><text transform="matrix(0.2142 0.0170 -0.1217 0.1336 283.9 350.2)">F8</text><text transform="matrix(0.2182 0.0173 -0.1063 0.1362 327.1 353.7)">F2</text><text transform="matrix(0.2222 0.0177 -0.0904 0.1388 371.1 357.2)">F4</text><text transform="matrix(0.2264 0.0180 -0.0738 0.1415 416.0 360.7)">F6</text><text transform="matrix(0.2307 0.0183 -0.0566 0.1442 461.7 364.4)">F8</text><text transform="matrix(0.2351 0.0187 -0.0388 0.1470 508.3 368.1)">F2</text><text transform="matrix(0.2396 0.0191 -0.0202 0.1500 555.7 371.9)">F4</text><text transform="matrix(0.2443 0.0194 -0.0009 0.1530 604.1 375.7)">F6</text><text transform="matrix(0.2491 0.0198 0.0191 0.1561 653.5 379.6)">F8</text><text transform="matrix(0.2540 0.0202 0.0400 0.1593 703.8 383.6)">F2</text><text transform="matrix(0.2592 0.0206 0.0617 0.1625 755.1 387.7)">F4</text><text transform="matrix(0.2644 0.0210 0.0842 0.1659 807.4 391.9)">F6</text><text transform="matrix(0.2199 0.0182 -0.1394 0.1429 249.1 362.3)">G7</text><text transform="matrix(0.2241 0.0185 -0.1232 0.1457 293.5 366.0)">G1</text><text transform="matrix(0.2284 0.0189 -0.1064 0.1486 338.8 369.7)">G3</text><text transform="matrix(0.2329 0.0193 -0.0889 0.1516 384.9 373.5)">G5</text><text transform="matrix(0.2374 0.0196 -0.0707 0.1546 431.9 377.4)">G7</text><text transform="matrix(0.2421 0.0200 -0.0518 0.1578 479.9 381.4)">G1</text><text transform="matrix(0.2470 0.0204 -0.0321 0.1610 528.8 385.4)">G3</text><text transform="matrix(0.2520 0.0208 -0.0116 0.1644 578.7 389.5)">G5</text><text transform="matrix(0.2571 0.0213 0.0098 0.1678 629.6 393.8)">G7</text><text transform="matrix(0.2624 0.0217 0.0320 0.1714 681.6 398.1)">G1</text><text transform="matrix(0.2679 0.0222 0.0552 0.1750 734.6 402.4)">G3</text><text transform="matrix(0.2735 0.0226 0.0793 0.1788 788.7 406.9)">G5</text><text transform="matrix(0.2304 0.0198 -0.1423 0.1563 257.6 379.1)">H8</text><text transform="matrix(0.2350 0.0202 -0.1246 0.1595 304.1 383.2)">H2</text><text transform="matrix(0.2397 0.0206 -0.1061 0.1628 351.6 387.2)">H4</text><text transform="matrix(0.2446 0.0211 -0.0868 0.1662 400.0 391.4)">H6</text><text transform="matrix(0.2496 0.0215 -0.0667 0.1697 449.4 395.7)">H8</text><text transform="matrix(0.2548 0.0219 -0.0457 0.1734 499.8 400.0)">H2</text><text transform="matrix(0.2602 0.0224 -0.0239 0.1771 551.3 404.4)">H4</text><text transform="matrix(0.2657 0.0229 -0.0011 0.1809 603.9 409.0)">H6</text><text transform="matrix(0.2714 0.0234 0.0227 0.1849 657.6 413.6)">H8</text><text transform="matrix(0.2773 0.0239 0.0475 0.1890 712.5 418.3)">H2</text><text transform="matrix(0.2833 0.0244 0.0734 0.1933 768.5 423.2)">H4</text><text transform="matrix(0.2896 0.0249 0.1004 0.1977 825.8 428.1)">H6</text><text transform="matrix(0.2419 0.0217 -0.1452 0.1717 266.8 397.6)">A1</text><text transform="matrix(0.2470 0.0222 -0.1256 0.1754 315.7 402.0)">A3</text><text transform="matrix(0.2522 0.0227 -0.1051 0.1792 365.6 406.5)">A5</text><text transform="matrix(0.2576 0.0232 -0.0838 0.1831 416.6 411.1)">A7</text><text transform="matrix(0.2631 0.0237 -0.0614 0.1872 468.6 415.7)">A1</text><text transform="matrix(0.2689 0.0242 -0.0381 0.1914 521.8 420.5)">A3</text><text transform="matrix(0.2748 0.0247 -0.0138 0.1957 576.2 425.4)">A5</text><text transform="matrix(0.2809 0.0253 0.0117 0.2002 631.7 430.4)">A7</text><text transform="matrix(0.2873 0.0258 0.0383 0.2048 688.6 435.5)">A1</text><text transform="matrix(0.2938 0.0264 0.0661 0.2096 746.7 440.7)">A3</text><text transform="matrix(0.3006 0.0270 0.0952 0.2145 806.1 446.1)">A5</text><text transform="matrix(0.2492 0.0234 -0.1687 0.1853 226.6 413.2)">B8</text><text transform="matrix(0.2546 0.0239 -0.1479 0.1895 276.9 417.9)">B2</text><text transform="matrix(0.2602 0.0245 -0.1262 0.1937 328.4 422.8)">B4</text><text transform="matrix(0.2660 0.0250 -0.1034 0.1982 381.0 427.7)">B6</text><text transform="matrix(0.2720 0.0256 -0.0796 0.2027 434.8 432.8)">B8</text><text transform="matrix(0.2782 0.0262 -0.0547 0.2074 489.8 437.9)">B2</text><text transform="matrix(0.2846 0.0268 -0.0286 0.2123 546.1 443.2)">B4</text><text transform="matrix(0.2912 0.0274 -0.0013 0.2174 603.7 448.6)">B6</text><text transform="matrix(0.2980 0.0280 0.0273 0.2226 662.6 454.2)">B8</text><text transform="matrix(0.3051 0.0287 0.0573 0.2280 722.9 459.8)">B2</text><text transform="matrix(0.3125 0.0294 0.0887 0.2336 784.7 465.7)">B4</text><text transform="matrix(0.2627 0.0259 -0.1736 0.2053 235.0 435.2)">C1</text><text transform="matrix(0.2687 0.0265 -0.1505 0.2101 288.2 440.4)">C3</text><text transform="matrix(0.2750 0.0271 -0.1262 0.2151 342.5 445.8)">C5</text><text transform="matrix(0.2814 0.0277 -0.1007 0.2203 398.2 451.2)">C7</text><text transform="matrix(0.2881 0.0284 -0.0741 0.2256 455.1 456.8)">C1</text><text transform="matrix(0.2950 0.0291 -0.0461 0.2312 513.4 462.6)">C3</text><text transform="matrix(0.3022 0.0298 -0.0167 0.2369 573.1 468.5)">C5</text><text transform="matrix(0.3096 0.0305 0.0142 0.2429 634.3 474.5)">C7</text><text transform="matrix(0.3173 0.0313 0.0465 0.2490 697.0 480.7)">C1</text><text transform="matrix(0.3253 0.0321 0.0806 0.2555 761.3 487.0)">C3</text><text transform="matrix(0.3336 0.0329 0.1163 0.2621 827.2 493.5)">C5</text><text transform="matrix(0.2778 0.0288 -0.1786 0.2287 244.4 459.6)">D2</text><text transform="matrix(0.2845 0.0295 -0.1526 0.2344 300.7 465.4)">D4</text><text transform="matrix(0.2915 0.0302 -0.1254 0.2402 358.3 471.3)">D6</text><text transform="matrix(0.2987 0.0309 -0.0967 0.2463 417.3 477.5)">D8</text><text transform="matrix(0.3062 0.0317 -0.0666 0.2526 477.8 483.7)">D2</text><text transform="matrix(0.3140 0.0325 -0.0349 0.2592 539.8 490.1)">D4</text><text transform="matrix(0.3221 0.0334 -0.0016 0.2660 603.4 496.7)">D6</text><text transform="matrix(0.3305 0.0342 0.0335 0.2731 668.6 503.5)">D8</text><text transform="matrix(0.3392 0.0351 0.0704 0.2805 735.6 510.4)">D2</text><text transform="matrix(0.3483 0.0361 0.1094 0.2881 804.4 517.5)">D4</text><text transform="matrix(0.2947 0.0322 -0.1835 0.2563 254.9 486.8)">E3</text><text transform="matrix(0.3023 0.0330 -0.1543 0.2630 314.6 493.3)">E5</text><text transform="matrix(0.3101 0.0338 -0.1235 0.2700 375.9 500.0)">E7</text><text transform="matrix(0.3183 0.0347 -0.0910 0.2773 438.7 506.9)">E1</text><text transform="matrix(0.3268 0.0357 -0.0567 0.2848 503.2 513.9)">E3</text><text transform="matrix(0.3356 0.0366 -0.0206 0.2926 569.4 521.1)">E5</text><text transform="matrix(0.3448 0.0376 0.0175 0.3008 637.5 528.6)">E7</text><text transform="matrix(0.3544 0.0387 0.0578 0.3093 707.4 536.2)">E1</text><text transform="matrix(0.3643 0.0398 0.1004 0.3182 779.2 544.0)">E3</text><text transform="matrix(0.3138 0.0362 -0.1884 0.2892 266.8 517.4)">F4</text><text transform="matrix(0.3224 0.0372 -0.1552 0.2973 330.4 524.8)">F6</text><text transform="matrix(0.3313 0.0382 -0.1201 0.3057 395.7 532.3)">F8</text><text transform="matrix(0.3406 0.0393 -0.0829 0.3144 462.9 540.1)">F2</text><text transform="matrix(0.3503 0.0404 -0.0436 0.3235 532.0 548.1)">F4</text><text transform="matrix(0.3604 0.0416 -0.0020 0.3330 603.0 556.3)">F6</text><text transform="matrix(0.3709 0.0428 0.0421 0.3429 676.2 564.7)">F8</text><text transform="matrix(0.3819 0.0441 0.0887 0.3533 751.4 573.4)">F2</text><text transform="matrix(0.3934 0.0454 0.1382 0.3641 828.9 582.3)">F4</text><text transform="matrix(0.3356 0.0411 -0.1930 0.3289 280.1 552.1)">G5</text><text transform="matrix(0.3453 0.0423 -0.1549 0.3387 348.2 560.5)">G7</text><text transform="matrix(0.3555 0.0435 -0.1145 0.3489 418.3 569.1)">G1</text><text transform="matrix(0.3662 0.0448 -0.0716 0.3595 490.5 577.9)">G3</text><text transform="matrix(0.3773 0.0462 -0.0261 0.3707 564.8 587.0)">G5</text><text transform="matrix(0.3890 0.0476 0.0223 0.3823 641.4 596.4)">G7</text><text transform="matrix(0.4012 0.0491 0.0737 0.3945 720.4 606.1)">G1</text><text transform="matrix(0.4140 0.0507 0.1285 0.4073 802.0 616.0)">G3</text><text transform="matrix(0.3498 0.0456 -0.2383 0.3659 224.4 582.5)">H4</text><text transform="matrix(0.3605 0.0470 -0.1970 0.3774 295.4 591.8)">H6</text><text transform="matrix(0.3718 0.0485 -0.1529 0.3894 368.6 601.3)">H8</text><text transform="matrix(0.3836 0.0500 -0.1060 0.4019 444.2 611.2)">H2</text><text transform="matrix(0.3960 0.0516 -0.0559 0.4151 522.1 621.3)">H4</text><text transform="matrix(0.4089 0.0533 -0.0026 0.4289 602.6 631.8)">H6</text><text transform="matrix(0.4225 0.0551 0.0544 0.4434 685.7 642.7)">H8</text><text transform="matrix(0.4368 0.0570 0.1152 0.4587 771.6 653.9)">H2</text><text transform="matrix(0.3770 0.0526 -0.2482 0.4231 236.4 626.8)">A5</text><text transform="matrix(0.3895 0.0544 -0.2000 0.4373 313.0 637.5)">A7</text><text transform="matrix(0.4026 0.0562 -0.1485 0.4523 392.2 648.5)">A1</text><text transform="matrix(0.4164 0.0581 -0.0932 0.4680 474.1 659.9)">A3</text><text transform="matrix(0.4309 0.0601 -0.0341 0.4846 558.8 671.8)">A5</text><text transform="matrix(0.4462 0.0623 0.0293 0.5020 646.5 684.0)">A7</text><text transform="matrix(0.4623 0.0645 0.0973 0.5204 737.4 696.7)">A1</text><text transform="matrix(0.4793 0.0669 0.1702 0.5398 831.5 709.8)">A3</text><text transform="matrix(0.4089 0.0614 -0.2582 0.4948 250.3 678.2)">B6</text><text transform="matrix(0.4236 0.0636 -0.2014 0.5128 333.5 690.7)">B8</text><text transform="matrix(0.4390 0.0659 -0.1402 0.5318 419.8 703.6)">B2</text><text transform="matrix(0.4554 0.0684 -0.0744 0.5519 509.2 717.1)">B4</text></g><g fill="#cbcbcb"><text transform="matrix(0.1291 0.0054 0.0309 0.0404 755.7 191.4)">E2</text><text transform="matrix(0.1304 0.0054 0.0364 0.0408 781.7 192.5)">E4</text><text transform="matrix(0.1317 0.0055 0.0421 0.0413 807.9 193.6)">E6</text><text transform="matrix(0.1261 0.0054 0.0075 0.0402 642.8 190.6)">F1</text><text transform="matrix(0.1274 0.0054 0.0128 0.0406 668.1 191.7)">F3</text><text transform="matrix(0.1286 0.0055 0.0182 0.0410 693.7 192.8)">F5</text><text transform="matrix(0.1299 0.0055 0.0237 0.0415 719.6 193.9)">F7</text><text transform="matrix(0.1313 0.0056 0.0293 0.0419 745.7 195.0)">F1</text><text transform="matrix(0.1326 0.0056 0.0351 0.0424 772.1 196.1)">F3</text><text transform="matrix(0.1340 0.0057 0.0409 0.0428 798.8 197.3)">F5</text><text transform="matrix(0.1354 0.0057 0.0469 0.0433 825.7 198.4)">F7</text><text transform="matrix(0.1243 0.0054 -0.0106 0.0404 555.0 190.9)">G2</text><text transform="matrix(0.1256 0.0054 -0.0055 0.0408 580.0 192.0)">G4</text><text transform="matrix(0.1268 0.0055 -0.0002 0.0412 605.2 193.1)">G6</text><text transform="matrix(0.1281 0.0055 0.0051 0.0417 630.7 194.2)">G8</text><text transform="matrix(0.1294 0.0056 0.0106 0.0421 656.5 195.3)">G2</text><text transform="matrix(0.1308 0.0057 0.0162 0.0426 682.5 196.4)">G4</text><text transform="matrix(0.1321 0.0057 0.0218 0.0430 708.8 197.6)">G6</text><text transform="matrix(0.1335 0.0058 0.0277 0.0435 735.3 198.7)">G8</text><text transform="matrix(0.1349 0.0058 0.0336 0.0440 762.2 199.9)">G2</text><text transform="matrix(0.1363 0.0059 0.0396 0.0444 789.3 201.0)">G4</text><text transform="matrix(0.1377 0.0060 0.0458 0.0449 816.7 202.2)">G6</text><text transform="matrix(0.1213 0.0053 -0.0339 0.0401 442.2 190.1)">H1</text><text transform="matrix(0.1225 0.0054 -0.0290 0.0405 466.6 191.2)">H3</text><text transform="matrix(0.1237 0.0055 -0.0240 0.0410 491.2 192.3)">H5</text><text transform="matrix(0.1250 0.0055 -0.0189 0.0414 516.1 193.4)">H7</text><text transform="matrix(0.1263 0.0056 -0.0137 0.0419 541.2 194.5)">H1</text><text transform="matrix(0.1276 0.0056 -0.0084 0.0423 566.6 195.6)">H3</text><text transform="matrix(0.1289 0.0057 -0.0030 0.0428 592.3 196.7)">H5</text><text transform="matrix(0.1302 0.0057 0.0025 0.0432 618.2 197.9)">H7</text><text transform="matrix(0.1316 0.0058 0.0082 0.0437 644.4 199.0)">H1</text><text transform="matrix(0.1329 0.0059 0.0139 0.0442 670.8 200.2)">H3</text><text transform="matrix(0.1343 0.0059 0.0198 0.0447 697.5 201.4)">H5</text><text transform="matrix(0.1358 0.0060 0.0258 0.0452 724.5 202.5)">H7</text><text transform="matrix(0.1372 0.0060 0.0320 0.0457 751.8 203.8)">H1</text><text transform="matrix(0.1387 0.0061 0.0382 0.0462 779.4 205.0)">H3</text><text transform="matrix(0.1401 0.0062 0.0446 0.0467 807.3 206.2)">H5</text><text transform="matrix(0.1195 0.0054 -0.0524 0.0403 353.6 190.4)">A2</text><text transform="matrix(0.1207 0.0054 -0.0477 0.0407 377.7 191.5)">A4</text><text transform="matrix(0.1219 0.0055 -0.0428 0.0412 401.9 192.5)">A6</text><text transform="matrix(0.1231 0.0055 -0.0379 0.0416 426.4 193.6)">A8</text><text transform="matrix(0.1244 0.0056 -0.0328 0.0421 451.2 194.8)">A2</text><text transform="matrix(0.1257 0.0056 -0.0277 0.0425 476.2 195.9)">A4</text><text transform="matrix(0.1270 0.0057 -0.0224 0.0430 501.5 197.0)">A6</text><text transform="matrix(0.1283 0.0058 -0.0171 0.0434 527.0 198.2)">A8</text><text transform="matrix(0.1296 0.0058 -0.0116 0.0439 552.8 199.3)">A2</text><text transform="matrix(0.1310 0.0059 -0.0060 0.0444 578.8 200.5)">A4</text><text transform="matrix(0.1324 0.0060 -0.0003 0.0449 605.2 201.7)">A6</text><text transform="matrix(0.1338 0.0060 0.0056 0.0454 631.8 202.9)">A8</text><text transform="matrix(0.1352 0.0061 0.0115 0.0459 658.7 204.1)">A2</text><text transform="matrix(0.1366 0.0061 0.0176 0.0464 685.9 205.3)">A4</text><text transform="matrix(0.1381 0.0062 0.0238 0.0469 713.3 206.5)">A6</text><text transform="matrix(0.1396 0.0063 0.0302 0.0475 741.1 207.8)">A8</text><text transform="matrix(0.1411 0.0063 0.0367 0.0480 769.2 209.1)">A2</text><text transform="matrix(0.1427 0.0064 0.0433 0.0486 797.6 210.3)">A4</text><text transform="matrix(0.1442 0.0065 0.0501 0.0491 826.3 211.6)">A6</text><text transform="matrix(0.1176 0.0054 -0.0711 0.0405 264.5 190.6)">B3</text><text transform="matrix(0.1188 0.0055 -0.0665 0.0409 288.1 191.7)">B5</text><text transform="matrix(0.1200 0.0055 -0.0619 0.0414 312.0 192.8)">B7</text><text transform="matrix(0.1213 0.0056 -0.0571 0.0418 336.1 193.9)">B1</text><text transform="matrix(0.1225 0.0056 -0.0522 0.0423 360.5 195.0)">B3</text><text transform="matrix(0.1238 0.0057 -0.0472 0.0427 385.1 196.2)">B5</text><text transform="matrix(0.1250 0.0057 -0.0421 0.0432 410.0 197.3)">B7</text><text transform="matrix(0.1263 0.0058 -0.0369 0.0437 435.2 198.5)">B1</text><text transform="matrix(0.1277 0.0059 -0.0316 0.0441 460.6 199.6)">B3</text><text transform="matrix(0.1290 0.0059 -0.0262 0.0446 486.2 200.8)">B5</text><text transform="matrix(0.1304 0.0060 -0.0206 0.0451 512.2 202.0)">B7</text><text transform="matrix(0.1318 0.0060 -0.0150 0.0456 538.4 203.2)">B1</text><text transform="matrix(0.1332 0.0061 -0.0092 0.0461 564.9 204.4)">B3</text><text transform="matrix(0.1346 0.0062 -0.0033 0.0467 591.6 205.7)">B5</text><text transform="matrix(0.1361 0.0062 0.0028 0.0472 618.7 206.9)">B7</text><text transform="matrix(0.1375 0.0063 0.0089 0.0477 646.1 208.1)">B1</text><text transform="matrix(0.1390 0.0064 0.0152 0.0483 673.7 209.4)">B3</text><text transform="matrix(0.1406 0.0064 0.0217 0.0488 701.7 210.7)">B5</text><text transform="matrix(0.1421 0.0065 0.0282 0.0494 729.9 212.0)">B7</text><text transform="matrix(0.1437 0.0066 0.0350 0.0500 758.5 213.3)">B1</text><text transform="matrix(0.1453 0.0067 0.0418 0.0506 787.4 214.6)">B3</text><text transform="matrix(0.1469 0.0067 0.0489 0.0511 816.6 216.0)">B5</text><text transform="matrix(0.1193 0.0056 -0.0765 0.0420 245.3 194.2)">C2</text><text transform="matrix(0.1206 0.0056 -0.0718 0.0425 269.2 195.3)">C4</text><text transform="matrix(0.1218 0.0057 -0.0670 0.0429 293.5 196.5)">C6</text><text transform="matrix(0.1231 0.0058 -0.0621 0.0434 318.0 197.6)">C8</text><text transform="matrix(0.1244 0.0058 -0.0570 0.0439 342.7 198.8)">C2</text><text transform="matrix(0.1257 0.0059 -0.0519 0.0444 367.7 200.0)">C4</text><text transform="matrix(0.1270 0.0059 -0.0466 0.0448 393.0 201.1)">C6</text><text transform="matrix(0.1283 0.0060 -0.0413 0.0453 418.5 202.3)">C8</text><text transform="matrix(0.1297 0.0061 -0.0358 0.0459 444.3 203.5)">C2</text><text transform="matrix(0.1311 0.0061 -0.0302 0.0464 470.4 204.8)">C4</text><text transform="matrix(0.1325 0.0062 -0.0245 0.0469 496.8 206.0)">C6</text><text transform="matrix(0.1340 0.0063 -0.0186 0.0474 523.4 207.2)">C8</text><text transform="matrix(0.1354 0.0063 -0.0127 0.0480 550.4 208.5)">C2</text><text transform="matrix(0.1369 0.0064 -0.0065 0.0485 577.6 209.8)">C4</text><text transform="matrix(0.1384 0.0065 -0.0003 0.0491 605.1 211.1)">C6</text><text transform="matrix(0.1399 0.0066 0.0061 0.0497 632.9 212.4)">C8</text><text transform="matrix(0.1415 0.0066 0.0126 0.0502 661.1 213.7)">C2</text><text transform="matrix(0.1431 0.0067 0.0193 0.0508 689.5 215.0)">C4</text><text transform="matrix(0.1447 0.0068 0.0261 0.0514 718.3 216.4)">C6</text><text transform="matrix(0.1463 0.0069 0.0331 0.0520 747.4 217.7)">C8</text><text transform="matrix(0.1480 0.0069 0.0402 0.0527 776.9 219.1)">C2</text><text transform="matrix(0.1497 0.0070 0.0475 0.0533 806.6 220.5)">C4</text><text transform="matrix(0.1224 0.0059 -0.0774 0.0441 249.6 199.1)">D3</text><text transform="matrix(0.1236 0.0059 -0.0725 0.0446 274.2 200.3)">D5</text><text transform="matrix(0.1250 0.0060 -0.0674 0.0451 299.1 201.5)">D7</text><text transform="matrix(0.1263 0.0060 -0.0622 0.0456 324.2 202.7)">D1</text><text transform="matrix(0.1276 0.0061 -0.0569 0.0461 349.6 203.9)">D3</text><text transform="matrix(0.1290 0.0062 -0.0515 0.0466 375.3 205.1)">D5</text><text transform="matrix(0.1304 0.0062 -0.0460 0.0471 401.2 206.3)">D7</text><text transform="matrix(0.1318 0.0063 -0.0403 0.0477 427.4 207.6)">D1</text><text transform="matrix(0.1333 0.0064 -0.0345 0.0482 454.0 208.9)">D3</text><text transform="matrix(0.1347 0.0064 -0.0286 0.0488 480.8 210.1)">D5</text><text transform="matrix(0.1362 0.0065 -0.0226 0.0493 507.8 211.4)">D7</text><text transform="matrix(0.1377 0.0066 -0.0164 0.0499 535.2 212.8)">D1</text><text transform="matrix(0.1393 0.0067 -0.0101 0.0505 562.9 214.1)">D3</text><text transform="matrix(0.1408 0.0067 -0.0036 0.0511 591.0 215.4)">D5</text><text transform="matrix(0.1424 0.0068 0.0030 0.0517 619.3 216.8)">D7</text><text transform="matrix(0.1441 0.0069 0.0098 0.0523 647.9 218.1)">D1</text><text transform="matrix(0.1457 0.0070 0.0167 0.0530 676.9 219.5)">D3</text><text transform="matrix(0.1474 0.0070 0.0238 0.0536 706.2 220.9)">D5</text><text transform="matrix(0.1491 0.0071 0.0310 0.0542 735.9 222.3)">D7</text><text transform="matrix(0.1508 0.0072 0.0384 0.0549 765.9 223.8)">D1</text><text transform="matrix(0.1526 0.0073 0.0460 0.0556 796.2 225.2)">D3</text><text transform="matrix(0.1544 0.0074 0.0538 0.0563 826.9 226.7)">D5</text><text transform="matrix(0.1255 0.0061 -0.0783 0.0463 254.2 204.2)">E4</text><text transform="matrix(0.1269 0.0062 -0.0731 0.0469 279.5 205.4)">E6</text><text transform="matrix(0.1283 0.0063 -0.0678 0.0474 305.0 206.7)">E8</text><text transform="matrix(0.1297 0.0063 -0.0623 0.0479 330.8 208.0)">E2</text><text transform="matrix(0.1311 0.0064 -0.0567 0.0485 356.9 209.2)">E4</text><text transform="matrix(0.1325 0.0065 -0.0510 0.0490 383.2 210.5)">E6</text><text transform="matrix(0.1340 0.0065 -0.0452 0.0496 409.9 211.8)">E8</text><text transform="matrix(0.1355 0.0066 -0.0392 0.0502 436.8 213.1)">E2</text><text transform="matrix(0.1370 0.0067 -0.0331 0.0508 464.1 214.5)">E4</text><text transform="matrix(0.1386 0.0068 -0.0268 0.0514 491.6 215.8)">E6</text><text transform="matrix(0.1401 0.0068 -0.0204 0.0520 519.5 217.2)">E8</text><text transform="matrix(0.1417 0.0069 -0.0139 0.0526 547.7 218.6)">E2</text><text transform="matrix(0.1434 0.0070 -0.0072 0.0532 576.2 219.9)">E4</text><text transform="matrix(0.1450 0.0071 -0.0003 0.0539 605.1 221.4)">E6</text><text transform="matrix(0.1467 0.0072 0.0067 0.0545 634.2 222.8)">E8</text><text transform="matrix(0.1484 0.0073 0.0139 0.0552 663.7 224.2)">E2</text><text transform="matrix(0.1502 0.0073 0.0212 0.0559 693.6 225.7)">E4</text><text transform="matrix(0.1519 0.0074 0.0287 0.0566 723.8 227.2)">E6</text><text transform="matrix(0.1538 0.0075 0.0364 0.0573 754.4 228.7)">E8</text><text transform="matrix(0.1556 0.0076 0.0443 0.0580 785.3 230.2)">E2</text><text transform="matrix(0.1575 0.0077 0.0524 0.0587 816.6 231.7)">E4</text><text transform="matrix(0.1289 0.0064 -0.0792 0.0487 259.1 209.6)">F5</text><text transform="matrix(0.1303 0.0065 -0.0737 0.0493 285.0 210.9)">F7</text><text transform="matrix(0.1317 0.0066 -0.0681 0.0499 311.2 212.2)">F1</text><text transform="matrix(0.1332 0.0067 -0.0623 0.0505 337.7 213.5)">F3</text><text transform="matrix(0.1347 0.0067 -0.0564 0.0511 364.5 214.9)">F5</text><text transform="matrix(0.1363 0.0068 -0.0504 0.0517 391.6 216.2)">F7</text><text transform="matrix(0.1378 0.0069 -0.0442 0.0523 419.0 217.6)">F1</text><text transform="matrix(0.1394 0.0070 -0.0379 0.0529 446.7 219.0)">F3</text><text transform="matrix(0.1410 0.0070 -0.0314 0.0535 474.8 220.4)">F5</text><text transform="matrix(0.1426 0.0071 -0.0248 0.0542 503.1 221.8)">F7</text><text transform="matrix(0.1443 0.0072 -0.0180 0.0549 531.8 223.2)">F1</text><text transform="matrix(0.1460 0.0073 -0.0111 0.0555 560.8 224.7)">F3</text><text transform="matrix(0.1477 0.0074 -0.0040 0.0562 590.2 226.1)">F5</text><text transform="matrix(0.1495 0.0075 0.0033 0.0569 619.9 227.6)">F7</text><text transform="matrix(0.1512 0.0076 0.0108 0.0576 650.0 229.1)">F1</text><text transform="matrix(0.1531 0.0076 0.0184 0.0583 680.4 230.6)">F3</text><text transform="matrix(0.1549 0.0077 0.0262 0.0591 711.2 232.2)">F5</text><text transform="matrix(0.1568 0.0078 0.0342 0.0598 742.4 233.7)">F7</text><text transform="matrix(0.1587 0.0079 0.0424 0.0606 773.9 235.3)">F1</text><text transform="matrix(0.1607 0.0080 0.0508 0.0614 805.9 236.9)">F3</text><text transform="matrix(0.1309 0.0067 -0.0858 0.0507 237.9 213.9)">G4</text><text transform="matrix(0.1324 0.0068 -0.0801 0.0513 264.2 215.3)">G6</text><text transform="matrix(0.1339 0.0068 -0.0743 0.0520 290.8 216.6)">G8</text><text transform="matrix(0.1354 0.0069 -0.0683 0.0526 317.7 218.0)">G2</text><text transform="matrix(0.1370 0.0070 -0.0623 0.0532 345.0 219.4)">G4</text><text transform="matrix(0.1386 0.0071 -0.0560 0.0539 372.5 220.8)">G6</text><text transform="matrix(0.1402 0.0072 -0.0496 0.0545 400.4 222.2)">G8</text><text transform="matrix(0.1418 0.0072 -0.0431 0.0552 428.6 223.7)">G2</text><text transform="matrix(0.1435 0.0073 -0.0364 0.0559 457.1 225.1)">G4</text><text transform="matrix(0.1452 0.0074 -0.0295 0.0565 486.0 226.6)">G6</text><text transform="matrix(0.1469 0.0075 -0.0225 0.0573 515.2 228.1)">G8</text><text transform="matrix(0.1487 0.0076 -0.0153 0.0580 544.8 229.6)">G2</text><text transform="matrix(0.1505 0.0077 -0.0079 0.0587 574.7 231.1)">G4</text><text transform="matrix(0.1523 0.0078 -0.0004 0.0594 605.0 232.7)">G6</text><text transform="matrix(0.1542 0.0079 0.0074 0.0602 635.6 234.2)">G8</text><text transform="matrix(0.1561 0.0080 0.0153 0.0610 666.7 235.8)">G2</text><text transform="matrix(0.1580 0.0081 0.0234 0.0618 698.1 237.4)">G4</text><text transform="matrix(0.1600 0.0082 0.0318 0.0626 729.8 239.1)">G6</text><text transform="matrix(0.1620 0.0083 0.0403 0.0634 762.0 240.7)">G8</text><text transform="matrix(0.1640 0.0084 0.0490 0.0642 794.6 242.4)">G2</text><text transform="matrix(0.1661 0.0085 0.0580 0.0651 827.6 244.1)">G4</text><text transform="matrix(0.1346 0.0070 -0.0870 0.0535 242.5 219.8)">H5</text><text transform="matrix(0.1361 0.0071 -0.0810 0.0542 269.6 221.2)">H7</text><text transform="matrix(0.1377 0.0072 -0.0748 0.0548 296.9 222.7)">H1</text><text transform="matrix(0.1393 0.0073 -0.0685 0.0555 324.6 224.1)">H3</text><text transform="matrix(0.1410 0.0074 -0.0621 0.0562 352.7 225.6)">H5</text><text transform="matrix(0.1426 0.0075 -0.0555 0.0569 381.0 227.1)">H7</text><text transform="matrix(0.1444 0.0076 -0.0487 0.0576 409.7 228.6)">H1</text><text transform="matrix(0.1461 0.0076 -0.0418 0.0583 438.8 230.1)">H3</text><text transform="matrix(0.1479 0.0077 -0.0346 0.0591 468.2 231.6)">H5</text><text transform="matrix(0.1497 0.0078 -0.0273 0.0598 497.9 233.2)">H7</text><text transform="matrix(0.1515 0.0079 -0.0199 0.0606 528.0 234.7)">H1</text><text transform="matrix(0.1534 0.0080 -0.0122 0.0613 558.5 236.3)">H3</text><text transform="matrix(0.1553 0.0081 -0.0044 0.0621 589.4 238.0)">H5</text><text transform="matrix(0.1572 0.0082 0.0037 0.0629 620.6 239.6)">H7</text><text transform="matrix(0.1592 0.0083 0.0119 0.0638 652.3 241.2)">H1</text><text transform="matrix(0.1612 0.0084 0.0204 0.0646 684.3 242.9)">H3</text><text transform="matrix(0.1632 0.0085 0.0290 0.0655 716.7 244.6)">H5</text><text transform="matrix(0.1653 0.0087 0.0379 0.0663 749.6 246.3)">H7</text><text transform="matrix(0.1675 0.0088 0.0471 0.0672 782.9 248.1)">H1</text><text transform="matrix(0.1696 0.0089 0.0564 0.0681 816.6 249.8)">H3</text><text transform="matrix(0.1384 0.0074 -0.0882 0.0565 247.4 226.0)">A6</text><text transform="matrix(0.1401 0.0075 -0.0818 0.0572 275.2 227.5)">A8</text><text transform="matrix(0.1417 0.0076 -0.0753 0.0579 303.4 229.0)">A2</text><text transform="matrix(0.1434 0.0077 -0.0686 0.0587 331.9 230.6)">A4</text><text transform="matrix(0.1452 0.0078 -0.0618 0.0594 360.8 232.1)">A6</text><text transform="matrix(0.1470 0.0079 -0.0548 0.0602 390.0 233.7)">A8</text><text transform="matrix(0.1488 0.0080 -0.0476 0.0609 419.6 235.3)">A2</text><text transform="matrix(0.1506 0.0081 -0.0402 0.0617 449.5 236.9)">A4</text><text transform="matrix(0.1525 0.0082 -0.0326 0.0625 479.8 238.5)">A6</text><text transform="matrix(0.1544 0.0083 -0.0249 0.0633 510.5 240.1)">A8</text><text transform="matrix(0.1563 0.0084 -0.0169 0.0642 541.6 241.8)">A2</text><text transform="matrix(0.1583 0.0085 -0.0088 0.0650 573.0 243.5)">A4</text><text transform="matrix(0.1604 0.0086 -0.0004 0.0659 604.9 245.2)">A6</text><text transform="matrix(0.1624 0.0087 0.0082 0.0668 637.2 246.9)">A8</text><text transform="matrix(0.1645 0.0088 0.0170 0.0677 669.9 248.7)">A2</text><text transform="matrix(0.1667 0.0089 0.0260 0.0686 703.0 250.4)">A4</text><text transform="matrix(0.1688 0.0090 0.0353 0.0695 736.5 252.2)">A6</text><text transform="matrix(0.1711 0.0092 0.0448 0.0705 770.5 254.1)">A8</text><text transform="matrix(0.1733 0.0093 0.0546 0.0715 805.0 255.9)">A2</text><text transform="matrix(0.1425 0.0078 -0.0894 0.0598 252.5 232.6)">B7</text><text transform="matrix(0.1442 0.0079 -0.0826 0.0605 281.2 234.2)">B1</text><text transform="matrix(0.1460 0.0080 -0.0757 0.0613 310.2 235.8)">B3</text><text transform="matrix(0.1478 0.0081 -0.0686 0.0621 339.6 237.4)">B5</text><text transform="matrix(0.1497 0.0082 -0.0614 0.0629 369.4 239.0)">B7</text><text transform="matrix(0.1516 0.0083 -0.0539 0.0637 399.5 240.7)">B1</text><text transform="matrix(0.1535 0.0084 -0.0462 0.0646 430.0 242.4)">B3</text><text transform="matrix(0.1554 0.0085 -0.0384 0.0654 460.9 244.0)">B5</text><text transform="matrix(0.1574 0.0086 -0.0303 0.0663 492.2 245.8)">B7</text><text transform="matrix(0.1595 0.0088 -0.0221 0.0672 523.8 247.5)">B1</text><text transform="matrix(0.1615 0.0089 -0.0136 0.0681 555.9 249.3)">B3</text><text transform="matrix(0.1636 0.0090 -0.0049 0.0690 588.4 251.1)">B5</text><text transform="matrix(0.1658 0.0091 0.0041 0.0700 621.4 252.9)">B7</text><text transform="matrix(0.1680 0.0092 0.0133 0.0710 654.8 254.7)">B1</text><text transform="matrix(0.1702 0.0094 0.0227 0.0719 688.6 256.6)">B3</text><text transform="matrix(0.1725 0.0095 0.0324 0.0730 722.9 258.4)">B5</text><text transform="matrix(0.1748 0.0096 0.0423 0.0740 757.6 260.4)">B7</text><text transform="matrix(0.1772 0.0097 0.0525 0.0750 792.8 262.3)">B1</text><text transform="matrix(0.1797 0.0099 0.0630 0.0761 828.5 264.2)">B3</text><text transform="matrix(0.1468 0.0083 -0.0906 0.0633 258.0 239.6)">C8</text><text transform="matrix(0.1486 0.0084 -0.0834 0.0642 287.5 241.2)">C2</text><text transform="matrix(0.1505 0.0085 -0.0761 0.0650 317.5 242.9)">C4</text><text transform="matrix(0.1525 0.0086 -0.0685 0.0659 347.8 244.6)">C6</text><text transform="matrix(0.1544 0.0087 -0.0608 0.0668 378.5 246.3)">C8</text><text transform="matrix(0.1564 0.0088 -0.0528 0.0677 409.5 248.1)">C2</text><text transform="matrix(0.1585 0.0089 -0.0447 0.0686 441.0 249.9)">C4</text><text transform="matrix(0.1606 0.0090 -0.0363 0.0695 472.9 251.7)">C6</text><text transform="matrix(0.1627 0.0092 -0.0277 0.0705 505.2 253.5)">C8</text><text transform="matrix(0.1648 0.0093 -0.0188 0.0714 538.0 255.3)">C2</text><text transform="matrix(0.1671 0.0094 -0.0098 0.0724 571.2 257.2)">C4</text><text transform="matrix(0.1693 0.0095 -0.0004 0.0735 604.8 259.1)">C6</text><text transform="matrix(0.1716 0.0097 0.0091 0.0745 638.9 261.0)">C8</text><text transform="matrix(0.1740 0.0098 0.0190 0.0756 673.5 263.0)">C2</text><text transform="matrix(0.1763 0.0099 0.0291 0.0766 708.5 264.9)">C4</text><text transform="matrix(0.1788 0.0101 0.0395 0.0777 744.0 266.9)">C6</text><text transform="matrix(0.1813 0.0102 0.0501 0.0789 780.0 269.0)">C8</text><text transform="matrix(0.1838 0.0104 0.0611 0.0800 816.5 271.0)">C2</text><text transform="matrix(0.1514 0.0088 -0.0917 0.0672 263.8 246.9)">D1</text><text transform="matrix(0.1534 0.0089 -0.0841 0.0681 294.3 248.7)">D3</text><text transform="matrix(0.1554 0.0090 -0.0763 0.0690 325.1 250.5)">D5</text><text transform="matrix(0.1574 0.0091 -0.0682 0.0700 356.4 252.3)">D7</text><text transform="matrix(0.1595 0.0092 -0.0600 0.0709 388.1 254.1)">D1</text><text transform="matrix(0.1616 0.0094 -0.0515 0.0719 420.2 256.0)">D3</text><text transform="matrix(0.1638 0.0095 -0.0428 0.0729 452.8 257.9)">D5</text><text transform="matrix(0.1660 0.0096 -0.0338 0.0740 485.7 259.8)">D7</text><text transform="matrix(0.1683 0.0097 -0.0246 0.0750 519.2 261.7)">D1</text><text transform="matrix(0.1706 0.0099 -0.0152 0.0761 553.1 263.7)">D3</text><text transform="matrix(0.1730 0.0100 -0.0054 0.0772 587.4 265.7)">D5</text><text transform="matrix(0.1754 0.0101 0.0046 0.0783 622.3 267.7)">D7</text><text transform="matrix(0.1778 0.0103 0.0148 0.0794 657.6 269.7)">D1</text><text transform="matrix(0.1803 0.0104 0.0254 0.0806 693.4 271.8)">D3</text><text transform="matrix(0.1829 0.0106 0.0363 0.0818 729.7 273.9)">D5</text><text transform="matrix(0.1855 0.0107 0.0475 0.0830 766.6 276.0)">D7</text><text transform="matrix(0.1882 0.0109 0.0590 0.0842 803.9 278.2)">D1</text><text transform="matrix(0.1542 0.0092 -0.1008 0.0705 238.9 252.9)">E8</text><text transform="matrix(0.1563 0.0093 -0.0929 0.0714 269.9 254.8)">E2</text><text transform="matrix(0.1584 0.0094 -0.0847 0.0724 301.4 256.6)">E4</text><text transform="matrix(0.1605 0.0095 -0.0764 0.0734 333.3 258.5)">E6</text><text transform="matrix(0.1627 0.0097 -0.0678 0.0745 365.6 260.4)">E8</text><text transform="matrix(0.1649 0.0098 -0.0590 0.0755 398.4 262.4)">E2</text><text transform="matrix(0.1672 0.0099 -0.0499 0.0766 431.6 264.4)">E4</text><text transform="matrix(0.1695 0.0101 -0.0406 0.0777 465.3 266.4)">E6</text><text transform="matrix(0.1719 0.0102 -0.0310 0.0789 499.4 268.4)">E8</text><text transform="matrix(0.1743 0.0104 -0.0211 0.0800 534.0 270.5)">E2</text><text transform="matrix(0.1768 0.0105 -0.0109 0.0812 569.1 272.5)">E4</text><text transform="matrix(0.1793 0.0107 -0.0005 0.0824 604.7 274.7)">E6</text><text transform="matrix(0.1819 0.0108 0.0103 0.0836 640.8 276.8)">E8</text><text transform="matrix(0.1845 0.0110 0.0213 0.0849 677.5 279.0)">E2</text><text transform="matrix(0.1872 0.0111 0.0327 0.0862 714.7 281.2)">E4</text><text transform="matrix(0.1900 0.0113 0.0444 0.0875 752.4 283.4)">E6</text><text transform="matrix(0.1928 0.0115 0.0565 0.0888 790.7 285.7)">E8</text><text transform="matrix(0.1957 0.0116 0.0689 0.0902 829.5 288.0)">E2</text><text transform="matrix(0.1593 0.0097 -0.1024 0.0750 244.4 261.1)">F1</text><text transform="matrix(0.1615 0.0099 -0.0940 0.0761 276.5 263.1)">F3</text><text transform="matrix(0.1637 0.0100 -0.0853 0.0772 309.0 265.1)">F5</text><text transform="matrix(0.1660 0.0101 -0.0764 0.0783 342.0 267.1)">F7</text><text transform="matrix(0.1683 0.0103 -0.0672 0.0794 375.4 269.1)">F1</text><text transform="matrix(0.1707 0.0104 -0.0577 0.0806 409.3 271.2)">F3</text><text transform="matrix(0.1731 0.0106 -0.0480 0.0818 443.7 273.3)">F5</text><text transform="matrix(0.1756 0.0107 -0.0380 0.0830 478.6 275.4)">F7</text><text transform="matrix(0.1782 0.0109 -0.0277 0.0843 514.0 277.6)">F1</text><text transform="matrix(0.1808 0.0111 -0.0170 0.0855 549.9 279.8)">F3</text><text transform="matrix(0.1834 0.0112 -0.0061 0.0868 586.3 282.0)">F5</text><text transform="matrix(0.1861 0.0114 0.0051 0.0882 623.2 284.3)">F7</text><text transform="matrix(0.1889 0.0115 0.0167 0.0895 660.7 286.6)">F1</text><text transform="matrix(0.1917 0.0117 0.0287 0.0909 698.8 288.9)">F3</text><text transform="matrix(0.1946 0.0119 0.0410 0.0923 737.4 291.3)">F5</text><text transform="matrix(0.1976 0.0121 0.0536 0.0938 776.7 293.7)">F7</text><text transform="matrix(0.2006 0.0123 0.0667 0.0953 816.5 296.1)">F1</text><text transform="matrix(0.1647 0.0104 -0.1040 0.0800 250.3 269.9)">G2</text><text transform="matrix(0.1670 0.0105 -0.0950 0.0812 283.5 272.0)">G4</text><text transform="matrix(0.1694 0.0107 -0.0857 0.0824 317.1 274.1)">G6</text><text transform="matrix(0.1719 0.0108 -0.0761 0.0836 351.2 276.2)">G8</text><text transform="matrix(0.1744 0.0110 -0.0663 0.0849 385.9 278.4)">G2</text><text transform="matrix(0.1769 0.0111 -0.0561 0.0862 421.0 280.6)">G4</text><text transform="matrix(0.1795 0.0113 -0.0457 0.0875 456.6 282.9)">G6</text><text transform="matrix(0.1822 0.0115 -0.0349 0.0889 492.8 285.1)">G8</text><text transform="matrix(0.1849 0.0116 -0.0238 0.0902 529.5 287.5)">G2</text><text transform="matrix(0.1877 0.0118 -0.0124 0.0916 566.8 289.8)">G4</text><text transform="matrix(0.1906 0.0120 -0.0006 0.0931 604.6 292.2)">G6</text><text transform="matrix(0.1935 0.0122 0.0116 0.0946 643.0 294.6)">G8</text><text transform="matrix(0.1965 0.0124 0.0241 0.0961 682.0 297.0)">G2</text><text transform="matrix(0.1995 0.0126 0.0370 0.0976 721.6 299.5)">G4</text><text transform="matrix(0.2027 0.0128 0.0504 0.0992 761.8 302.1)">G6</text><text transform="matrix(0.2059 0.0130 0.0641 0.1008 802.7 304.6)">G8</text><text transform="matrix(0.1705 0.0111 -0.1056 0.0855 256.6 279.2)">H3</text><text transform="matrix(0.1730 0.0112 -0.0960 0.0869 290.9 281.5)">H5</text><text transform="matrix(0.1756 0.0114 -0.0860 0.0882 325.8 283.7)">H7</text><text transform="matrix(0.1782 0.0116 -0.0757 0.0895 361.1 286.0)">H1</text><text transform="matrix(0.1809 0.0117 -0.0651 0.0909 397.1 288.3)">H3</text><text transform="matrix(0.1836 0.0119 -0.0542 0.0924 433.5 290.7)">H5</text><text transform="matrix(0.1864 0.0121 -0.0429 0.0938 470.5 293.1)">H7</text><text transform="matrix(0.1893 0.0123 -0.0313 0.0953 508.1 295.5)">H1</text><text transform="matrix(0.1922 0.0125 -0.0193 0.0969 546.2 298.0)">H3</text><text transform="matrix(0.1952 0.0127 -0.0069 0.0984 585.0 300.5)">H5</text><text transform="matrix(0.1983 0.0129 0.0058 0.1000 624.3 303.1)">H7</text><text transform="matrix(0.2014 0.0131 0.0190 0.1017 664.3 305.7)">H1</text><text transform="matrix(0.2047 0.0133 0.0326 0.1033 704.9 308.3)">H3</text><text transform="matrix(0.2080 0.0135 0.0466 0.1051 746.2 311.0)">H5</text><text transform="matrix(0.2114 0.0137 0.0611 0.1068 788.1 313.7)">H7</text><text transform="matrix(0.2148 0.0139 0.0760 0.1086 830.7 316.5)">H1</text><text transform="matrix(0.1767 0.0118 -0.1072 0.0917 263.3 289.2)">A4</text><text transform="matrix(0.1794 0.0120 -0.0968 0.0931 298.9 291.6)">A6</text><text transform="matrix(0.1822 0.0122 -0.0861 0.0946 335.0 294.0)">A8</text><text transform="matrix(0.1850 0.0124 -0.0750 0.0961 371.8 296.5)">A2</text><text transform="matrix(0.1879 0.0126 -0.0636 0.0977 409.0 299.0)">A4</text><text transform="matrix(0.1908 0.0128 -0.0518 0.0992 446.9 301.5)">A6</text><text transform="matrix(0.1938 0.0130 -0.0396 0.1009 485.4 304.1)">A8</text><text transform="matrix(0.1969 0.0132 -0.0270 0.1025 524.5 306.7)">A2</text><text transform="matrix(0.2001 0.0134 -0.0140 0.1042 564.2 309.3)">A4</text><text transform="matrix(0.2033 0.0136 -0.0006 0.1060 604.5 312.0)">A6</text><text transform="matrix(0.2067 0.0138 0.0132 0.1078 645.5 314.8)">A8</text><text transform="matrix(0.2101 0.0140 0.0275 0.1096 687.2 317.6)">A2</text><text transform="matrix(0.2136 0.0143 0.0423 0.1115 729.5 320.4)">A4</text><text transform="matrix(0.2172 0.0145 0.0576 0.1134 772.6 323.3)">A6</text><text transform="matrix(0.2208 0.0148 0.0734 0.1154 816.4 326.2)">A8</text><text transform="matrix(0.1806 0.0125 -0.1197 0.0969 234.1 297.4)">B3</text><text transform="matrix(0.1834 0.0127 -0.1088 0.0985 270.5 299.9)">B5</text><text transform="matrix(0.1863 0.0129 -0.0976 0.1001 307.4 302.5)">B7</text><text transform="matrix(0.1893 0.0131 -0.0860 0.1017 345.0 305.1)">B1</text><text transform="matrix(0.1923 0.0133 -0.0740 0.1034 383.2 307.7)">B3</text><text transform="matrix(0.1954 0.0135 -0.0617 0.1051 421.9 310.4)">B5</text><text transform="matrix(0.1986 0.0137 -0.0489 0.1069 461.3 313.1)">B7</text><text transform="matrix(0.2019 0.0139 -0.0357 0.1087 501.4 315.9)">B1</text><text transform="matrix(0.2052 0.0142 -0.0220 0.1106 542.1 318.7)">B3</text><text transform="matrix(0.2087 0.0144 -0.0079 0.1125 583.5 321.6)">B5</text><text transform="matrix(0.2122 0.0147 0.0067 0.1144 625.6 324.5)">B7</text><text transform="matrix(0.2158 0.0149 0.0218 0.1165 668.4 327.4)">B1</text><text transform="matrix(0.2195 0.0152 0.0374 0.1185 711.9 330.4)">B3</text><text transform="matrix(0.2233 0.0154 0.0535 0.1206 756.2 333.5)">B5</text><text transform="matrix(0.2272 0.0157 0.0702 0.1228 801.2 336.6)">B7</text><text transform="matrix(0.1876 0.0134 -0.1220 0.1043 240.4 308.8)">C4</text><text transform="matrix(0.1906 0.0136 -0.1103 0.1061 278.2 311.5)">C6</text><text transform="matrix(0.1938 0.0138 -0.0982 0.1078 316.7 314.2)">C8</text><text transform="matrix(0.1970 0.0141 -0.0856 0.1097 355.7 317.0)">C2</text><text transform="matrix(0.2003 0.0143 -0.0727 0.1116 395.5 319.8)">C4</text><text transform="matrix(0.2036 0.0145 -0.0592 0.1135 435.8 322.7)">C6</text><text transform="matrix(0.2071 0.0148 -0.0454 0.1155 476.9 325.7)">C8</text><text transform="matrix(0.2106 0.0150 -0.0310 0.1175 518.7 328.6)">C2</text><text transform="matrix(0.2142 0.0153 -0.0161 0.1196 561.2 331.7)">C4</text><text transform="matrix(0.2180 0.0156 -0.0007 0.1218 604.4 334.8)">C6</text><text transform="matrix(0.2218 0.0158 0.0152 0.1240 648.3 337.9)">C8</text><text transform="matrix(0.2257 0.0161 0.0317 0.1262 693.1 341.1)">C2</text><text transform="matrix(0.2297 0.0164 0.0488 0.1285 738.6 344.3)">C4</text><text transform="matrix(0.2339 0.0167 0.0665 0.1309 785.0 347.7)">C6</text><text transform="matrix(0.2381 0.0170 0.0848 0.1334 832.2 351.0)">C8</text><text transform="matrix(0.1952 0.0144 -0.1244 0.1126 247.2 321.0)">D5</text><text transform="matrix(0.1985 0.0147 -0.1117 0.1145 286.6 323.9)">D7</text><text transform="matrix(0.2018 0.0149 -0.0986 0.1166 326.6 326.9)">D1</text><text transform="matrix(0.2053 0.0152 -0.0849 0.1186 367.3 329.9)">D3</text><text transform="matrix(0.2089 0.0154 -0.0708 0.1207 408.7 332.9)">D5</text><text transform="matrix(0.2125 0.0157 -0.0562 0.1229 450.9 336.1)">D7</text><text transform="matrix(0.2163 0.0160 -0.0411 0.1252 493.7 339.2)">D1</text><text transform="matrix(0.2201 0.0163 -0.0254 0.1275 537.4 342.4)">D3</text><text transform="matrix(0.2241 0.0166 -0.0091 0.1298 581.8 345.7)">D5</text><text transform="matrix(0.2281 0.0169 0.0077 0.1322 627.0 349.1)">D7</text><text transform="matrix(0.2323 0.0172 0.0252 0.1347 673.0 352.5)">D1</text><text transform="matrix(0.2366 0.0175 0.0433 0.1373 719.9 355.9)">D3</text><text transform="matrix(0.2410 0.0178 0.0621 0.1399 767.7 359.5)">D5</text><text transform="matrix(0.2455 0.0181 0.0816 0.1426 816.3 363.1)">D7</text><text transform="matrix(0.2034 0.0156 -0.1268 0.1219 254.6 334.2)">E6</text><text transform="matrix(0.2069 0.0159 -0.1130 0.1241 295.6 337.4)">E8</text><text transform="matrix(0.2106 0.0161 -0.0987 0.1264 337.3 340.6)">E2</text><text transform="matrix(0.2144 0.0164 -0.0838 0.1287 379.8 343.8)">E4</text><text transform="matrix(0.2182 0.0167 -0.0684 0.1311 423.1 347.1)">E6</text><text transform="matrix(0.2222 0.0170 -0.0525 0.1336 467.1 350.5)">E8</text><text transform="matrix(0.2263 0.0173 -0.0359 0.1361 512.0 353.9)">E2</text><text transform="matrix(0.2305 0.0177 -0.0187 0.1387 557.7 357.4)">E4</text><text transform="matrix(0.2348 0.0180 -0.0008 0.1414 604.2 361.0)">E6</text><text transform="matrix(0.2393 0.0183 0.0177 0.1441 651.6 364.6)">E8</text><text transform="matrix(0.2438 0.0187 0.0369 0.1469 699.9 368.3)">E2</text><text transform="matrix(0.2485 0.0190 0.0569 0.1498 749.2 372.1)">E4</text><text transform="matrix(0.2534 0.0194 0.0776 0.1528 799.4 375.9)">E6</text><text transform="matrix(0.2123 0.0169 -0.1291 0.1324 262.5 348.5)">F7</text><text transform="matrix(0.2162 0.0172 -0.1141 0.1349 305.4 351.9)">F1</text><text transform="matrix(0.2202 0.0175 -0.0984 0.1375 349.0 355.4)">F3</text><text transform="matrix(0.2243 0.0178 -0.0822 0.1401 393.5 359.0)">F5</text><text transform="matrix(0.2285 0.0182 -0.0653 0.1428 438.7 362.6)">F7</text><text transform="matrix(0.2329 0.0185 -0.0478 0.1456 484.9 366.2)">F1</text><text transform="matrix(0.2373 0.0189 -0.0296 0.1485 531.9 370.0)">F3</text><text transform="matrix(0.2419 0.0192 -0.0107 0.1515 579.8 373.8)">F5</text><text transform="matrix(0.2467 0.0196 0.0090 0.1545 628.7 377.7)">F7</text><text transform="matrix(0.2516 0.0200 0.0295 0.1576 678.5 381.6)">F1</text><text transform="matrix(0.2566 0.0204 0.0507 0.1609 729.3 385.7)">F3</text><text transform="matrix(0.2618 0.0208 0.0729 0.1642 781.1 389.8)">F5</text><text transform="matrix(0.2671 0.0212 0.0959 0.1677 834.0 394.0)">F7</text><text transform="matrix(0.2220 0.0184 -0.1314 0.1443 271.2 364.1)">G8</text><text transform="matrix(0.2263 0.0187 -0.1149 0.1472 316.1 367.8)">G2</text><text transform="matrix(0.2306 0.0191 -0.0977 0.1501 361.7 371.6)">G4</text><text transform="matrix(0.2351 0.0194 -0.0799 0.1531 408.3 375.5)">G6</text><text transform="matrix(0.2398 0.0198 -0.0613 0.1562 455.8 379.4)">G8</text><text transform="matrix(0.2445 0.0202 -0.0420 0.1594 504.2 383.4)">G2</text><text transform="matrix(0.2495 0.0206 -0.0219 0.1627 553.6 387.5)">G4</text><text transform="matrix(0.2545 0.0210 -0.0010 0.1661 604.0 391.6)">G6</text><text transform="matrix(0.2598 0.0215 0.0208 0.1696 655.5 395.9)">G8</text><text transform="matrix(0.2651 0.0219 0.0435 0.1732 707.9 400.2)">G2</text><text transform="matrix(0.2707 0.0224 0.0671 0.1769 761.5 404.7)">G4</text><text transform="matrix(0.2764 0.0229 0.0918 0.1808 816.2 409.2)">G6</text><text transform="matrix(0.2281 0.0196 -0.1509 0.1548 234.6 377.2)">H7</text><text transform="matrix(0.2327 0.0200 -0.1335 0.1579 280.7 381.1)">H1</text><text transform="matrix(0.2373 0.0204 -0.1154 0.1612 327.7 385.2)">H3</text><text transform="matrix(0.2421 0.0209 -0.0965 0.1645 375.7 389.3)">H5</text><text transform="matrix(0.2471 0.0213 -0.0768 0.1680 424.6 393.5)">H7</text><text transform="matrix(0.2522 0.0217 -0.0563 0.1715 474.5 397.8)">H1</text><text transform="matrix(0.2575 0.0222 -0.0349 0.1752 525.5 402.2)">H3</text><text transform="matrix(0.2629 0.0226 -0.0126 0.1790 577.5 406.7)">H5</text><text transform="matrix(0.2685 0.0231 0.0107 0.1829 630.6 411.3)">H7</text><text transform="matrix(0.2743 0.0236 0.0349 0.1870 684.9 416.0)">H1</text><text transform="matrix(0.2803 0.0241 0.0603 0.1911 740.4 420.7)">H3</text><text transform="matrix(0.2864 0.0247 0.0867 0.1955 797.0 425.6)">H5</text><text transform="matrix(0.2394 0.0215 -0.1547 0.1699 242.7 395.4)">A8</text><text transform="matrix(0.2444 0.0220 -0.1355 0.1735 291.1 399.8)">A2</text><text transform="matrix(0.2495 0.0224 -0.1155 0.1773 340.5 404.2)">A4</text><text transform="matrix(0.2549 0.0229 -0.0946 0.1811 390.9 408.8)">A6</text><text transform="matrix(0.2603 0.0234 -0.0727 0.1851 442.4 413.4)">A8</text><text transform="matrix(0.2660 0.0239 -0.0499 0.1893 495.1 418.1)">A2</text><text transform="matrix(0.2718 0.0244 -0.0261 0.1935 548.8 423.0)">A4</text><text transform="matrix(0.2778 0.0250 -0.0012 0.1979 603.8 427.9)">A6</text><text transform="matrix(0.2841 0.0255 0.0248 0.2025 660.0 433.0)">A8</text><text transform="matrix(0.2905 0.0261 0.0520 0.2072 717.5 438.1)">A2</text><text transform="matrix(0.2972 0.0267 0.0805 0.2120 776.2 443.4)">A4</text><text transform="matrix(0.3041 0.0273 0.1102 0.2171 836.3 448.8)">A6</text><text transform="matrix(0.2519 0.0237 -0.1584 0.1874 251.6 415.5)">B1</text><text transform="matrix(0.2574 0.0242 -0.1372 0.1916 302.5 420.3)">B3</text><text transform="matrix(0.2631 0.0247 -0.1149 0.1959 354.6 425.2)">B5</text><text transform="matrix(0.2690 0.0253 -0.0917 0.2004 407.8 430.2)">B7</text><text transform="matrix(0.2750 0.0259 -0.0673 0.2051 462.2 435.3)">B1</text><text transform="matrix(0.2813 0.0264 -0.0418 0.2099 517.8 440.6)">B3</text><text transform="matrix(0.2878 0.0271 -0.0151 0.2148 574.7 445.9)">B5</text><text transform="matrix(0.2946 0.0277 0.0128 0.2200 633.0 451.4)">B7</text><text transform="matrix(0.3015 0.0283 0.0421 0.2253 692.6 457.0)">B1</text><text transform="matrix(0.3088 0.0290 0.0728 0.2308 753.6 462.7)">B3</text><text transform="matrix(0.3163 0.0297 0.1049 0.2365 816.1 468.6)">B5</text><text transform="matrix(0.2657 0.0262 -0.1622 0.2077 261.5 437.8)">C2</text><text transform="matrix(0.2718 0.0268 -0.1385 0.2126 315.2 443.1)">C4</text><text transform="matrix(0.2782 0.0274 -0.1136 0.2177 370.2 448.5)">C6</text><text transform="matrix(0.2847 0.0281 -0.0876 0.2229 426.5 454.0)">C8</text><text transform="matrix(0.2915 0.0287 -0.0602 0.2284 484.1 459.7)">C2</text><text transform="matrix(0.2986 0.0294 -0.0315 0.2340 543.1 465.5)">C4</text><text transform="matrix(0.3059 0.0301 -0.0014 0.2399 603.5 471.5)">C6</text><text transform="matrix(0.3134 0.0309 0.0302 0.2459 665.5 477.6)">C8</text><text transform="matrix(0.3213 0.0317 0.0633 0.2522 728.9 483.8)">C2</text><text transform="matrix(0.3294 0.0325 0.0982 0.2588 794.0 490.2)">C4</text><text transform="matrix(0.2811 0.0291 -0.1658 0.2315 272.4 462.4)">D3</text><text transform="matrix(0.2880 0.0298 -0.1392 0.2373 329.3 468.3)">D5</text><text transform="matrix(0.2951 0.0306 -0.1112 0.2432 387.6 474.4)">D7</text><text transform="matrix(0.3024 0.0313 -0.0819 0.2494 447.3 480.6)">D1</text><text transform="matrix(0.3101 0.0321 -0.0510 0.2559 508.6 486.9)">D3</text><text transform="matrix(0.3180 0.0329 -0.0185 0.2626 571.4 493.4)">D5</text><text transform="matrix(0.3263 0.0338 0.0157 0.2695 635.8 500.1)">D7</text><text transform="matrix(0.3348 0.0347 0.0517 0.2767 701.9 506.9)">D1</text><text transform="matrix(0.3437 0.0356 0.0896 0.2843 769.8 514.0)">D3</text><text transform="matrix(0.3530 0.0366 0.1296 0.2921 839.4 521.2)">D5</text><text transform="matrix(0.2910 0.0318 -0.1976 0.2531 225.7 483.6)">E2</text><text transform="matrix(0.2985 0.0326 -0.1691 0.2596 284.6 490.0)">E4</text><text transform="matrix(0.3062 0.0334 -0.1391 0.2665 345.1 496.6)">E6</text><text transform="matrix(0.3142 0.0343 -0.1075 0.2736 407.1 503.4)">E8</text><text transform="matrix(0.3225 0.0352 -0.0741 0.2810 470.7 510.4)">E2</text><text transform="matrix(0.3311 0.0361 -0.0389 0.2887 536.1 517.5)">E4</text><text transform="matrix(0.3401 0.0371 -0.0018 0.2967 603.2 524.8)">E6</text><text transform="matrix(0.3495 0.0382 0.0374 0.3050 672.2 532.3)">E8</text><text transform="matrix(0.3593 0.0392 0.0788 0.3137 743.1 540.1)">E2</text><text transform="matrix(0.3695 0.0403 0.1225 0.3228 815.9 548.0)">E4</text><text transform="matrix(0.3097 0.0357 -0.2043 0.2853 235.6 513.9)">F3</text><text transform="matrix(0.3181 0.0367 -0.1720 0.2932 298.4 521.1)">F5</text><text transform="matrix(0.3268 0.0377 -0.1379 0.3014 362.8 528.5)">F7</text><text transform="matrix(0.3359 0.0388 -0.1017 0.3100 429.1 536.2)">F1</text><text transform="matrix(0.3454 0.0399 -0.0635 0.3189 497.2 544.0)">F3</text><text transform="matrix(0.3552 0.0410 -0.0231 0.3282 567.3 552.1)">F5</text><text transform="matrix(0.3656 0.0422 0.0197 0.3379 639.3 560.4)">F7</text><text transform="matrix(0.3763 0.0434 0.0651 0.3481 713.5 569.0)">F1</text><text transform="matrix(0.3876 0.0447 0.1131 0.3587 789.9 577.8)">F3</text><text transform="matrix(0.3308 0.0405 -0.2112 0.3242 246.8 548.1)">G4</text><text transform="matrix(0.3404 0.0417 -0.1742 0.3338 313.9 556.3)">G6</text><text transform="matrix(0.3504 0.0429 -0.1350 0.3437 383.0 564.7)">G8</text><text transform="matrix(0.3608 0.0442 -0.0934 0.3541 454.1 573.4)">G2</text><text transform="matrix(0.3717 0.0455 -0.0492 0.3650 527.4 582.4)">G4</text><text transform="matrix(0.3831 0.0469 -0.0023 0.3764 602.8 591.7)">G6</text><text transform="matrix(0.3950 0.0484 0.0476 0.3883 680.6 601.2)">G8</text><text transform="matrix(0.4075 0.0499 0.1007 0.4008 760.9 611.0)">G2</text><text transform="matrix(0.4206 0.0515 0.1571 0.4140 843.7 621.1)">G4</text><text transform="matrix(0.3551 0.0463 -0.2180 0.3716 259.6 587.1)">H5</text><text transform="matrix(0.3661 0.0477 -0.1753 0.3833 331.7 596.5)">H7</text><text transform="matrix(0.3776 0.0492 -0.1298 0.3956 406.1 606.2)">H1</text><text transform="matrix(0.3897 0.0508 -0.0814 0.4084 482.8 616.2)">H3</text><text transform="matrix(0.4024 0.0525 -0.0297 0.4219 562.0 626.5)">H5</text><text transform="matrix(0.4156 0.0542 0.0254 0.4361 643.8 637.2)">H7</text><text transform="matrix(0.4296 0.0560 0.0843 0.4510 728.3 648.2)">H1</text><text transform="matrix(0.4443 0.0579 0.1471 0.4666 815.7 659.6)">H3</text><text transform="matrix(0.3832 0.0535 -0.2245 0.4301 274.4 632.1)">A6</text><text transform="matrix(0.3960 0.0553 -0.1747 0.4447 352.3 642.9)">A8</text><text transform="matrix(0.4094 0.0571 -0.1213 0.4601 432.8 654.2)">A2</text><text transform="matrix(0.4236 0.0591 -0.0642 0.4762 516.1 665.8)">A4</text><text transform="matrix(0.4385 0.0612 -0.0030 0.4932 602.3 677.8)">A6</text><text transform="matrix(0.4542 0.0634 0.0627 0.5111 691.6 690.3)">A8</text><text transform="matrix(0.4707 0.0657 0.1331 0.5300 784.0 703.2)">A2</text><text transform="matrix(0.4161 0.0625 -0.2303 0.5037 291.6 684.4)">B7</text><text transform="matrix(0.4312 0.0647 -0.1714 0.5222 376.3 697.1)">B1</text><text transform="matrix(0.4471 0.0671 -0.1079 0.5417 464.1 710.3)">B3</text><text transform="matrix(0.4639 0.0696 -0.0396 0.5623 555.2 724.0)">B5</text></g></g><defs><filter id="bl2" x="-50%" y="-50%" width="200%" height="200%"><feGaussianBlur stdDeviation="3"/></filter><filter id="bl1" x="-50%" y="-50%" width="200%" height="200%"><feGaussianBlur stdDeviation="1.2"/></filter></defs><polygon points="300,300 318,334 404,316 420,332 330,350 290,320" fill="#000" opacity="0.10" filter="url(#bl2)"/><polygon points="548,282 566,272 564,308 606,311 592,318 546,314" fill="#000" opacity="0.36" filter="url(#bl2)"/><ellipse cx="728" cy="396" rx="34" ry="14" fill="#000" opacity="0.10" filter="url(#bl2)"/><polygon points="612,300 650,296 660,330 640,336 618,330" fill="#000" opacity="0.10" filter="url(#bl2)"/><ellipse cx="703" cy="378" rx="14" ry="13" fill="#000" opacity="0.12" filter="url(#bl2)"/><polygon points="282.5,231.0 377.5,219.5 385.4,236.0 285.1,250.1" fill="#e4e4e4"/><path fill="#cdcdcd" d="M295.5 229.4L308.1 227.9L308.6 230.1L295.9 231.6ZM320.4 226.4L332.4 225.0L333.0 227.1L321.0 228.6ZM344.1 223.5L355.5 222.2L356.3 224.2L344.8 225.6ZM366.6 220.8L377.5 219.5L378.4 221.5L367.5 222.8ZM282.8 233.3L295.9 231.6L296.3 233.9L283.1 235.6ZM308.6 230.1L321.0 228.6L321.5 230.7L309.1 232.3ZM333.0 227.1L344.8 225.6L345.6 227.7L333.7 229.2ZM356.3 224.2L367.5 222.8L368.4 224.8L357.1 226.3ZM296.3 233.9L309.1 232.3L309.6 234.5L296.7 236.2ZM321.5 230.7L333.7 229.2L334.4 231.4L322.1 232.9ZM345.6 227.7L357.1 226.3L357.9 228.3L346.3 229.8ZM368.4 224.8L379.4 223.5L380.4 225.5L369.3 226.9ZM283.4 237.9L296.7 236.2L297.1 238.5L283.8 240.2ZM309.6 234.5L322.1 232.9L322.7 235.2L310.1 236.8ZM334.4 231.4L346.3 229.8L347.1 232.0L335.1 233.6ZM357.9 228.3L369.3 226.9L370.2 229.0L358.8 230.5ZM297.1 238.5L310.1 236.8L310.6 239.1L297.5 240.9ZM322.7 235.2L335.1 233.6L335.8 235.8L323.4 237.4ZM347.1 232.0L358.8 230.5L359.6 232.6L347.8 234.2ZM370.2 229.0L381.3 227.5L382.3 229.6L371.1 231.1ZM284.1 242.7L297.5 240.9L298.0 243.3L284.4 245.1ZM310.6 239.1L323.4 237.4L324.0 239.7L311.1 241.5ZM335.8 235.8L347.8 234.2L348.6 236.4L336.5 238.0ZM359.6 232.6L371.1 231.1L372.1 233.2L360.5 234.8ZM298.0 243.3L311.1 241.5L311.7 243.9L298.4 245.7ZM324.0 239.7L336.5 238.0L337.2 240.3L324.6 242.1ZM348.6 236.4L360.5 234.8L361.4 237.0L349.4 238.7ZM372.1 233.2L383.3 231.7L384.4 233.8L373.0 235.4ZM284.8 247.6L298.4 245.7L298.9 248.2L285.1 250.1ZM311.7 243.9L324.6 242.1L325.2 244.5L312.2 246.3ZM337.2 240.3L349.4 238.7L350.3 240.9L337.9 242.7ZM361.4 237.0L373.0 235.4L374.0 237.6L362.3 239.3Z"/><polygon points="285.1,250.1 385.4,236.0 404.3,315.7 317.6,333.9" fill="#c7c7c7"/><path fill="#a2a2a2" d="M298.5 248.2L311.7 246.4L315.7 257.9L302.8 259.8ZM324.6 244.5L337.3 242.8L340.8 254.2L328.4 256.0ZM349.6 241.0L361.8 239.3L364.8 250.5L352.9 252.3ZM373.7 237.6L385.4 236.0L388.0 247.1L376.5 248.8ZM289.6 261.8L302.8 259.8L306.9 271.1L294.0 273.2ZM315.7 257.9L328.4 256.0L332.0 267.1L319.6 269.1ZM340.8 254.2L352.9 252.3L356.1 263.3L344.2 265.2ZM364.8 250.5L376.5 248.8L379.3 259.6L367.8 261.4ZM306.9 271.1L319.6 269.1L323.4 279.9L310.9 282.0ZM332.0 267.1L344.2 265.2L347.5 275.8L335.5 277.8ZM356.1 263.3L367.8 261.4L370.7 271.9L359.2 273.9ZM379.3 259.6L390.6 257.8L393.0 268.2L382.0 270.0ZM298.3 284.1L310.9 282.0L314.8 292.5L302.4 294.7ZM323.4 279.9L335.5 277.8L338.9 288.3L327.0 290.4ZM347.5 275.8L359.2 273.9L362.2 284.1L350.7 286.2ZM370.7 271.9L382.0 270.0L384.5 280.2L373.4 282.1ZM314.8 292.5L327.0 290.4L330.5 300.5L318.6 302.7ZM338.9 288.3L350.7 286.2L353.7 296.2L342.2 298.3ZM362.2 284.1L373.4 282.1L376.1 292.0L365.0 294.1ZM384.5 280.2L395.4 278.2L397.7 288.0L387.0 290.0ZM306.4 305.0L318.6 302.7L322.2 312.6L310.2 314.9ZM330.5 300.5L342.2 298.3L345.4 308.1L333.9 310.3ZM353.7 296.2L365.0 294.1L367.8 303.8L356.7 305.9ZM376.1 292.0L387.0 290.0L389.5 299.6L378.8 301.6ZM322.2 312.6L333.9 310.3L337.2 319.9L325.7 322.2ZM345.4 308.1L356.7 305.9L359.7 315.3L348.5 317.6ZM367.8 303.8L378.8 301.6L381.3 311.0L370.6 313.1ZM389.5 299.6L400.0 297.5L402.2 306.7L391.8 308.8ZM314.0 324.6L325.7 322.2L329.1 331.5L317.6 333.9ZM337.2 319.9L348.5 317.6L351.6 326.8L340.4 329.1ZM359.7 315.3L370.6 313.1L373.2 322.2L362.5 324.5ZM381.3 311.0L391.8 308.8L394.1 317.8L383.8 320.0Z"/><g font-family="Liberation Sans" font-weight="bold" font-size="46" text-anchor="middle" dominant-baseline="central"><g fill="#b6b6b6"><text transform="matrix(0.1330 -0.0193 0.0441 0.1168 294.1 255.0)">A1</text><text transform="matrix(0.1277 -0.0186 0.0388 0.1151 320.1 251.3)">A3</text><text transform="matrix(0.1227 -0.0178 0.0340 0.1134 345.2 247.6)">A5</text><text transform="matrix(0.1181 -0.0172 0.0294 0.1118 369.3 244.1)">A7</text><text transform="matrix(0.1278 -0.0198 0.0400 0.1121 311.3 264.5)">B2</text><text transform="matrix(0.1228 -0.0190 0.0352 0.1106 336.4 260.7)">B4</text><text transform="matrix(0.1181 -0.0183 0.0306 0.1090 360.5 256.9)">B6</text><text transform="matrix(0.1137 -0.0176 0.0264 0.1075 383.6 253.3)">B8</text><text transform="matrix(0.1278 -0.0209 0.0412 0.1092 302.6 277.6)">C1</text><text transform="matrix(0.1229 -0.0201 0.0364 0.1077 327.7 273.5)">C3</text><text transform="matrix(0.1182 -0.0194 0.0318 0.1063 351.8 269.6)">C5</text><text transform="matrix(0.1138 -0.0187 0.0276 0.1049 375.0 265.8)">C7</text><text transform="matrix(0.1229 -0.0212 0.0375 0.1050 319.1 286.2)">D2</text><text transform="matrix(0.1183 -0.0204 0.0330 0.1037 343.2 282.1)">D4</text><text transform="matrix(0.1139 -0.0197 0.0288 0.1024 366.4 278.1)">D6</text><text transform="matrix(0.1098 -0.0190 0.0248 0.1011 388.8 274.2)">D8</text><text transform="matrix(0.1229 -0.0223 0.0386 0.1023 310.6 298.8)">E1</text><text transform="matrix(0.1183 -0.0215 0.0341 0.1011 334.7 294.4)">E3</text><text transform="matrix(0.1140 -0.0207 0.0299 0.0999 357.9 290.2)">E5</text><text transform="matrix(0.1099 -0.0199 0.0260 0.0987 380.3 286.1)">E7</text><text transform="matrix(0.1184 -0.0225 0.0352 0.0986 326.3 306.6)">F2</text><text transform="matrix(0.1141 -0.0216 0.0310 0.0974 349.6 302.2)">F4</text><text transform="matrix(0.1100 -0.0209 0.0271 0.0963 372.0 297.9)">F6</text><text transform="matrix(0.1061 -0.0201 0.0234 0.0952 393.6 293.8)">F8</text><text transform="matrix(0.1184 -0.0234 0.0363 0.0961 318.1 318.6)">G1</text><text transform="matrix(0.1141 -0.0226 0.0321 0.0950 341.3 314.0)">G3</text><text transform="matrix(0.1101 -0.0218 0.0281 0.0940 363.7 309.6)">G5</text><text transform="matrix(0.1062 -0.0210 0.0245 0.0930 385.4 305.3)">G7</text><text transform="matrix(0.1142 -0.0235 0.0331 0.0927 333.2 325.7)">H2</text><text transform="matrix(0.1101 -0.0227 0.0292 0.0917 355.6 321.1)">H4</text><text transform="matrix(0.1063 -0.0219 0.0255 0.0908 377.2 316.6)">H6</text><text transform="matrix(0.1027 -0.0212 0.0221 0.0898 398.1 312.3)">H8</text></g><g fill="#adadad"><text transform="matrix(0.1303 -0.0189 0.0414 0.1159 307.2 253.1)">A2</text><text transform="matrix(0.1252 -0.0182 0.0364 0.1143 332.8 249.4)">A4</text><text transform="matrix(0.1204 -0.0175 0.0316 0.1126 357.3 245.8)">A6</text><text transform="matrix(0.1158 -0.0168 0.0273 0.1110 381.0 242.4)">A8</text><text transform="matrix(0.1303 -0.0202 0.0426 0.1129 298.4 266.5)">B1</text><text transform="matrix(0.1252 -0.0194 0.0376 0.1113 324.0 262.6)">B3</text><text transform="matrix(0.1204 -0.0186 0.0329 0.1098 348.5 258.8)">B5</text><text transform="matrix(0.1159 -0.0179 0.0285 0.1083 372.2 255.1)">B7</text><text transform="matrix(0.1253 -0.0205 0.0387 0.1085 315.3 275.6)">C2</text><text transform="matrix(0.1205 -0.0197 0.0341 0.1070 339.8 271.5)">C4</text><text transform="matrix(0.1160 -0.0190 0.0297 0.1056 363.5 267.7)">C6</text><text transform="matrix(0.1117 -0.0183 0.0256 0.1042 386.2 263.9)">C8</text><text transform="matrix(0.1253 -0.0216 0.0399 0.1057 306.7 288.4)">D1</text><text transform="matrix(0.1206 -0.0208 0.0352 0.1043 331.2 284.1)">D3</text><text transform="matrix(0.1161 -0.0200 0.0308 0.1030 354.9 280.0)">D5</text><text transform="matrix(0.1118 -0.0193 0.0268 0.1017 377.7 276.1)">D7</text><text transform="matrix(0.1206 -0.0219 0.0363 0.1017 322.8 296.6)">E2</text><text transform="matrix(0.1161 -0.0211 0.0320 0.1005 346.4 292.3)">E4</text><text transform="matrix(0.1119 -0.0203 0.0279 0.0993 369.2 288.1)">E6</text><text transform="matrix(0.1079 -0.0196 0.0241 0.0981 391.2 284.1)">E8</text><text transform="matrix(0.1206 -0.0229 0.0374 0.0991 314.4 308.8)">F1</text><text transform="matrix(0.1162 -0.0221 0.0331 0.0980 338.1 304.3)">F3</text><text transform="matrix(0.1120 -0.0213 0.0290 0.0969 360.9 300.0)">F5</text><text transform="matrix(0.1080 -0.0205 0.0252 0.0957 382.9 295.8)">F7</text><text transform="matrix(0.1162 -0.0230 0.0341 0.0955 329.8 316.3)">G2</text><text transform="matrix(0.1121 -0.0222 0.0301 0.0945 352.6 311.8)">G4</text><text transform="matrix(0.1081 -0.0214 0.0263 0.0935 374.6 307.4)">G6</text><text transform="matrix(0.1044 -0.0207 0.0227 0.0924 395.9 303.2)">G8</text><text transform="matrix(0.1163 -0.0240 0.0352 0.0932 321.6 328.1)">H1</text><text transform="matrix(0.1121 -0.0231 0.0311 0.0922 344.5 323.4)">H3</text><text transform="matrix(0.1082 -0.0223 0.0273 0.0912 366.5 318.8)">H5</text><text transform="matrix(0.1045 -0.0215 0.0238 0.0903 387.8 314.4)">H7</text></g></g><defs><linearGradient id="bxsh" x1="0" y1="0" x2="0" y2="1"><stop offset="0.6" stop-color="#000" stop-opacity="0"/><stop offset="1" stop-color="#000" stop-opacity="0.12"/></linearGradient></defs><polygon points="285.1,250.1 385.4,236.0 404.3,315.7 317.6,333.9" fill="url(#bxsh)"/><polygon points="336.5,269.5 351,267.5 352.5,280.5 338,282.5" fill="#d4d4d4" stroke="#454545" stroke-width="2.6" stroke-linejoin="round"/><polygon points="566.1,253.8 609.5,255.3 607.4,273.4 565.1,270.8" fill="#e6e6e6"/><path fill="#c4c4c4" d="M571.2 254.0L576.4 254.2L576.3 256.4L571.1 256.2ZM581.7 254.3L587.1 254.5L586.9 256.8L581.5 256.6ZM592.5 254.7L598.1 254.9L597.9 257.2L592.3 257.0ZM603.8 255.1L609.5 255.3L609.2 257.6L603.5 257.4ZM566.0 256.0L571.1 256.2L570.9 258.3L565.8 258.1ZM576.3 256.4L581.5 256.6L581.4 258.8L576.1 258.5ZM586.9 256.8L592.3 257.0L592.1 259.2L586.7 259.0ZM597.9 257.2L603.5 257.4L603.3 259.7L597.6 259.4ZM570.9 258.3L576.1 258.5L575.9 260.7L570.8 260.5ZM581.4 258.8L586.7 259.0L586.5 261.2L581.2 261.0ZM592.1 259.2L597.6 259.4L597.4 261.7L591.9 261.4ZM603.3 259.7L609.0 259.9L608.7 262.2L603.0 261.9ZM565.7 260.3L570.8 260.5L570.7 262.6L565.6 262.4ZM575.9 260.7L581.2 261.0L581.0 263.1L575.8 262.9ZM586.5 261.2L591.9 261.4L591.7 263.7L586.3 263.4ZM597.4 261.7L603.0 261.9L602.8 264.2L597.2 263.9ZM570.7 262.6L575.8 262.9L575.6 265.0L570.5 264.8ZM581.0 263.1L586.3 263.4L586.1 265.6L580.8 265.3ZM591.7 263.7L597.2 263.9L597.0 266.1L591.5 265.9ZM602.8 264.2L608.4 264.5L608.2 266.7L602.5 266.4ZM565.5 264.5L570.5 264.8L570.4 266.9L565.3 266.6ZM575.6 265.0L580.8 265.3L580.7 267.5L575.5 267.2ZM586.1 265.6L591.5 265.9L591.3 268.0L585.9 267.8ZM597.0 266.1L602.5 266.4L602.3 268.6L596.7 268.3ZM570.4 266.9L575.5 267.2L575.3 269.3L570.2 269.0ZM580.7 267.5L585.9 267.8L585.8 269.9L580.5 269.6ZM591.3 268.0L596.7 268.3L596.5 270.5L591.1 270.2ZM602.3 268.6L607.9 269.0L607.7 271.2L602.0 270.9ZM565.2 268.7L570.2 269.0L570.1 271.1L565.1 270.8ZM575.3 269.3L580.5 269.6L580.3 271.7L575.2 271.4ZM585.8 269.9L591.1 270.2L590.9 272.4L585.6 272.1ZM596.5 270.5L602.0 270.9L601.8 273.1L596.3 272.7Z"/><polygon points="565.1,270.8 607.4,273.4 605.4,309.0 563.6,306.9" fill="#a6a6a6"/><path fill="#7c7c7c" d="M570.4 271.1L575.8 271.5L575.6 276.0L570.3 275.7ZM581.1 271.8L586.4 272.1L586.2 276.6L580.9 276.3ZM591.7 272.4L596.9 272.8L596.7 277.3L591.4 277.0ZM602.2 273.1L607.4 273.4L607.1 277.9L601.9 277.6ZM564.9 275.4L570.3 275.7L570.1 280.2L564.7 279.9ZM575.6 276.0L580.9 276.3L580.7 280.8L575.4 280.5ZM586.2 276.6L591.4 277.0L591.2 281.5L585.9 281.2ZM596.7 277.3L601.9 277.6L601.7 282.1L596.5 281.8ZM570.1 280.2L575.4 280.5L575.2 285.1L569.9 284.7ZM580.7 280.8L585.9 281.2L585.7 285.7L580.5 285.4ZM591.2 281.5L596.5 281.8L596.2 286.3L591.0 286.0ZM601.7 282.1L606.9 282.4L606.6 286.9L601.4 286.6ZM564.5 284.4L569.9 284.7L569.7 289.3L564.3 289.0ZM575.2 285.1L580.5 285.4L580.2 289.9L575.0 289.6ZM585.7 285.7L591.0 286.0L590.8 290.4L585.5 290.1ZM596.2 286.3L601.4 286.6L601.2 291.0L596.0 290.7ZM569.7 289.3L575.0 289.6L574.8 294.0L569.5 293.8ZM580.2 289.9L585.5 290.1L585.3 294.6L580.0 294.3ZM590.8 290.4L596.0 290.7L595.8 295.2L590.5 294.9ZM601.2 291.0L606.4 291.3L606.1 295.8L601.0 295.5ZM564.2 293.5L569.5 293.8L569.3 298.2L564.0 298.0ZM574.8 294.0L580.0 294.3L579.8 298.8L574.6 298.5ZM585.3 294.6L590.5 294.9L590.3 299.4L585.1 299.1ZM595.8 295.2L601.0 295.5L600.7 299.9L595.5 299.6ZM569.3 298.2L574.6 298.5L574.4 303.0L569.1 302.7ZM579.8 298.8L585.1 299.1L584.9 303.5L579.6 303.3ZM590.3 299.4L595.5 299.6L595.3 304.1L590.1 303.8ZM600.7 299.9L605.9 300.2L605.6 304.6L600.5 304.3ZM563.8 302.4L569.1 302.7L568.9 307.2L563.6 306.9ZM574.4 303.0L579.6 303.3L579.4 307.7L574.2 307.4ZM584.9 303.5L590.1 303.8L589.9 308.2L584.6 308.0ZM595.3 304.1L600.5 304.3L600.2 308.7L595.1 308.5Z"/><g font-family="Liberation Sans" font-weight="bold" font-size="40" text-anchor="middle" dominant-baseline="central"><g fill="#969696"><text transform="matrix(0.0534 0.0032 -0.0019 0.0456 567.7 273.2)">A1</text><text transform="matrix(0.0531 0.0032 -0.0021 0.0454 578.3 273.9)">A3</text><text transform="matrix(0.0527 0.0032 -0.0023 0.0453 588.9 274.5)">A5</text><text transform="matrix(0.0524 0.0032 -0.0024 0.0451 599.4 275.2)">A7</text><text transform="matrix(0.0532 0.0032 -0.0020 0.0454 572.8 278.1)">B2</text><text transform="matrix(0.0528 0.0031 -0.0022 0.0452 583.4 278.7)">B4</text><text transform="matrix(0.0525 0.0031 -0.0023 0.0450 594.0 279.4)">B6</text><text transform="matrix(0.0522 0.0031 -0.0025 0.0449 604.4 280.0)">B8</text><text transform="matrix(0.0533 0.0031 -0.0019 0.0453 567.3 282.3)">C1</text><text transform="matrix(0.0529 0.0031 -0.0021 0.0451 577.9 282.9)">C3</text><text transform="matrix(0.0526 0.0030 -0.0022 0.0450 588.5 283.6)">C5</text><text transform="matrix(0.0522 0.0030 -0.0024 0.0448 599.0 284.2)">C7</text><text transform="matrix(0.0530 0.0030 -0.0020 0.0451 572.4 287.2)">D2</text><text transform="matrix(0.0527 0.0030 -0.0022 0.0449 583.0 287.8)">D4</text><text transform="matrix(0.0523 0.0030 -0.0023 0.0448 593.5 288.3)">D6</text><text transform="matrix(0.0520 0.0029 -0.0025 0.0446 603.9 288.9)">D8</text><text transform="matrix(0.0531 0.0029 -0.0019 0.0450 566.9 291.4)">E1</text><text transform="matrix(0.0528 0.0029 -0.0021 0.0449 577.5 291.9)">E3</text><text transform="matrix(0.0524 0.0029 -0.0022 0.0447 588.0 292.5)">E5</text><text transform="matrix(0.0521 0.0029 -0.0024 0.0445 598.5 293.1)">E7</text><text transform="matrix(0.0529 0.0028 -0.0020 0.0448 572.0 296.1)">F2</text><text transform="matrix(0.0525 0.0028 -0.0021 0.0446 582.6 296.7)">F4</text><text transform="matrix(0.0522 0.0028 -0.0023 0.0445 593.0 297.3)">F6</text><text transform="matrix(0.0518 0.0028 -0.0025 0.0443 603.4 297.8)">F8</text><text transform="matrix(0.0530 0.0028 -0.0019 0.0447 566.5 300.3)">G1</text><text transform="matrix(0.0526 0.0028 -0.0021 0.0446 577.1 300.9)">G3</text><text transform="matrix(0.0523 0.0027 -0.0022 0.0444 587.6 301.4)">G5</text><text transform="matrix(0.0519 0.0027 -0.0024 0.0443 598.0 302.0)">G7</text><text transform="matrix(0.0527 0.0027 -0.0020 0.0445 571.6 305.1)">H2</text><text transform="matrix(0.0524 0.0027 -0.0021 0.0444 582.1 305.6)">H4</text><text transform="matrix(0.0520 0.0027 -0.0023 0.0442 592.6 306.1)">H6</text><text transform="matrix(0.0517 0.0026 -0.0024 0.0441 602.9 306.7)">H8</text></g><g fill="#8a8a8a"><text transform="matrix(0.0533 0.0032 -0.0020 0.0455 573.0 273.6)">A2</text><text transform="matrix(0.0529 0.0032 -0.0022 0.0453 583.6 274.2)">A4</text><text transform="matrix(0.0526 0.0032 -0.0023 0.0452 594.2 274.9)">A6</text><text transform="matrix(0.0522 0.0032 -0.0025 0.0450 604.7 275.5)">A8</text><text transform="matrix(0.0534 0.0032 -0.0019 0.0454 567.5 277.8)">B1</text><text transform="matrix(0.0530 0.0031 -0.0021 0.0453 578.1 278.4)">B3</text><text transform="matrix(0.0527 0.0031 -0.0022 0.0451 588.7 279.1)">B5</text><text transform="matrix(0.0523 0.0031 -0.0024 0.0450 599.2 279.7)">B7</text><text transform="matrix(0.0531 0.0031 -0.0020 0.0452 572.6 282.6)">C2</text><text transform="matrix(0.0528 0.0031 -0.0022 0.0451 583.2 283.3)">C4</text><text transform="matrix(0.0524 0.0030 -0.0023 0.0449 593.7 283.9)">C6</text><text transform="matrix(0.0521 0.0030 -0.0025 0.0447 604.2 284.5)">C8</text><text transform="matrix(0.0532 0.0030 -0.0019 0.0452 567.1 286.9)">D1</text><text transform="matrix(0.0529 0.0030 -0.0021 0.0450 577.7 287.5)">D3</text><text transform="matrix(0.0525 0.0030 -0.0022 0.0448 588.2 288.1)">D5</text><text transform="matrix(0.0522 0.0029 -0.0024 0.0447 598.7 288.6)">D7</text><text transform="matrix(0.0530 0.0029 -0.0020 0.0449 572.2 291.7)">E2</text><text transform="matrix(0.0526 0.0029 -0.0021 0.0448 582.8 292.2)">E4</text><text transform="matrix(0.0523 0.0029 -0.0023 0.0446 593.3 292.8)">E6</text><text transform="matrix(0.0519 0.0029 -0.0025 0.0445 603.7 293.4)">E8</text><text transform="matrix(0.0530 0.0028 -0.0019 0.0449 566.7 295.9)">F1</text><text transform="matrix(0.0527 0.0028 -0.0021 0.0447 577.3 296.4)">F3</text><text transform="matrix(0.0524 0.0028 -0.0022 0.0446 587.8 297.0)">F5</text><text transform="matrix(0.0520 0.0028 -0.0024 0.0444 598.2 297.6)">F7</text><text transform="matrix(0.0528 0.0028 -0.0020 0.0447 571.8 300.6)">G2</text><text transform="matrix(0.0524 0.0027 -0.0021 0.0445 582.3 301.2)">G4</text><text transform="matrix(0.0521 0.0027 -0.0023 0.0443 592.8 301.7)">G6</text><text transform="matrix(0.0518 0.0027 -0.0024 0.0442 603.2 302.3)">G8</text><text transform="matrix(0.0529 0.0027 -0.0019 0.0446 566.3 304.8)">H1</text><text transform="matrix(0.0525 0.0027 -0.0021 0.0444 576.9 305.3)">H3</text><text transform="matrix(0.0522 0.0027 -0.0022 0.0443 587.4 305.9)">H5</text><text transform="matrix(0.0519 0.0026 -0.0024 0.0441 597.8 306.4)">H7</text></g></g><defs><pattern id="cylp" patternUnits="userSpaceOnUse" width="12" height="10" patternTransform="translate(706 346) rotate(20) skewX(-12)"><rect width="12" height="10" fill="#b2b2b2"/><rect width="6" height="5" fill="#828282"/><rect x="6" y="5" width="6" height="5" fill="#828282"/></pattern><pattern id="cyltop" patternUnits="userSpaceOnUse" width="10" height="8" patternTransform="translate(720 340) rotate(22) skewX(-30)"><rect width="10" height="8" fill="#e2e2e2"/><rect width="5" height="4" fill="#c4c4c4"/><rect x="5" y="4" width="5" height="4" fill="#c4c4c4"/></pattern><linearGradient id="cylsh" x1="0" x2="1"><stop offset="0" stop-color="#000" stop-opacity="0.15"/><stop offset="0.5" stop-color="#000" stop-opacity="0"/><stop offset="1" stop-color="#fff" stop-opacity="0.1"/></linearGradient></defs><path d="M775.1 356.1L774.5 357.8L773.3 359.3L771.7 360.6L769.7 361.7L767.2 362.6L764.4 363.3L761.3 363.7L758.0 363.9L754.4 363.8L750.8 363.5L747.0 362.9L743.2 362.1L739.5 361.1L735.9 359.8L732.5 358.4L729.4 356.8L726.5 355.0L724.0 353.2L721.8 351.3L720.1 349.4L718.8 347.4L718.0 345.5L717.7 343.6L717.9 341.9L707.4 386.9L707.2 388.6L707.5 390.5L708.3 392.4L709.6 394.4L711.3 396.3L713.5 398.2L716.0 400.0L718.9 401.8L722.0 403.4L725.4 404.8L729.0 406.1L732.7 407.1L736.5 407.9L740.3 408.5L743.9 408.8L747.5 408.9L750.8 408.7L753.9 408.3L756.7 407.6L759.2 406.7L761.2 405.6L762.8 404.3L764.0 402.8L764.6 401.1Z" fill="url(#cylp)"/><path d="M775.1 356.1L774.5 357.8L773.3 359.3L771.7 360.6L769.7 361.7L767.2 362.6L764.4 363.3L761.3 363.7L758.0 363.9L754.4 363.8L750.8 363.5L747.0 362.9L743.2 362.1L739.5 361.1L735.9 359.8L732.5 358.4L729.4 356.8L726.5 355.0L724.0 353.2L721.8 351.3L720.1 349.4L718.8 347.4L718.0 345.5L717.7 343.6L717.9 341.9L707.4 386.9L707.2 388.6L707.5 390.5L708.3 392.4L709.6 394.4L711.3 396.3L713.5 398.2L716.0 400.0L718.9 401.8L722.0 403.4L725.4 404.8L729.0 406.1L732.7 407.1L736.5 407.9L740.3 408.5L743.9 408.8L747.5 408.9L750.8 408.7L753.9 408.3L756.7 407.6L759.2 406.7L761.2 405.6L762.8 404.3L764.0 402.8L764.6 401.1Z" fill="url(#cylsh)"/><path d="M775.1 356.1L774.5 357.8L773.3 359.3L771.7 360.6L769.7 361.7L767.2 362.6L764.4 363.3L761.3 363.7L758.0 363.9L754.4 363.8L750.8 363.5L747.0 362.9L743.2 362.1L739.5 361.1L735.9 359.8L732.5 358.4L729.4 356.8L726.5 355.0L724.0 353.2L721.8 351.3L720.1 349.4L718.8 347.4L718.0 345.5L717.7 343.6L717.9 341.9L718.5 340.2L719.7 338.7L721.3 337.4L723.3 336.3L725.8 335.4L728.6 334.7L731.7 334.3L735.0 334.1L738.6 334.2L742.2 334.5L746.0 335.1L749.8 335.9L753.5 336.9L757.1 338.2L760.5 339.6L763.6 341.2L766.5 343.0L769.0 344.8L771.2 346.7L772.9 348.6L774.2 350.6L775.0 352.5L775.3 354.4Z" fill="url(#cyltop)"/><polygon points="677.7,188.1 681.9,197.5 691.7,200.7 684.0,207.6 684.0,217.9 675.1,212.8 665.3,215.9 667.4,205.8 661.4,197.5 671.6,196.4" fill="#efdc90" opacity="0.6" stroke="#e8c860" stroke-width="1" /><polygon points="691.6,183.2 698.4,191.7 709.3,192.5 703.2,201.6 705.8,212.2 695.3,209.3 686.0,215.0 685.6,204.1 677.3,197.0 687.5,193.3" fill="#efdc90" opacity="0.6" stroke="#e8c860" stroke-width="1" /><polygon points="713.7,192.4 717.4,203.4 727.9,208.1 718.6,214.9 717.3,226.4 707.9,219.7 696.6,222.0 700.2,211.0 694.4,201.0 706.0,201.0" fill="#efdc90" opacity="0.6" stroke="#e8c860" stroke-width="1" /><polygon points="724.4,200.1 731.1,209.5 742.6,211.0 735.6,220.2 737.8,231.6 726.9,227.9 716.7,233.4 716.9,221.9 708.5,214.0 719.5,210.5" fill="#efdc90" opacity="0.6" stroke="#e8c860" stroke-width="1" /><polygon points="743.1,213.9 744.8,223.4 753.0,228.5 744.5,233.1 742.1,242.4 735.2,235.8 725.6,236.4 729.8,227.7 726.2,218.8 735.7,220.1" fill="#efdc90" opacity="0.6" stroke="#e8c860" stroke-width="1" /><polygon points="666.0,222.0 670.5,229.8 679.3,231.7 673.3,238.4 674.2,247.3 666.0,243.7 657.8,247.3 658.7,238.4 652.7,231.7 661.5,229.8" fill="#efdc90" opacity="0.6" stroke="#e8c860" stroke-width="1" /><polygon points="664,240 680,222 696,222 712,248 718,262 712,282 700,298 692,324 670,330 662,300 660,270" fill="#f6cb24"/><polygon points="692.1,207.7 696.7,218.5 707.7,222.8 698.8,230.5 698.2,242.3 688.1,236.3 676.6,239.3 679.3,227.8 672.9,217.9 684.6,216.9" fill="#f6cb24" stroke="#efa820" stroke-width="1.8" stroke-linejoin="round"/><polygon points="673.5,224.1 681.2,234.3 693.9,235.9 686.6,246.3 689.0,258.9 676.8,255.1 665.6,261.3 665.4,248.6 656.0,239.8 668.1,235.7" fill="#f6cb24" stroke="#efa820" stroke-width="1.8" stroke-linejoin="round"/><polygon points="707.6,231.6 711.5,244.4 723.4,250.5 712.5,258.2 710.4,271.5 699.7,263.4 686.4,265.5 690.8,252.8 684.7,240.9 698.1,241.1" fill="#f6cb24" stroke="#efa820" stroke-width="1.8" stroke-linejoin="round"/><polygon points="667.7,251.8 675.7,260.9 687.8,261.6 681.5,272.0 684.7,283.7 672.8,281.0 662.7,287.6 661.6,275.5 652.2,267.9 663.3,263.1" fill="#f6cb24" stroke="#efa820" stroke-width="1.8" stroke-linejoin="round"/><polygon points="702.2,251.5 708.3,263.4 721.1,267.3 711.6,276.8 711.8,290.2 699.9,284.1 687.2,288.5 689.3,275.2 681.2,264.5 694.5,262.4" fill="#f6cb24" stroke="#efa820" stroke-width="1.8" stroke-linejoin="round"/><polygon points="679.0,268.2 681.9,280.6 692.8,287.2 681.9,293.8 679.0,306.2 669.3,297.9 656.6,299.0 661.6,287.2 656.6,275.4 669.3,276.5" fill="#f6cb24" stroke="#efa820" stroke-width="1.8" stroke-linejoin="round"/><polygon points="691.9,271.0 698.5,280.5 709.9,282.3 703.0,291.4 704.8,302.8 693.9,299.1 683.7,304.3 683.9,292.8 675.7,284.6 686.7,281.3" fill="#f6cb24" stroke="#efa820" stroke-width="1.8" stroke-linejoin="round"/><polygon points="674.5,284.3 679.1,296.2 690.8,301.2 680.9,309.3 679.8,322.0 669.1,315.0 656.6,317.9 659.9,305.6 653.3,294.6 666.1,293.9" fill="#f6cb24" stroke="#efa820" stroke-width="1.8" stroke-linejoin="round"/><polygon points="685.8,295.3 691.1,304.1 701.0,306.4 694.3,314.1 695.2,324.2 685.8,320.3 676.4,324.2 677.3,314.1 670.6,306.4 680.5,304.1" fill="#f6cb24" stroke="#efa820" stroke-width="1.8" stroke-linejoin="round"/><polygon points="672.9,307.3 679.4,314.3 689.0,314.5 684.4,322.9 687.1,332.0 677.7,330.2 669.9,335.7 668.7,326.2 661.1,320.4 669.8,316.4" fill="#f6cb24" stroke="#efa820" stroke-width="1.8" stroke-linejoin="round"/><polygon points="693.4,316.6 694.6,322.9 700.0,326.3 694.4,329.4 692.8,335.6 688.1,331.3 681.7,331.6 684.4,325.8 682.1,319.8 688.5,320.6" fill="#f6cb24" stroke="#efa820" stroke-width="1.8" stroke-linejoin="round"/><circle cx="668.5" cy="335" r="10" fill="#f4eec0" opacity="0.9" filter="url(#bl1)"/><circle cx="668.5" cy="331" r="3" fill="#5a5a3a"/><circle cx="665" cy="337.5" r="3" fill="#5a5a3a"/><circle cx="672" cy="337.5" r="3" fill="#5a5a3a"/><circle cx="413" cy="394" r="11" fill="#f6f6f6" opacity="0.95" filter="url(#bl1)"/><rect x="406" y="389.5" width="10" height="10" fill="#8a8a8a"/><path d="M415.5 394.5L420.5 389V400Z" fill="#8a8a8a"/><ellipse cx="352" cy="505" rx="26" ry="30" fill="#000" opacity="0.05" filter="url(#bl2)"/><polygon points="349.5,507.6 356,510 360,524 357,527 353,522" fill="#5a3c2c" /><polygon points="353.5,522 360,521.5 362.5,527.5 355,529" fill="#c4c4c4" /><polygon points="350.5,507.9 357.7,513.7 363.5,515.1 367.8,520.9 372.1,529.6 369.2,532.5 364.9,528.1 359.1,522.3 353.3,515.1" fill="#5e3f2e" /><polygon points="365.6,532.5 375,526.7 385.1,524.5 386.6,528.1 379.3,533.9 367.8,538.2" fill="#a9a9a9" /><polygon points="341.8,500.7 360.6,497.8 367.8,503.6 370,512.2 364.9,515.8 357.7,513.7 349,507.9" fill="#5e8db2" /><polygon points="353.3,484.8 359.1,486.2 367.1,497.8 369.2,505 366.3,506.5 362,499.2 356.2,490.6" fill="#6e4c38" /><defs><linearGradient id="shirt" x1="0" y1="0" x2="0.3" y2="1"><stop offset="0" stop-color="#e02020"/><stop offset="0.6" stop-color="#cc1616"/><stop offset="1" stop-color="#a00e0e"/></linearGradient></defs><polygon points="320.8,468.9 325.9,464.6 333.1,467.4 341.1,466.7 347.6,468.9 353.3,476.1 357.7,486.2 356.2,489.1 359.8,497.8 354.8,502.1 346.1,502.8 340.3,497.8 336,490.6 327.3,480.5" fill="url(#shirt)" /><polygon points="340.3,497.8 346.1,502.8 354.8,502.1 359.8,497.8 356,490 345,495" fill="#b01212" /><ellipse cx="341" cy="465" rx="3" ry="4" fill="#7a5540"/><path d="M324 452Q328 446 336 447Q344 449 343 457Q343 466 336 469Q328 469 324 463Q322 457 324 452Z" fill="#2e2118"/><path d="M326 451L329 453M331 448L333 451M337 449L338 452M341 453L339 455M325 458L328 459M329 463L331 461M335 466L336 463" stroke="#4a3626" stroke-width="1"/><circle cx="710" cy="123" r="12" fill="#f6f6f6" opacity="0.75" filter="url(#bl2)"/><circle cx="740" cy="123" r="12" fill="#f6f6f6" opacity="0.75" filter="url(#bl2)"/><circle cx="770" cy="123" r="12" fill="#f6f6f6" opacity="0.75" filter="url(#bl2)"/><circle cx="800" cy="123" r="12" fill="#f6f6f6" opacity="0.75" filter="url(#bl2)"/><rect x="703.5" y="117.5" width="13" height="9" fill="none" stroke="#858585" stroke-width="1.6"/><rect x="706" y="128" width="8" height="1.8" fill="#858585"/><rect x="709" y="126" width="2" height="2.5" fill="#858585"/><circle cx="739.8" cy="123" r="3.6" fill="#858585"/><path d="M744.8 123.0L748.3 123.0M743.3 126.5L745.8 129.0M739.8 128.0L739.8 131.5M736.3 126.5L733.8 129.0M734.8 123.0L731.3 123.0M736.3 119.5L733.8 117.0M739.8 118.0L739.8 114.5M743.3 119.5L745.8 117.0" stroke="#858585" stroke-width="1.5"/><circle cx="770" cy="123" r="3.6" fill="#858585"/><path d="M775.0 123.0L778.5 123.0M773.5 126.5L776.0 129.0M770.0 128.0L770.0 131.5M766.5 126.5L764.0 129.0M765.0 123.0L761.5 123.0M766.5 119.5L764.0 117.0M770.0 118.0L770.0 114.5M773.5 119.5L776.0 117.0" stroke="#858585" stroke-width="1.5"/><rect x="793" y="118" width="9" height="10.5" fill="#858585"/><path d="M801 123L807 118V128.5Z" fill="#858585"/><text x="250.5" y="690" font-family="Liberation Sans" font-size="15.2" fill="#1f2cff">www.historian.by</text></svg></div><div class="a" style="left:825px;top:59px;width:195px;height:210px;background:#353535;border:1px solid #4b4b4b;"></div><div class="a" style="left:826px;top:60px;width:193px;height:19px;background:#0a0a0a;"></div><div class="t" style="left:830px;top:63.84px;font-size:12px;color:#a5a39e;">Объекты</div><svg style="left:974px;top:67px" width="8" height="5" viewBox="0 0 8 5"><path d="M0 0H8L4 5Z" fill="#b0b0b0"/></svg><svg style="left:988px;top:64px" width="9" height="12" viewBox="0 0 9 12"><path d="M2 0.5H7M3 0.5V6M6 0.5V6M1 6.5H8M4.5 7V11.5" stroke="#b0b0b0" stroke-width="1.2" fill="none"/></svg><svg style="left:1003px;top:65px" width="10" height="10" viewBox="0 0 10 10"><path d="M1 1L9 9M9 1L1 9" stroke="#b8b8b8" stroke-width="1.8"/></svg><svg style="left:824px;top:79px" width="200" height="24" viewBox="824 79 200 24"><g transform="translate(829 84)"><path d="M1 1L8 8" stroke="#9a9a9a" stroke-width="1"/><path d="M8 8L14.5 14.5" stroke="#3a8fe0" stroke-width="2.6"/><path d="M1.5 14.5L11 5" stroke="#f0f0f0" stroke-width="2"/><path d="M11.5 1A3.5 3.5 0 1 0 15 4.5" stroke="#f0f0f0" stroke-width="2.2" fill="none"/><circle cx="1.8" cy="14.2" r="1.6" fill="#f0f0f0"/></g><path d="M850 89L855 84L859.5 88.5L854.5 93.5Z" fill="#e0c040" stroke="#a08020" stroke-width="0.6"/><path d="M856 91V97H858" stroke="#aaa" fill="none"/><rect x="858.5" y="90" width="4.5" height="4.5" fill="#40b0f0" transform="rotate(45 860.75 92.25)"/><rect x="858.5" y="95.5" width="4.5" height="4.5" fill="#f060c0" transform="rotate(45 860.75 97.75)"/><rect x="870" y="83" width="1" height="18" fill="#262626"/><rect x="916" y="83" width="1" height="18" fill="#262626"/><path d="M874.5 84.5H882.5L886.5 88.5V99.5H874.5Z" fill="#f2f2f2" stroke="#cfcfcf" stroke-width="0.6"/><path d="M880 98L889 89L891 91L882 100Z" fill="#f0a040"/><path d="M889 89L891 91" stroke="#f06090" stroke-width="2"/><rect x="899" y="84" width="12" height="10" fill="#3d8fd8"/><rect x="900" y="86" width="10" height="7" fill="#cfe6fb"/><rect x="896" y="88" width="12" height="11" fill="#4a9be5"/><rect x="897" y="90.5" width="10" height="7.5" fill="#dbeefe"/><path d="M921 84.5H929L933 88.5V99.5H921Z" fill="#f2f2f2" stroke="#cfcfcf" stroke-width="0.6"/><polygon points="932,90 933.4,93.3 937,93.5 934.3,95.7 935.2,99 932,97.2 928.8,99 929.7,95.7 927,93.5 930.6,93.3" fill="#f5c040" stroke="#e08a10" stroke-width="0.6"/><path d="M943.5 86L954 96.5M954 86L943.5 96.5" stroke="#7a7a7a" stroke-width="2.6"/><rect x="961" y="85" width="15.5" height="12" fill="#111" stroke="#e8e8e8" stroke-width="1.4"/><path d="M964 87.5H966M965 87.5V94.5M964 94.5H966" stroke="#ddd" stroke-width="0.8"/><path d="M982 84H988L990 86V96H982Z" fill="#6a6a6a"/><path d="M985.5 87.5H992L996 91.5V100H985.5Z" fill="#7e7e7e" stroke="#5a5a5a" stroke-width="0.6"/></svg><div class="a" style="left:826px;top:104px;width:193px;height:148px;background:#262626;"></div><div class="a" style="left:1002px;top:104px;width:17px;height:148px;background:#2e2e2e;"></div><div class="a" style="left:1002px;top:120px;width:17px;height:43px;background:#3a3a3a;"></div><svg style="left:1005px;top:109px" width="11" height="8" viewBox="0 0 11 8"><path d="M1 6L5.5 1.5L10 6" stroke="#9a9a9a" stroke-width="1.2" fill="none"/></svg><svg style="left:1005px;top:241px" width="11" height="8" viewBox="0 0 11 8"><path d="M1 1.5L5.5 6L10 1.5" stroke="#9a9a9a" stroke-width="1.2" fill="none"/></svg><div class="a" style="left:826px;top:104px;width:176px;height:18px;background:#3a3a3a;"></div><div class="a" style="left:826px;top:104px;width:176px;height:148px;overflow:hidden"><svg style="left:7px;top:5px" width="7" height="7" viewBox="0 0 7 7"><rect x="0" y="0" width="7" height="7" fill="#3a3a3a"/><path d="M1.5 3.5H5.5" stroke="#bbb" stroke-width="1"/></svg><svg style="left:21px;top:1px" width="14" height="15" viewBox="0 0 14 15"><rect x="0" y="0" width="14" height="15" fill="#62b8e8"/><path d="M0 5H14M5 0V15M10 0V15" stroke="#bfe4f8" stroke-width="1"/><path d="M4 14L7 7L10 14Z" fill="#111"/><rect x="10" y="1" width="3" height="3" fill="#e02020"/><rect x="0" y="9" width="3" height="6" fill="#f2d27a"/></svg><div class="t" style="left:41px;top:3.69px;font-size:11px;color:#e6e6e6;">'Корень' - Scene</div><svg style="left:39px;top:21px" width="16" height="12" viewBox="0 0 16 12"><rect x="0" y="2" width="11" height="9" fill="#9aa4ac"/><rect x="2" y="4" width="7" height="5" fill="#58b4ee"/><path d="M11 5L16 2V11L11 8Z" fill="#8d969e"/></svg><div class="t" style="left:61px;top:21.86px;font-size:10.8px;color:#e6e6e6;">Camera Editor - Camera</div><svg style="left:39px;top:39px" width="16" height="12" viewBox="0 0 16 12"><rect x="0" y="2" width="11" height="9" fill="#9aa4ac"/><rect x="2" y="4" width="7" height="5" fill="#58b4ee"/><path d="M11 5L16 2V11L11 8Z" fill="#8d969e"/></svg><div class="t" style="left:61px;top:39.86px;font-size:10.8px;color:#e6e6e6;">Camera Editor 2D - Camera</div><svg style="left:40px;top:55px" width="14" height="16" viewBox="0 0 14 16"><circle cx="7" cy="6" r="5.5" fill="#f6d66a" stroke="#c9a43a"/><rect x="4.5" y="11" width="5" height="4" fill="#a8a8a8"/></svg><div class="t" style="left:61px;top:57.86px;font-size:10.8px;color:#e6e6e6;">Ambient Light - Light</div><svg style="left:40px;top:73px" width="14" height="16" viewBox="0 0 14 16"><circle cx="7" cy="6" r="5.5" fill="#f6d66a" stroke="#c9a43a"/><rect x="4.5" y="11" width="5" height="4" fill="#a8a8a8"/></svg><div class="t" style="left:61px;top:75.86px;font-size:10.8px;color:#e6e6e6;">Directional Light - Light</div><svg style="left:39px;top:91px" width="16" height="15" viewBox="0 0 16 15"><rect x="0.5" y="0.5" width="15" height="14" fill="#fff" stroke="#7ab6e6"/><defs><linearGradient id="rg" x1="0" x2="1"><stop offset="0" stop-color="#ff4040"/><stop offset=".33" stop-color="#ffff40"/><stop offset=".66" stop-color="#40ff80"/><stop offset="1" stop-color="#4060ff"/></linearGradient></defs><rect x="2" y="2" width="12" height="11" fill="url(#rg)"/></svg><svg style="left:26px;top:95px" width="7" height="7" viewBox="0 0 7 7"><rect x="0" y="0" width="7" height="7" fill="#3a3a3a"/><path d="M1.5 3.5H5.5" stroke="#bbb" stroke-width="1"/><path d="M3.5 1.5V5.5" stroke="#bbb" stroke-width="1"/></svg><div class="t" style="left:61px;top:93.86px;font-size:10.8px;color:#e6e6e6;">Rendering Pipeline - Rendering</div><svg style="left:39px;top:111px" width="16" height="12" viewBox="0 0 16 12"><path d="M3 1H13Q16 1 16 6V11L12 9H4L0 11V6Q0 1 3 1Z" fill="#e8e8e8"/><rect x="3" y="4" width="3" height="3" fill="#3c3"/><circle cx="12" cy="5" r="1.3" fill="#c33"/></svg><div class="t" style="left:61px;top:111.86px;font-size:10.8px;color:#e6e6e6;">Game Mode - GameMode</div><svg style="left:39px;top:127px" width="16" height="15" viewBox="0 0 16 15"><path d="M8 0L16 3.5V11.5L8 15L0 11.5V3.5Z" fill="#8cc4ee"/><path d="M0 3.5L8 7L16 3.5M8 7V15" stroke="#d6ecfb" stroke-width="1" fill="none"/></svg><svg style="left:26px;top:131px" width="7" height="7" viewBox="0 0 7 7"><rect x="0" y="0" width="7" height="7" fill="#3a3a3a"/><path d="M1.5 3.5H5.5" stroke="#bbb" stroke-width="1"/><path d="M3.5 1.5V5.5" stroke="#bbb" stroke-width="1"/></svg><div class="t" style="left:61px;top:129.86px;font-size:10.8px;color:#e6e6e6;">Ground - MeshInSpace</div><svg style="left:39px;top:145px" width="16" height="15" viewBox="0 0 16 15"><path d="M8 0L16 3.5V11.5L8 15L0 11.5V3.5Z" fill="#8cc4ee"/><path d="M0 3.5L8 7L16 3.5M8 7V15" stroke="#d6ecfb" stroke-width="1" fill="none"/></svg></div><div class="a" style="left:826px;top:252px;width:193px;height:16px;background:#2e2e2e;"></div><div class="a" style="left:842px;top:252px;width:67px;height:16px;background:#3a3a3a;"></div><svg style="left:830px;top:255px" width="6" height="10" viewBox="0 0 6 10"><path d="M5 1L1 5L5 9" stroke="#9a9a9a" stroke-width="1.2" fill="none"/></svg><svg style="left:990px;top:255px" width="6" height="10" viewBox="0 0 6 10"><path d="M1 1L5 5L1 9" stroke="#9a9a9a" stroke-width="1.2" fill="none"/></svg><div class="a" style="left:825px;top:274px;width:195px;height:427px;background:#353535;border:1px solid #4b4b4b;"></div><div class="a" style="left:826px;top:275px;width:193px;height:19px;background:#0a0a0a;"></div><div class="t" style="left:830px;top:278.84px;font-size:12px;color:#a5a39e;">Настройки</div><svg style="left:974px;top:282px" width="8" height="5" viewBox="0 0 8 5"><path d="M0 0H8L4 5Z" fill="#b0b0b0"/></svg><svg style="left:988px;top:279px" width="9" height="12" viewBox="0 0 9 12"><path d="M2 0.5H7M3 0.5V6M6 0.5V6M1 6.5H8M4.5 7V11.5" stroke="#b0b0b0" stroke-width="1.2" fill="none"/></svg><svg style="left:1003px;top:280px" width="10" height="10" viewBox="0 0 10 10"><path d="M1 1L9 9M9 1L1 9" stroke="#b8b8b8" stroke-width="1.8"/></svg><div class="t" style="left:832px;top:301.84px;font-size:12px;color:#ffffff;font-weight:bold">Scene</div><div class="t" style="left:832px;top:322.27px;font-size:11.5px;color:#e6e6e6;">Scene</div><div class="a" style="left:829px;top:341px;width:19px;height:21px;background:#4a4a4a;"></div><svg style="left:831px;top:344px" width="16" height="15" viewBox="0 0 16 15"><rect x="0" y="2" width="15" height="12" fill="#fff" stroke="#6aaee0"/><rect x="1" y="3" width="13" height="2" fill="#5aa0e0"/><path d="M6 0L15 0L12 7L6 6Z" fill="#d8a070"/></svg><svg style="left:853px;top:344px" width="12" height="16" viewBox="0 0 12 16"><path d="M7 0L1 9H5L3 16L11 6H7L9 0Z" fill="#f4c420" stroke="#b8860b" stroke-width="0.6"/></svg><svg style="left:997px;top:299px" width="16" height="15" viewBox="0 0 16 15"><path d="M1 4L6 0L10 5L5 9Z" fill="#e8c640"/><rect x="9" y="6" width="5" height="4" fill="#40b8f0" transform="rotate(45 11.5 8)"/><rect x="9" y="10" width="5" height="4" fill="#f070c0" transform="rotate(45 11.5 12)"/></svg><div class="a" style="left:828px;top:365px;width:174px;height:286px;background:#353535;"></div><div class="a" style="left:1003px;top:365px;width:14px;height:286px;background:#2e2e2e;"></div><div class="a" style="left:1003px;top:382px;width:14px;height:42px;background:#3a3a3a;"></div><svg style="left:1005px;top:369px" width="11" height="8" viewBox="0 0 11 8"><path d="M1 6L5.5 1.5L10 6" stroke="#9a9a9a" stroke-width="1.2" fill="none"/></svg><svg style="left:1005px;top:641px" width="11" height="8" viewBox="0 0 11 8"><path d="M1 1.5L5.5 6L10 1.5" stroke="#9a9a9a" stroke-width="1.2" fill="none"/></svg><div class="a" style="left:828px;top:365px;width:174px;height:17px;background:#282828;"></div><div class="t" style="left:831px;top:368.27px;font-size:11.5px;color:#b8b8b8;">Компонент</div><div class="a" style="left:906px;top:382px;width:6px;height:93px;background:#3b3b3b;"></div><div class="t" style="left:847px;top:389.69px;font-size:11px;color:#e6e6e6;">Включено</div><div class="a" style="left:952px;top:388px;width:13px;height:13px;background:#2a2a2a;border:1px solid #9a9a9a;"></div><svg style="left:954px;top:390px" width="9" height="9" viewBox="0 0 9 9"><path d="M1 4.5L3.5 7L8 1.5" stroke="#fff" stroke-width="1.8" fill="none"/></svg><div class="t" style="left:847px;top:412.69px;font-size:11px;color:#e6e6e6;">Name</div><div class="a" style="left:951px;top:409px;width:49px;height:18px;background:#262626;border:1px solid #5a5a5a;"></div><div class="t" style="left:847px;top:435.69px;font-size:11px;color:#e6e6e6;">Screen L...</div><div class="a" style="left:926px;top:432px;width:22px;height:18px;background:#353535;border:1px solid #4e4e4e;"></div><div class="a" style="left:951px;top:432px;width:49px;height:18px;background:#353535;border:1px solid #5a5a5a;"></div><div class="t" style="left:955px;top:436.27px;font-size:11.5px;color:#e6e6e6;">Auto</div><svg style="left:989px;top:439px" width="8" height="5" viewBox="0 0 8 5"><path d="M0 0H8L4 5Z" fill="#b0b0b0"/></svg><div class="t" style="left:847px;top:458.69px;font-size:11px;color:#e6e6e6;">Network ...</div><div class="a" style="left:926px;top:455px;width:22px;height:18px;background:#353535;border:1px solid #4e4e4e;"></div><div class="a" style="left:951px;top:455px;width:49px;height:18px;background:#353535;border:1px solid #5a5a5a;"></div><div class="t" style="left:955px;top:459.27px;font-size:11.5px;color:#e6e6e6;">True</div><svg style="left:989px;top:462px" width="8" height="5" viewBox="0 0 8 5"><path d="M0 0H8L4 5Z" fill="#b0b0b0"/></svg><div class="a" style="left:828px;top:477px;width:174px;height:17px;background:#282828;"></div><div class="t" style="left:831px;top:480.27px;font-size:11.5px;color:#b8b8b8;">Сцена</div><div class="a" style="left:828px;top:494px;width:174px;height:157px;overflow:hidden"><div class="a" style="left:78px;top:0px;width:6px;height:157px;background:#3b3b3b;"></div><div class="t" style="left:19px;top:7.69px;font-size:11px;color:#e6e6e6;">Renderin...</div><svg style="left:88px;top:10px" width="5" height="5" viewBox="0 0 5 5"><circle cx="2.5" cy="2.5" r="2.3" fill="#8a8a8a"/></svg><div class="a" style="left:98px;top:4px;width:22px;height:18px;background:#353535;border:1px solid #4e4e4e;"></div><svg style="left:106px;top:9px" width="6" height="8" viewBox="0 0 6 8"><path d="M0 0L6 4L0 8Z" fill="#b0b0b0"/></svg><div class="t" style="left:127px;top:9.69px;font-size:11px;color:#e6e6e6;">Renderir</div><div class="t" style="left:19px;top:30.69px;font-size:11px;color:#e6e6e6;">Backgro...</div><div class="a" style="left:2px;top:29px;width:14px;height:14px;background:#353535;border:1px solid #4e4e4e;"></div><svg style="left:5px;top:33px" width="7" height="7" viewBox="0 0 7 7"><path d="M0.5 3.5H6.5M3.5 0.5V6.5" stroke="#ccc"/></svg><div class="a" style="left:98px;top:27px;width:22px;height:18px;background:#353535;border:1px solid #4e4e4e;"></div><div class="a" style="left:123px;top:27px;width:27px;height:18px;background:#262626;border:1px solid #5a5a5a;"></div><div class="t" style="left:127px;top:31.27px;font-size:11.5px;color:#e6e6e6;">1 1</div><div class="a" style="left:153px;top:28px;width:18px;height:16px;background:#ffffff;"></div><div class="t" style="left:19px;top:53.69px;font-size:11px;color:#e6e6e6;">Backgro...</div><div class="a" style="left:98px;top:50px;width:22px;height:18px;background:#353535;border:1px solid #4e4e4e;"></div><div class="a" style="left:123px;top:50px;width:49px;height:18px;background:#262626;border:1px solid #5a5a5a;"></div><div class="t" style="left:127px;top:54.27px;font-size:11.5px;color:#e6e6e6;">1</div><div class="t" style="left:19px;top:76.69px;font-size:11px;color:#e6e6e6;">UI Screen</div><div class="a" style="left:98px;top:73px;width:22px;height:18px;background:#353535;border:1px solid #4e4e4e;"></div><div class="t" style="left:127px;top:78.27px;font-size:11.5px;color:#e6e6e6;">(Null)</div><div class="t" style="left:19px;top:99.69px;font-size:11px;color:#e6e6e6;">Mode</div><div class="a" style="left:98px;top:96px;width:22px;height:18px;background:#353535;border:1px solid #4e4e4e;"></div><div class="a" style="left:123px;top:96px;width:49px;height:18px;background:#353535;border:1px solid #5a5a5a;"></div><div class="t" style="left:127px;top:100.27px;font-size:11.5px;color:#e6e6e6;">3D</div><svg style="left:161px;top:103px" width="8" height="5" viewBox="0 0 8 5"><path d="M0 0H8L4 5Z" fill="#b0b0b0"/></svg><div class="t" style="left:19px;top:122.69px;font-size:11px;color:#e6e6e6;">Screen ...</div><div class="a" style="left:98px;top:119px;width:22px;height:18px;background:#353535;border:1px solid #4e4e4e;"></div><div class="a" style="left:123px;top:119px;width:49px;height:18px;background:#353535;border:1px solid #5a5a5a;"></div><div class="t" style="left:127px;top:123.27px;font-size:11.5px;color:#e6e6e6;">Un...</div><svg style="left:161px;top:126px" width="8" height="5" viewBox="0 0 8 5"><path d="M0 0H8L4 5Z" fill="#b0b0b0"/></svg><div class="t" style="left:19px;top:145.69px;font-size:11px;color:#e6e6e6;">Camera ...</div><svg style="left:88px;top:148px" width="5" height="5" viewBox="0 0 5 5"><circle cx="2.5" cy="2.5" r="2.3" fill="#8a8a8a"/></svg><div class="a" style="left:98px;top:142px;width:22px;height:18px;background:#353535;border:1px solid #4e4e4e;"></div><svg style="left:106px;top:147px" width="6" height="8" viewBox="0 0 6 8"><path d="M0 0L6 4L0 8Z" fill="#b0b0b0"/></svg><div class="t" style="left:127px;top:147.86px;font-size:10.8px;color:#e6e6e6;">Camera</div><div class="a" style="left:166px;top:144px;width:1px;height:12px;background:#4a78c0;"></div></div><div class="a" style="left:833px;top:659px;width:93px;height:26px;background:#383838;border:1px solid #5a5a5a;"></div><div class="t" style="left:868px;top:667.27px;font-size:11.5px;color:#e6e6e6;">Info</div></body></html>
